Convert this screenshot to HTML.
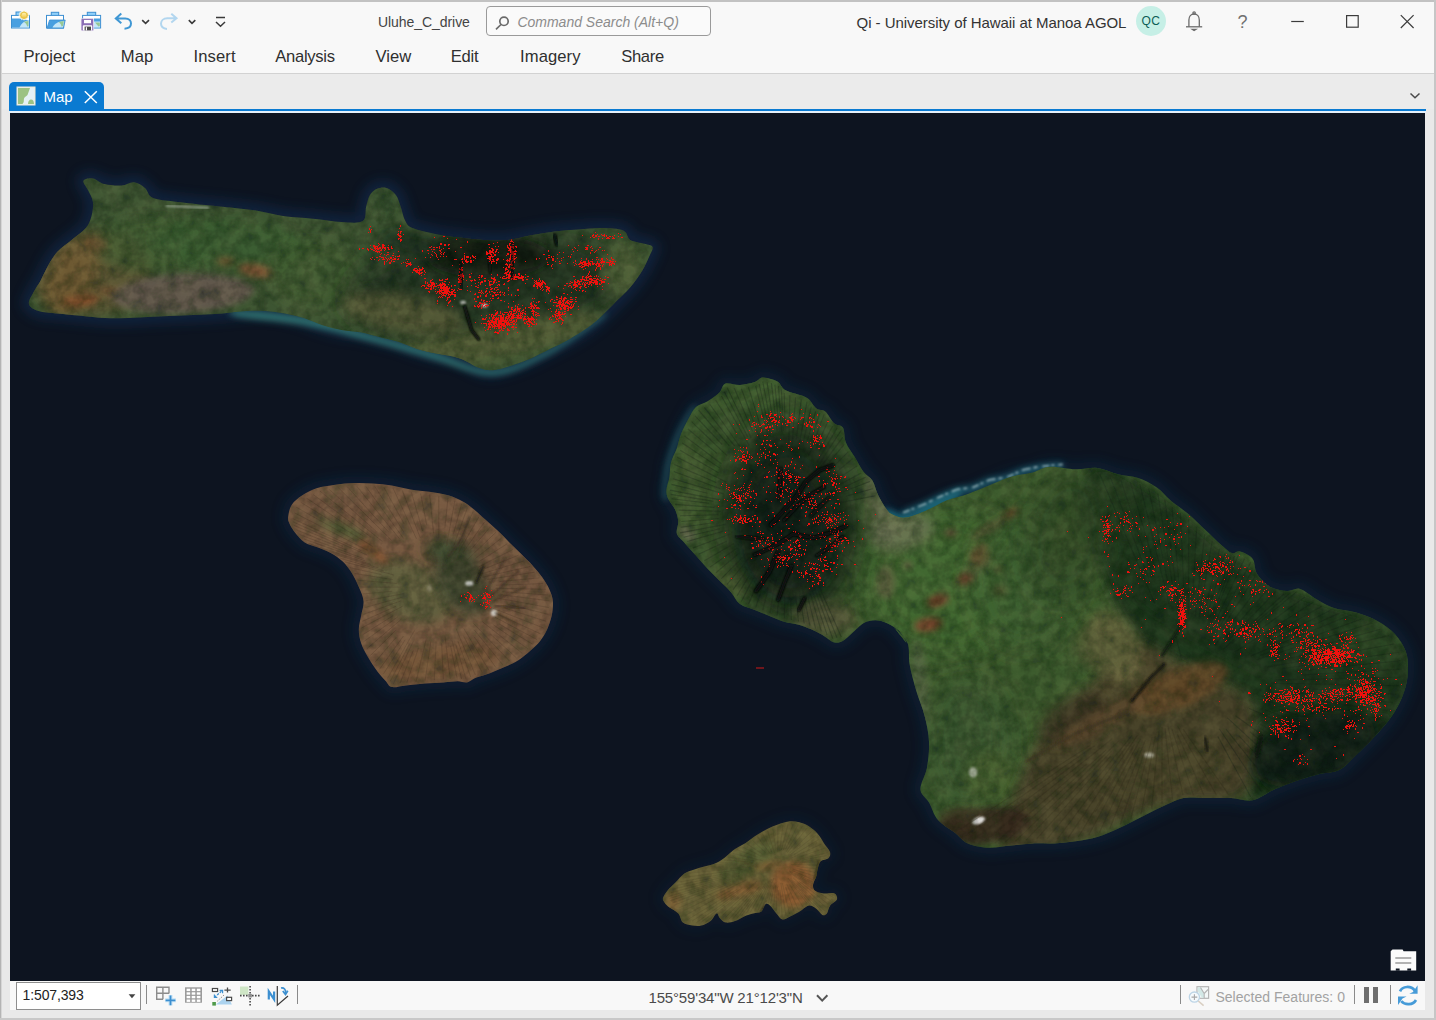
<!DOCTYPE html>
<html lang="en">
<head>
<meta charset="utf-8">
<title>Uluhe_C_drive - Map - ArcGIS Pro</title>
<style>
*{box-sizing:border-box;margin:0;padding:0}
html,body{width:1436px;height:1020px;overflow:hidden}
body{position:relative;background:#e9e9e9;font-family:"Liberation Sans",sans-serif;color:#333}
.abs{position:absolute}
#frame-t{left:0;top:0;width:1436px;height:2px;background:#c2c2c2}
#frame-l{left:0;top:0;width:2px;height:1020px;background:#d6d6d6;border-left:1px solid #b4b4b4}
#frame-r{left:1434px;top:0;width:2px;height:1020px;background:#c6c6c6}
#frame-b{left:0;top:1018px;width:1436px;height:2px;background:#c8c8c8}
#titlebar{left:2px;top:2px;width:1432px;height:71px;background:#f8f8f8}
#menuline{left:2px;top:73px;width:1432px;height:1px;background:#d2d2d2}
#tabstrip{left:2px;top:74px;width:1432px;height:35px;background:#ebebeb}
.t{position:absolute;white-space:nowrap;line-height:1}
.menu{font-size:16.6px;color:#2f2f2f;top:48.7px}
#tab{left:9px;top:82px;width:95px;height:28px;background:#0a7ad1;border-radius:5px 5px 0 0}
#tabline{left:9px;top:109px;width:1417px;height:2px;background:#0a7ad1}
#tabline2{left:9px;top:111px;width:1417px;height:2px;background:#e4f0fa}
#map{left:10px;top:113px;width:1415px;height:868px;background:#0d1420;overflow:hidden}
#status{left:10px;top:981px;width:1415px;height:29px;background:#f8f8f8}
#scalebox{left:16px;top:982px;width:125px;height:28px;background:#fff;border:1px solid #8e8e8e}
.sep{position:absolute;width:1px;background:#8a8a8a;top:985px;height:19px}
svg{position:absolute;overflow:visible}
</style>
</head>
<body>
<div class="abs" id="titlebar"></div>
<div class="abs" id="menuline"></div>
<div class="abs" id="tabstrip"></div>
<div class="abs" id="frame-t"></div><div class="abs" id="frame-l"></div><div class="abs" id="frame-r"></div><div class="abs" id="frame-b"></div>


<div class="t" style="left:378px;top:15.2px;font-size:14px;letter-spacing:-.06px;color:#444">Uluhe_C_drive</div>
<div class="abs" style="left:486px;top:6px;width:225px;height:30px;border:1px solid #9a9a9a;border-radius:4px;background:#fafafa"></div>
<div class="t" style="left:517.4px;top:15.2px;font-size:14px;font-style:italic;color:#8c8c8c">Command Search (Alt+Q)</div>
<div class="t" style="left:856.6px;top:14.8px;font-size:15px;letter-spacing:-.05px;color:#333">Qi - University of Hawaii at Manoa AGOL</div>
<div class="abs" style="left:1136px;top:6px;width:30px;height:30px;border-radius:50%;background:#c6efe6"></div>
<div class="t" style="left:1141.6px;top:15.1px;font-size:12px;letter-spacing:.3px;color:#0b5d55">QC</div>
<div class="t" style="left:1237.6px;top:13.3px;font-size:18px;color:#707070">?</div>

<div class="t menu" style="left:23.5px">Project</div>
<div class="t menu" style="left:120.8px;letter-spacing:.1px">Map</div>
<div class="t menu" style="left:193.5px;letter-spacing:.1px">Insert</div>
<div class="t menu" style="left:275.3px;letter-spacing:-.3px">Analysis</div>
<div class="t menu" style="left:375.5px">View</div>
<div class="t menu" style="left:450.7px;letter-spacing:-.25px">Edit</div>
<div class="t menu" style="left:520px;letter-spacing:.1px">Imagery</div>
<div class="t menu" style="left:621.2px;letter-spacing:-.33px">Share</div>

<div class="abs" id="tab"></div>
<div class="abs" id="tabline"></div>
<div class="abs" id="tabline2"></div>
<div class="t" style="left:43.4px;top:89.2px;font-size:15px;color:#fff">Map</div>

<div class="abs" id="map">
<svg width="1415" height="868" viewBox="10 113 1415 868">
<defs>
<filter id="b1" x="-30%" y="-30%" width="160%" height="160%"><feGaussianBlur stdDeviation="1"/></filter>
<filter id="b3" x="-60%" y="-60%" width="220%" height="220%"><feGaussianBlur stdDeviation="3"/></filter>
<filter id="b6" x="-100%" y="-100%" width="300%" height="300%"><feGaussianBlur stdDeviation="6"/></filter>
<filter id="b12" x="-150%" y="-150%" width="400%" height="400%"><feGaussianBlur stdDeviation="12"/></filter>
<filter id="b07"><feGaussianBlur stdDeviation=".7"/></filter>
<filter id="tex" x="0" y="0" width="100%" height="100%"><feTurbulence type="fractalNoise" baseFrequency=".09" numOctaves="3" seed="4" result="n"/><feColorMatrix in="n" type="matrix" values="0 0 0 0 0  0 0 0 0 0  0 0 0 0 0  1.6 0 0 0 -.55" result="a"/><feComposite in="SourceGraphic" in2="a" operator="in"/></filter>
<filter id="tex2" x="0" y="0" width="100%" height="100%"><feTurbulence type="fractalNoise" baseFrequency=".05" numOctaves="4" seed="11" result="n"/><feColorMatrix in="n" type="matrix" values="0 0 0 0 0  0 0 0 0 0  0 0 0 0 0  0 1.8 0 0 -.6" result="a"/><feComposite in="SourceGraphic" in2="a" operator="in"/></filter>
<clipPath id="c-mol"><path d="M83.4 180.8C84.2 178.8 89.3 177.9 92.9 178.4C96.4 179.0 100.0 182.9 104.7 184.1C109.4 185.3 116.4 185.8 121.3 185.5C126.2 185.2 130.1 181.8 134.1 182.2C138.0 182.6 142.0 185.4 145.0 187.9C148.0 190.4 147.7 195.1 152.1 197.4C156.4 199.6 163.1 200.0 171.0 201.1C178.9 202.3 190.7 203.5 199.4 204.5C208.1 205.4 213.6 205.8 223.1 206.8C232.6 207.9 246.0 209.0 256.2 210.6C266.5 212.2 275.2 215.0 284.7 216.3C294.1 217.6 303.6 217.7 313.1 218.7C322.5 219.6 333.2 221.6 341.5 222.0C349.8 222.4 358.7 223.6 362.8 221.0C366.9 218.5 364.9 211.2 366.1 206.8C367.3 202.5 368.1 198.0 369.9 195.0C371.7 192.0 374.2 190.0 377.0 188.8C379.8 187.6 383.3 186.9 386.5 187.9C389.6 188.9 393.6 191.8 395.9 195.0C398.3 198.1 399.1 202.5 400.7 206.8C402.2 211.2 403.4 217.5 405.4 221.0C407.4 224.6 407.4 225.9 412.5 228.1C417.6 230.3 428.3 232.7 436.2 234.3C444.1 235.9 452.0 236.7 459.9 237.6C467.8 238.6 475.6 239.6 483.5 240.0C491.4 240.4 499.3 240.8 507.2 240.0C515.1 239.2 523.0 236.7 530.9 235.2C538.8 233.8 546.7 232.4 554.6 231.4C562.5 230.5 570.4 230.1 578.2 229.6C586.1 229.0 594.4 228.0 601.9 228.1C609.4 228.3 618.5 228.5 623.2 230.5C628.0 232.5 626.8 237.8 630.3 240.0C633.9 242.2 640.8 242.6 644.5 243.8C648.2 244.9 651.8 244.9 652.6 247.1C653.4 249.2 651.0 252.6 649.3 256.5C647.5 260.5 645.3 265.6 642.2 270.8C639.0 275.9 634.7 282.2 630.3 287.3C626.0 292.5 620.9 296.8 616.1 301.5C611.4 306.3 606.7 311.4 601.9 315.7C597.2 320.1 593.2 323.6 587.7 327.6C582.2 331.5 575.1 335.9 568.8 339.4C562.5 343.0 556.1 345.7 549.8 348.9C543.5 352.0 537.2 355.6 530.9 358.4C524.6 361.1 518.3 363.5 511.9 365.5C505.6 367.4 498.5 369.8 493.0 370.2C487.5 370.6 484.3 369.8 478.8 367.8C473.3 365.9 467.0 360.7 459.9 358.4C452.8 356.0 443.3 355.2 436.2 353.6C429.1 352.0 423.6 350.9 417.2 348.9C410.9 346.9 404.6 343.8 398.3 341.8C392.0 339.8 385.7 338.6 379.4 337.0C373.0 335.5 366.7 333.5 360.4 332.3C354.1 331.1 347.8 331.1 341.5 329.9C335.2 328.8 328.8 327.2 322.5 325.2C316.2 323.2 309.9 320.1 303.6 318.1C297.3 316.1 291.0 314.6 284.7 313.4C278.3 312.2 272.0 311.4 265.7 311.0C259.4 310.6 253.9 310.6 246.8 311.0C239.7 311.4 231.0 312.7 223.1 313.4C215.2 314.0 207.3 314.4 199.4 314.8C191.5 315.2 183.6 315.4 175.7 315.7C167.8 316.1 160.0 316.3 152.1 316.7C144.2 317.1 136.3 317.9 128.4 318.1C120.5 318.3 112.6 318.5 104.7 318.1C96.8 317.7 88.9 316.5 81.0 315.7C73.1 314.9 64.5 314.2 57.4 313.4C50.3 312.6 43.1 312.6 38.4 311.0C33.7 309.4 29.7 307.1 28.9 303.9C28.2 300.7 31.7 296.0 33.7 292.1C35.6 288.1 38.4 284.6 40.8 280.2C43.1 275.9 45.1 270.8 47.9 266.0C50.6 261.3 53.4 256.2 57.4 251.8C61.3 247.5 66.8 243.9 71.6 240.0C76.3 236.0 82.5 232.1 85.8 228.1C89.1 224.2 90.3 220.6 91.4 216.3C92.6 212.0 93.4 206.4 92.9 202.1C92.3 197.7 89.7 193.8 88.1 190.3C86.6 186.7 82.6 182.8 83.4 180.8Z"/></clipPath>
<clipPath id="c-lan"><path d="M288.2 516.5C288.6 513.3 289.4 508.2 291.8 504.7C294.1 501.2 298.2 498.0 302.4 495.3C306.5 492.5 311.0 490.0 316.5 488.2C322.0 486.5 329.0 485.6 335.3 484.7C341.6 483.8 347.8 483.3 354.1 483.1C360.4 482.9 366.7 483.1 372.9 483.5C379.2 483.9 385.5 484.4 391.8 485.4C398.0 486.4 404.3 488.4 410.6 489.4C416.9 490.5 423.1 490.8 429.4 491.8C435.7 492.7 442.7 493.7 448.2 495.3C453.7 496.9 458.0 498.8 462.4 501.2C466.7 503.5 470.2 506.3 474.1 509.4C478.0 512.5 482.0 516.5 485.9 520.0C489.8 523.5 493.7 526.9 497.6 530.6C501.6 534.3 505.5 538.4 509.4 542.4C513.3 546.3 517.3 550.2 521.2 554.1C525.1 558.0 529.4 562.0 532.9 565.9C536.5 569.8 539.6 573.7 542.4 577.6C545.1 581.6 547.6 585.5 549.4 589.4C551.2 593.3 552.5 596.9 552.9 601.2C553.3 605.5 552.7 610.6 551.8 615.3C550.8 620.0 549.0 625.1 547.1 629.4C545.1 633.7 542.7 637.6 540.0 641.2C537.3 644.7 534.1 647.5 530.6 650.6C527.1 653.7 523.1 657.3 518.8 660.0C514.5 662.7 509.4 664.9 504.7 667.1C500.0 669.2 495.3 671.2 490.6 672.9C485.9 674.7 480.4 676.1 476.5 677.6C472.5 679.2 470.2 681.8 467.1 682.4C463.9 682.9 461.6 681.2 457.6 681.2C453.7 681.2 449.0 682.0 443.5 682.4C438.0 682.7 431.0 683.0 424.7 683.5C418.4 684.0 411.4 684.8 405.9 685.4C400.4 686.0 395.1 687.8 391.8 687.1C388.4 686.4 388.2 683.7 385.9 681.2C383.5 678.6 380.6 675.7 377.6 671.8C374.7 667.8 371.0 662.4 368.2 657.6C365.5 652.9 362.7 648.2 361.2 643.5C359.6 638.8 358.8 634.1 358.8 629.4C358.8 624.7 360.4 620.0 361.2 615.3C362.0 610.6 363.9 605.9 363.5 601.2C363.1 596.5 360.8 591.8 358.8 587.1C356.9 582.4 354.5 577.3 351.8 572.9C349.0 568.6 345.9 564.5 342.4 561.2C338.8 557.8 334.9 555.3 330.6 552.9C326.3 550.6 320.8 548.8 316.5 547.1C312.2 545.3 308.2 544.7 304.7 542.4C301.2 540.0 297.8 536.1 295.3 532.9C292.7 529.8 290.6 526.3 289.4 523.5C288.2 520.8 287.8 519.6 288.2 516.5Z"/></clipPath>
<clipPath id="c-kah"><path d="M663.0 898.1C663.5 896.0 665.5 892.9 667.6 890.4C669.6 887.8 672.4 885.5 675.2 882.7C678.0 879.9 681.4 875.7 684.4 873.5C687.5 871.4 690.3 870.9 693.6 869.7C696.9 868.6 700.5 867.8 704.3 866.6C708.2 865.5 713.0 864.5 716.6 862.8C720.2 861.2 722.7 859.0 725.8 856.7C728.9 854.4 731.7 851.3 735.0 849.0C738.3 846.7 742.1 845.2 745.7 842.9C749.3 840.6 752.9 837.5 756.4 835.2C760.0 832.9 763.6 830.9 767.2 829.1C770.7 827.3 774.3 825.8 777.9 824.5C781.5 823.2 785.0 821.8 788.6 821.4C792.2 821.1 796.0 821.4 799.3 822.2C802.7 823.0 805.5 824.1 808.5 826.0C811.6 828.0 815.2 830.9 817.7 833.7C820.3 836.5 821.8 839.8 823.8 842.9C825.9 846.0 829.2 849.5 830.0 852.1C830.7 854.6 830.0 856.7 828.4 858.2C826.9 859.7 822.6 859.5 820.8 861.3C819.0 863.1 818.5 866.4 817.7 868.9C816.9 871.5 816.9 874.0 816.2 876.6C815.4 879.2 813.4 882.0 813.1 884.3C812.9 886.6 812.9 888.9 814.7 890.4C816.4 891.9 820.5 892.9 823.8 893.5C827.2 894.0 832.4 892.4 834.6 893.5C836.7 894.5 837.6 897.5 836.9 899.6C836.1 901.6 831.6 903.4 830.0 905.7C828.3 908.0 828.2 911.8 826.9 913.4C825.6 914.9 824.1 915.7 822.3 914.9C820.5 914.1 818.5 910.3 816.2 908.8C813.9 907.2 811.3 905.2 808.5 905.7C805.7 906.2 802.4 910.1 799.3 911.8C796.3 913.6 792.9 915.2 790.1 916.4C787.3 917.7 784.8 920.0 782.5 919.5C780.2 919.0 778.4 915.7 776.4 913.4C774.3 911.1 772.0 907.2 770.2 905.7C768.4 904.2 767.2 903.2 765.6 904.2C764.1 905.2 763.1 910.3 761.0 911.8C759.0 913.4 756.2 912.6 753.4 913.4C750.6 914.1 747.2 915.2 744.2 916.4C741.1 917.7 738.1 920.0 735.0 921.0C731.9 922.1 728.3 923.1 725.8 922.6C723.2 922.1 721.2 919.5 719.7 918.0C718.1 916.4 718.1 912.9 716.6 913.4C715.1 913.9 713.0 919.0 710.5 921.0C707.9 923.1 704.3 924.9 701.3 925.6C698.2 926.4 695.2 926.1 692.1 925.6C689.0 925.1 685.2 924.6 682.9 922.6C680.6 920.5 680.6 915.9 678.3 913.4C676.0 910.8 671.4 909.0 669.1 907.2C666.8 905.5 665.5 904.2 664.5 902.6C663.5 901.1 662.5 900.1 663.0 898.1Z"/></clipPath>
<clipPath id="c-maui"><path d="M885.9 511.2C887.1 511.0 896.7 517.7 903.1 517.7C909.6 517.7 917.5 514.1 924.7 511.2C931.9 508.3 939.1 503.3 946.3 500.4C953.5 497.5 960.7 496.5 967.9 493.9C975.1 491.4 982.3 488.2 989.4 485.3C996.6 482.4 1003.8 478.8 1011.0 476.7C1018.2 474.5 1026.1 474.0 1032.6 472.4C1039.1 470.7 1042.7 467.3 1049.9 466.8C1057.0 466.2 1067.8 469.1 1075.7 469.3C1083.7 469.6 1090.1 467.2 1097.3 468.0C1104.5 468.9 1112.1 472.9 1118.9 474.5C1125.7 476.2 1132.0 475.8 1138.3 478.0C1144.6 480.1 1151.3 483.6 1156.9 487.5C1162.4 491.3 1166.2 496.8 1171.5 501.3C1176.9 505.7 1183.2 509.5 1188.8 514.2C1194.4 519.0 1199.9 524.7 1205.2 529.8C1210.5 534.8 1216.3 540.5 1220.7 544.4C1225.2 548.3 1228.8 551.9 1231.9 553.1C1235.1 554.2 1236.3 550.4 1239.7 551.3C1243.2 552.3 1249.8 554.9 1252.7 558.7C1255.5 562.4 1254.1 569.1 1257.0 573.8C1259.8 578.4 1264.9 583.8 1269.9 586.7C1275.0 589.6 1282.1 590.7 1287.2 591.0C1292.2 591.4 1295.1 587.4 1300.1 588.9C1305.2 590.3 1311.6 596.4 1317.4 599.7C1323.1 602.9 1328.2 606.1 1334.6 608.3C1341.1 610.4 1349.0 610.4 1356.2 612.6C1363.4 614.8 1371.3 617.6 1377.8 621.2C1384.3 624.8 1390.4 629.1 1395.0 634.2C1399.7 639.2 1403.7 645.7 1405.8 651.4C1408.0 657.2 1408.0 662.9 1408.0 668.7C1408.0 674.4 1407.3 680.2 1405.8 686.0C1404.4 691.7 1402.2 697.5 1399.4 703.2C1396.5 709.0 1392.9 714.7 1388.6 720.5C1384.3 726.2 1378.9 732.0 1373.5 737.7C1368.1 743.5 1362.0 749.6 1356.2 755.0C1350.5 760.4 1345.4 766.9 1339.0 770.1C1332.5 773.3 1324.6 772.6 1317.4 774.4C1310.2 776.2 1303.0 778.4 1295.8 780.9C1288.6 783.4 1281.4 786.3 1274.2 789.5C1267.0 792.7 1259.8 798.9 1252.7 800.3C1245.5 801.7 1239.0 798.5 1231.1 798.1C1223.2 797.8 1213.1 798.1 1205.2 798.1C1197.3 798.1 1190.8 796.7 1183.6 798.1C1176.4 799.6 1169.2 803.5 1162.0 806.8C1154.9 810.0 1147.7 814.0 1140.5 817.6C1133.3 821.2 1126.1 825.1 1118.9 828.3C1111.7 831.6 1104.5 834.8 1097.3 837.0C1090.1 839.1 1082.9 840.2 1075.7 841.3C1068.6 842.4 1061.4 843.1 1054.2 843.4C1047.0 843.8 1039.8 843.1 1032.6 843.4C1025.4 843.8 1018.2 844.9 1011.0 845.6C1003.8 846.3 996.6 848.1 989.4 847.8C982.3 847.4 973.6 846.0 967.9 843.4C962.1 840.9 960.0 836.6 954.9 832.7C949.9 828.7 942.0 824.7 937.7 819.7C933.4 814.7 931.9 807.5 929.0 802.5C926.2 797.4 920.8 795.3 920.4 789.5C920.0 783.8 925.4 775.8 926.9 767.9C928.3 760.0 929.4 750.7 929.0 742.0C928.7 733.4 926.9 724.8 924.7 716.2C922.6 707.5 918.6 698.9 916.1 690.3C913.6 681.6 911.1 672.3 909.6 664.4C908.2 656.5 910.0 648.9 907.5 642.8C904.9 636.7 894.7 627.8 894.5 627.7C894.3 627.6 905.5 641.9 906.2 642.4C906.9 642.8 902.0 633.8 898.8 630.6C895.6 627.4 891.0 625.0 887.1 623.2C883.1 621.5 879.2 620.3 875.3 620.3C871.4 620.3 867.5 621.0 863.5 623.2C859.6 625.4 855.2 630.6 851.8 633.5C848.3 636.5 845.9 639.4 842.9 640.9C840.0 642.4 837.5 643.3 834.1 642.4C830.7 641.4 826.3 637.2 822.4 635.0C818.4 632.8 814.5 630.8 810.6 629.1C806.7 627.4 803.2 625.9 798.8 624.7C794.4 623.5 789.0 623.2 784.1 621.8C779.2 620.3 774.3 617.8 769.4 615.9C764.5 613.9 759.6 612.0 754.7 610.0C749.8 608.0 743.9 607.1 740.0 604.1C736.1 601.2 734.6 596.3 731.2 592.4C727.7 588.4 723.3 584.5 719.4 580.6C715.5 576.7 711.6 573.0 707.6 568.8C703.7 564.7 699.8 560.0 695.9 555.6C692.0 551.2 687.3 546.0 684.1 542.4C680.9 538.7 677.7 537.0 676.8 533.5C675.8 530.1 678.5 525.7 678.2 521.8C678.0 517.8 677.0 513.9 675.3 510.0C673.6 506.1 669.4 501.7 667.9 498.2C666.5 494.8 666.2 492.8 666.5 489.4C666.7 486.0 668.7 482.1 669.4 477.6C670.1 473.2 669.7 467.8 670.9 462.9C672.1 458.0 675.0 453.1 676.8 448.2C678.5 443.3 679.2 438.4 681.2 433.5C683.1 428.6 686.1 423.2 688.5 418.8C691.0 414.4 692.7 410.0 695.9 407.1C699.1 404.1 703.7 403.6 707.6 401.2C711.6 398.7 716.5 395.3 719.4 392.4C722.4 389.4 721.9 384.8 725.3 383.5C728.7 382.3 735.1 385.2 740.0 385.0C744.9 384.8 751.0 383.3 754.7 382.1C758.4 380.8 759.4 378.1 762.1 377.6C764.8 377.2 768.2 378.4 770.9 379.1C773.6 379.9 776.0 380.3 778.2 382.1C780.4 383.8 781.2 387.5 784.1 389.4C787.1 391.4 792.0 392.4 795.9 393.8C799.8 395.3 804.2 395.8 807.6 398.2C811.1 400.7 813.5 406.3 816.5 408.5C819.4 410.7 822.4 409.0 825.3 411.5C828.2 413.9 831.2 420.5 834.1 423.2C837.1 425.9 841.0 424.5 842.9 427.6C844.9 430.8 843.9 437.5 845.9 442.4C847.8 447.3 851.8 452.2 854.7 457.1C857.6 462.0 860.6 467.8 863.5 471.8C866.5 475.7 869.9 476.7 872.4 480.6C874.8 484.5 875.8 490.4 878.2 495.3C880.7 500.2 884.1 506.1 887.1 510.0C890.0 513.9 896.1 518.6 895.9 518.8C895.7 519.0 884.7 511.4 885.9 511.2Z"/></clipPath>
</defs>
<rect x="10" y="113" width="1415" height="868" fill="#0d1420"/>
<path d="M83.4 180.8C84.2 178.8 89.3 177.9 92.9 178.4C96.4 179.0 100.0 182.9 104.7 184.1C109.4 185.3 116.4 185.8 121.3 185.5C126.2 185.2 130.1 181.8 134.1 182.2C138.0 182.6 142.0 185.4 145.0 187.9C148.0 190.4 147.7 195.1 152.1 197.4C156.4 199.6 163.1 200.0 171.0 201.1C178.9 202.3 190.7 203.5 199.4 204.5C208.1 205.4 213.6 205.8 223.1 206.8C232.6 207.9 246.0 209.0 256.2 210.6C266.5 212.2 275.2 215.0 284.7 216.3C294.1 217.6 303.6 217.7 313.1 218.7C322.5 219.6 333.2 221.6 341.5 222.0C349.8 222.4 358.7 223.6 362.8 221.0C366.9 218.5 364.9 211.2 366.1 206.8C367.3 202.5 368.1 198.0 369.9 195.0C371.7 192.0 374.2 190.0 377.0 188.8C379.8 187.6 383.3 186.9 386.5 187.9C389.6 188.9 393.6 191.8 395.9 195.0C398.3 198.1 399.1 202.5 400.7 206.8C402.2 211.2 403.4 217.5 405.4 221.0C407.4 224.6 407.4 225.9 412.5 228.1C417.6 230.3 428.3 232.7 436.2 234.3C444.1 235.9 452.0 236.7 459.9 237.6C467.8 238.6 475.6 239.6 483.5 240.0C491.4 240.4 499.3 240.8 507.2 240.0C515.1 239.2 523.0 236.7 530.9 235.2C538.8 233.8 546.7 232.4 554.6 231.4C562.5 230.5 570.4 230.1 578.2 229.6C586.1 229.0 594.4 228.0 601.9 228.1C609.4 228.3 618.5 228.5 623.2 230.5C628.0 232.5 626.8 237.8 630.3 240.0C633.9 242.2 640.8 242.6 644.5 243.8C648.2 244.9 651.8 244.9 652.6 247.1C653.4 249.2 651.0 252.6 649.3 256.5C647.5 260.5 645.3 265.6 642.2 270.8C639.0 275.9 634.7 282.2 630.3 287.3C626.0 292.5 620.9 296.8 616.1 301.5C611.4 306.3 606.7 311.4 601.9 315.7C597.2 320.1 593.2 323.6 587.7 327.6C582.2 331.5 575.1 335.9 568.8 339.4C562.5 343.0 556.1 345.7 549.8 348.9C543.5 352.0 537.2 355.6 530.9 358.4C524.6 361.1 518.3 363.5 511.9 365.5C505.6 367.4 498.5 369.8 493.0 370.2C487.5 370.6 484.3 369.8 478.8 367.8C473.3 365.9 467.0 360.7 459.9 358.4C452.8 356.0 443.3 355.2 436.2 353.6C429.1 352.0 423.6 350.9 417.2 348.9C410.9 346.9 404.6 343.8 398.3 341.8C392.0 339.8 385.7 338.6 379.4 337.0C373.0 335.5 366.7 333.5 360.4 332.3C354.1 331.1 347.8 331.1 341.5 329.9C335.2 328.8 328.8 327.2 322.5 325.2C316.2 323.2 309.9 320.1 303.6 318.1C297.3 316.1 291.0 314.6 284.7 313.4C278.3 312.2 272.0 311.4 265.7 311.0C259.4 310.6 253.9 310.6 246.8 311.0C239.7 311.4 231.0 312.7 223.1 313.4C215.2 314.0 207.3 314.4 199.4 314.8C191.5 315.2 183.6 315.4 175.7 315.7C167.8 316.1 160.0 316.3 152.1 316.7C144.2 317.1 136.3 317.9 128.4 318.1C120.5 318.3 112.6 318.5 104.7 318.1C96.8 317.7 88.9 316.5 81.0 315.7C73.1 314.9 64.5 314.2 57.4 313.4C50.3 312.6 43.1 312.6 38.4 311.0C33.7 309.4 29.7 307.1 28.9 303.9C28.2 300.7 31.7 296.0 33.7 292.1C35.6 288.1 38.4 284.6 40.8 280.2C43.1 275.9 45.1 270.8 47.9 266.0C50.6 261.3 53.4 256.2 57.4 251.8C61.3 247.5 66.8 243.9 71.6 240.0C76.3 236.0 82.5 232.1 85.8 228.1C89.1 224.2 90.3 220.6 91.4 216.3C92.6 212.0 93.4 206.4 92.9 202.1C92.3 197.7 89.7 193.8 88.1 190.3C86.6 186.7 82.6 182.8 83.4 180.8Z" fill="none" stroke="#123660" stroke-width="14" filter="url(#b6)" opacity="0.45"/>
<path d="M288.2 516.5C288.6 513.3 289.4 508.2 291.8 504.7C294.1 501.2 298.2 498.0 302.4 495.3C306.5 492.5 311.0 490.0 316.5 488.2C322.0 486.5 329.0 485.6 335.3 484.7C341.6 483.8 347.8 483.3 354.1 483.1C360.4 482.9 366.7 483.1 372.9 483.5C379.2 483.9 385.5 484.4 391.8 485.4C398.0 486.4 404.3 488.4 410.6 489.4C416.9 490.5 423.1 490.8 429.4 491.8C435.7 492.7 442.7 493.7 448.2 495.3C453.7 496.9 458.0 498.8 462.4 501.2C466.7 503.5 470.2 506.3 474.1 509.4C478.0 512.5 482.0 516.5 485.9 520.0C489.8 523.5 493.7 526.9 497.6 530.6C501.6 534.3 505.5 538.4 509.4 542.4C513.3 546.3 517.3 550.2 521.2 554.1C525.1 558.0 529.4 562.0 532.9 565.9C536.5 569.8 539.6 573.7 542.4 577.6C545.1 581.6 547.6 585.5 549.4 589.4C551.2 593.3 552.5 596.9 552.9 601.2C553.3 605.5 552.7 610.6 551.8 615.3C550.8 620.0 549.0 625.1 547.1 629.4C545.1 633.7 542.7 637.6 540.0 641.2C537.3 644.7 534.1 647.5 530.6 650.6C527.1 653.7 523.1 657.3 518.8 660.0C514.5 662.7 509.4 664.9 504.7 667.1C500.0 669.2 495.3 671.2 490.6 672.9C485.9 674.7 480.4 676.1 476.5 677.6C472.5 679.2 470.2 681.8 467.1 682.4C463.9 682.9 461.6 681.2 457.6 681.2C453.7 681.2 449.0 682.0 443.5 682.4C438.0 682.7 431.0 683.0 424.7 683.5C418.4 684.0 411.4 684.8 405.9 685.4C400.4 686.0 395.1 687.8 391.8 687.1C388.4 686.4 388.2 683.7 385.9 681.2C383.5 678.6 380.6 675.7 377.6 671.8C374.7 667.8 371.0 662.4 368.2 657.6C365.5 652.9 362.7 648.2 361.2 643.5C359.6 638.8 358.8 634.1 358.8 629.4C358.8 624.7 360.4 620.0 361.2 615.3C362.0 610.6 363.9 605.9 363.5 601.2C363.1 596.5 360.8 591.8 358.8 587.1C356.9 582.4 354.5 577.3 351.8 572.9C349.0 568.6 345.9 564.5 342.4 561.2C338.8 557.8 334.9 555.3 330.6 552.9C326.3 550.6 320.8 548.8 316.5 547.1C312.2 545.3 308.2 544.7 304.7 542.4C301.2 540.0 297.8 536.1 295.3 532.9C292.7 529.8 290.6 526.3 289.4 523.5C288.2 520.8 287.8 519.6 288.2 516.5Z" fill="none" stroke="#112c4a" stroke-width="12" filter="url(#b6)" opacity="0.45"/>
<path d="M663.0 898.1C663.5 896.0 665.5 892.9 667.6 890.4C669.6 887.8 672.4 885.5 675.2 882.7C678.0 879.9 681.4 875.7 684.4 873.5C687.5 871.4 690.3 870.9 693.6 869.7C696.9 868.6 700.5 867.8 704.3 866.6C708.2 865.5 713.0 864.5 716.6 862.8C720.2 861.2 722.7 859.0 725.8 856.7C728.9 854.4 731.7 851.3 735.0 849.0C738.3 846.7 742.1 845.2 745.7 842.9C749.3 840.6 752.9 837.5 756.4 835.2C760.0 832.9 763.6 830.9 767.2 829.1C770.7 827.3 774.3 825.8 777.9 824.5C781.5 823.2 785.0 821.8 788.6 821.4C792.2 821.1 796.0 821.4 799.3 822.2C802.7 823.0 805.5 824.1 808.5 826.0C811.6 828.0 815.2 830.9 817.7 833.7C820.3 836.5 821.8 839.8 823.8 842.9C825.9 846.0 829.2 849.5 830.0 852.1C830.7 854.6 830.0 856.7 828.4 858.2C826.9 859.7 822.6 859.5 820.8 861.3C819.0 863.1 818.5 866.4 817.7 868.9C816.9 871.5 816.9 874.0 816.2 876.6C815.4 879.2 813.4 882.0 813.1 884.3C812.9 886.6 812.9 888.9 814.7 890.4C816.4 891.9 820.5 892.9 823.8 893.5C827.2 894.0 832.4 892.4 834.6 893.5C836.7 894.5 837.6 897.5 836.9 899.6C836.1 901.6 831.6 903.4 830.0 905.7C828.3 908.0 828.2 911.8 826.9 913.4C825.6 914.9 824.1 915.7 822.3 914.9C820.5 914.1 818.5 910.3 816.2 908.8C813.9 907.2 811.3 905.2 808.5 905.7C805.7 906.2 802.4 910.1 799.3 911.8C796.3 913.6 792.9 915.2 790.1 916.4C787.3 917.7 784.8 920.0 782.5 919.5C780.2 919.0 778.4 915.7 776.4 913.4C774.3 911.1 772.0 907.2 770.2 905.7C768.4 904.2 767.2 903.2 765.6 904.2C764.1 905.2 763.1 910.3 761.0 911.8C759.0 913.4 756.2 912.6 753.4 913.4C750.6 914.1 747.2 915.2 744.2 916.4C741.1 917.7 738.1 920.0 735.0 921.0C731.9 922.1 728.3 923.1 725.8 922.6C723.2 922.1 721.2 919.5 719.7 918.0C718.1 916.4 718.1 912.9 716.6 913.4C715.1 913.9 713.0 919.0 710.5 921.0C707.9 923.1 704.3 924.9 701.3 925.6C698.2 926.4 695.2 926.1 692.1 925.6C689.0 925.1 685.2 924.6 682.9 922.6C680.6 920.5 680.6 915.9 678.3 913.4C676.0 910.8 671.4 909.0 669.1 907.2C666.8 905.5 665.5 904.2 664.5 902.6C663.5 901.1 662.5 900.1 663.0 898.1Z" fill="none" stroke="#102643" stroke-width="8" filter="url(#b6)" opacity="0.35"/>
<path d="M885.9 511.2C887.1 511.0 896.7 517.7 903.1 517.7C909.6 517.7 917.5 514.1 924.7 511.2C931.9 508.3 939.1 503.3 946.3 500.4C953.5 497.5 960.7 496.5 967.9 493.9C975.1 491.4 982.3 488.2 989.4 485.3C996.6 482.4 1003.8 478.8 1011.0 476.7C1018.2 474.5 1026.1 474.0 1032.6 472.4C1039.1 470.7 1042.7 467.3 1049.9 466.8C1057.0 466.2 1067.8 469.1 1075.7 469.3C1083.7 469.6 1090.1 467.2 1097.3 468.0C1104.5 468.9 1112.1 472.9 1118.9 474.5C1125.7 476.2 1132.0 475.8 1138.3 478.0C1144.6 480.1 1151.3 483.6 1156.9 487.5C1162.4 491.3 1166.2 496.8 1171.5 501.3C1176.9 505.7 1183.2 509.5 1188.8 514.2C1194.4 519.0 1199.9 524.7 1205.2 529.8C1210.5 534.8 1216.3 540.5 1220.7 544.4C1225.2 548.3 1228.8 551.9 1231.9 553.1C1235.1 554.2 1236.3 550.4 1239.7 551.3C1243.2 552.3 1249.8 554.9 1252.7 558.7C1255.5 562.4 1254.1 569.1 1257.0 573.8C1259.8 578.4 1264.9 583.8 1269.9 586.7C1275.0 589.6 1282.1 590.7 1287.2 591.0C1292.2 591.4 1295.1 587.4 1300.1 588.9C1305.2 590.3 1311.6 596.4 1317.4 599.7C1323.1 602.9 1328.2 606.1 1334.6 608.3C1341.1 610.4 1349.0 610.4 1356.2 612.6C1363.4 614.8 1371.3 617.6 1377.8 621.2C1384.3 624.8 1390.4 629.1 1395.0 634.2C1399.7 639.2 1403.7 645.7 1405.8 651.4C1408.0 657.2 1408.0 662.9 1408.0 668.7C1408.0 674.4 1407.3 680.2 1405.8 686.0C1404.4 691.7 1402.2 697.5 1399.4 703.2C1396.5 709.0 1392.9 714.7 1388.6 720.5C1384.3 726.2 1378.9 732.0 1373.5 737.7C1368.1 743.5 1362.0 749.6 1356.2 755.0C1350.5 760.4 1345.4 766.9 1339.0 770.1C1332.5 773.3 1324.6 772.6 1317.4 774.4C1310.2 776.2 1303.0 778.4 1295.8 780.9C1288.6 783.4 1281.4 786.3 1274.2 789.5C1267.0 792.7 1259.8 798.9 1252.7 800.3C1245.5 801.7 1239.0 798.5 1231.1 798.1C1223.2 797.8 1213.1 798.1 1205.2 798.1C1197.3 798.1 1190.8 796.7 1183.6 798.1C1176.4 799.6 1169.2 803.5 1162.0 806.8C1154.9 810.0 1147.7 814.0 1140.5 817.6C1133.3 821.2 1126.1 825.1 1118.9 828.3C1111.7 831.6 1104.5 834.8 1097.3 837.0C1090.1 839.1 1082.9 840.2 1075.7 841.3C1068.6 842.4 1061.4 843.1 1054.2 843.4C1047.0 843.8 1039.8 843.1 1032.6 843.4C1025.4 843.8 1018.2 844.9 1011.0 845.6C1003.8 846.3 996.6 848.1 989.4 847.8C982.3 847.4 973.6 846.0 967.9 843.4C962.1 840.9 960.0 836.6 954.9 832.7C949.9 828.7 942.0 824.7 937.7 819.7C933.4 814.7 931.9 807.5 929.0 802.5C926.2 797.4 920.8 795.3 920.4 789.5C920.0 783.8 925.4 775.8 926.9 767.9C928.3 760.0 929.4 750.7 929.0 742.0C928.7 733.4 926.9 724.8 924.7 716.2C922.6 707.5 918.6 698.9 916.1 690.3C913.6 681.6 911.1 672.3 909.6 664.4C908.2 656.5 910.0 648.9 907.5 642.8C904.9 636.7 894.7 627.8 894.5 627.7C894.3 627.6 905.5 641.9 906.2 642.4C906.9 642.8 902.0 633.8 898.8 630.6C895.6 627.4 891.0 625.0 887.1 623.2C883.1 621.5 879.2 620.3 875.3 620.3C871.4 620.3 867.5 621.0 863.5 623.2C859.6 625.4 855.2 630.6 851.8 633.5C848.3 636.5 845.9 639.4 842.9 640.9C840.0 642.4 837.5 643.3 834.1 642.4C830.7 641.4 826.3 637.2 822.4 635.0C818.4 632.8 814.5 630.8 810.6 629.1C806.7 627.4 803.2 625.9 798.8 624.7C794.4 623.5 789.0 623.2 784.1 621.8C779.2 620.3 774.3 617.8 769.4 615.9C764.5 613.9 759.6 612.0 754.7 610.0C749.8 608.0 743.9 607.1 740.0 604.1C736.1 601.2 734.6 596.3 731.2 592.4C727.7 588.4 723.3 584.5 719.4 580.6C715.5 576.7 711.6 573.0 707.6 568.8C703.7 564.7 699.8 560.0 695.9 555.6C692.0 551.2 687.3 546.0 684.1 542.4C680.9 538.7 677.7 537.0 676.8 533.5C675.8 530.1 678.5 525.7 678.2 521.8C678.0 517.8 677.0 513.9 675.3 510.0C673.6 506.1 669.4 501.7 667.9 498.2C666.5 494.8 666.2 492.8 666.5 489.4C666.7 486.0 668.7 482.1 669.4 477.6C670.1 473.2 669.7 467.8 670.9 462.9C672.1 458.0 675.0 453.1 676.8 448.2C678.5 443.3 679.2 438.4 681.2 433.5C683.1 428.6 686.1 423.2 688.5 418.8C691.0 414.4 692.7 410.0 695.9 407.1C699.1 404.1 703.7 403.6 707.6 401.2C711.6 398.7 716.5 395.3 719.4 392.4C722.4 389.4 721.9 384.8 725.3 383.5C728.7 382.3 735.1 385.2 740.0 385.0C744.9 384.8 751.0 383.3 754.7 382.1C758.4 380.8 759.4 378.1 762.1 377.6C764.8 377.2 768.2 378.4 770.9 379.1C773.6 379.9 776.0 380.3 778.2 382.1C780.4 383.8 781.2 387.5 784.1 389.4C787.1 391.4 792.0 392.4 795.9 393.8C799.8 395.3 804.2 395.8 807.6 398.2C811.1 400.7 813.5 406.3 816.5 408.5C819.4 410.7 822.4 409.0 825.3 411.5C828.2 413.9 831.2 420.5 834.1 423.2C837.1 425.9 841.0 424.5 842.9 427.6C844.9 430.8 843.9 437.5 845.9 442.4C847.8 447.3 851.8 452.2 854.7 457.1C857.6 462.0 860.6 467.8 863.5 471.8C866.5 475.7 869.9 476.7 872.4 480.6C874.8 484.5 875.8 490.4 878.2 495.3C880.7 500.2 884.1 506.1 887.1 510.0C890.0 513.9 896.1 518.6 895.9 518.8C895.7 519.0 884.7 511.4 885.9 511.2Z" fill="none" stroke="#112e4e" stroke-width="12" filter="url(#b6)" opacity="0.4"/>
<path d="M237.3 310.0C248.3 310.0 281.5 312.7 303.6 316.7C325.7 320.6 347.8 327.7 369.8 333.7C391.9 339.7 415.6 346.7 436.1 352.7C456.7 358.6 474.0 370.3 493.0 369.7C511.9 369.1 531.6 358.0 549.8 348.9C567.9 339.7 593.6 319.5 601.9 314.8C610.1 310.0 608.6 313.7 599.5 320.5C590.4 327.2 565.2 346.3 547.4 355.5C529.6 364.6 511.5 374.6 493.0 375.4C474.4 376.2 456.7 365.9 436.1 360.2C415.6 354.5 391.9 347.1 369.8 341.3C347.8 335.4 325.7 329.3 303.6 325.2C281.5 321.1 248.3 319.2 237.3 316.7C226.2 314.1 226.2 310.0 237.3 310.0Z" fill="#3f9a8e" opacity=".65" filter="url(#b3)"/>
<path d="M885.9 509.0C889.8 508.7 900.3 516.2 907.5 515.5C914.7 514.8 920.4 508.8 929.0 504.7C937.7 500.6 954.6 492.0 959.2 490.9C963.9 489.8 962.1 494.5 957.1 498.3C952.1 502.0 937.3 509.0 929.0 513.4C920.8 517.7 915.0 523.4 907.5 524.1C899.9 524.9 887.3 520.2 883.7 517.7C880.1 515.2 881.9 509.4 885.9 509.0Z" fill="#1f7a8c" opacity=".8" filter="url(#b3)"/>
<path d="M667.9 498.2C668.3 496.5 666.0 495.3 666.5 489.4C667.0 483.5 668.4 472.3 670.9 462.9C673.3 453.6 677.0 442.8 681.2 433.5C685.3 424.2 694.2 411.2 695.9 407.1C697.6 402.9 694.7 404.1 691.5 408.5C688.3 412.9 680.9 424.5 676.8 433.5C672.6 442.6 668.8 453.6 666.5 462.9C664.2 472.3 663.3 483.3 662.9 489.4C662.5 495.5 663.3 498.2 664.1 499.7C665.0 501.2 667.5 500.0 667.9 498.2Z" fill="#2a7a80" opacity=".6" filter="url(#b3)"/>
<path d="M903.1 514.2L924.7 505.6L939.8 498.3L957.1 490.9L973.1 488.8L989.4 481.4L1006.7 478.8L1024.0 471.1L1039.9 468.0L1062.8 465.9" fill="none" stroke="#2a8a9a" stroke-width="7" opacity=".55" filter="url(#b3)"/>
<path d="M903.1 514.2L924.7 505.6L939.8 498.3L957.1 490.9L973.1 488.8L989.4 481.4L1006.7 478.8L1024.0 471.1L1039.9 468.0L1062.8 465.9" fill="none" stroke="#d4e8ea" stroke-width="1.8" stroke-dasharray="7 2 3 4 9 3 4 5" opacity=".6" filter="url(#b1)" transform="translate(0 -1.5)"/>
<g filter="url(#b07)"><path d="M83.4 180.8C84.2 178.8 89.3 177.9 92.9 178.4C96.4 179.0 100.0 182.9 104.7 184.1C109.4 185.3 116.4 185.8 121.3 185.5C126.2 185.2 130.1 181.8 134.1 182.2C138.0 182.6 142.0 185.4 145.0 187.9C148.0 190.4 147.7 195.1 152.1 197.4C156.4 199.6 163.1 200.0 171.0 201.1C178.9 202.3 190.7 203.5 199.4 204.5C208.1 205.4 213.6 205.8 223.1 206.8C232.6 207.9 246.0 209.0 256.2 210.6C266.5 212.2 275.2 215.0 284.7 216.3C294.1 217.6 303.6 217.7 313.1 218.7C322.5 219.6 333.2 221.6 341.5 222.0C349.8 222.4 358.7 223.6 362.8 221.0C366.9 218.5 364.9 211.2 366.1 206.8C367.3 202.5 368.1 198.0 369.9 195.0C371.7 192.0 374.2 190.0 377.0 188.8C379.8 187.6 383.3 186.9 386.5 187.9C389.6 188.9 393.6 191.8 395.9 195.0C398.3 198.1 399.1 202.5 400.7 206.8C402.2 211.2 403.4 217.5 405.4 221.0C407.4 224.6 407.4 225.9 412.5 228.1C417.6 230.3 428.3 232.7 436.2 234.3C444.1 235.9 452.0 236.7 459.9 237.6C467.8 238.6 475.6 239.6 483.5 240.0C491.4 240.4 499.3 240.8 507.2 240.0C515.1 239.2 523.0 236.7 530.9 235.2C538.8 233.8 546.7 232.4 554.6 231.4C562.5 230.5 570.4 230.1 578.2 229.6C586.1 229.0 594.4 228.0 601.9 228.1C609.4 228.3 618.5 228.5 623.2 230.5C628.0 232.5 626.8 237.8 630.3 240.0C633.9 242.2 640.8 242.6 644.5 243.8C648.2 244.9 651.8 244.9 652.6 247.1C653.4 249.2 651.0 252.6 649.3 256.5C647.5 260.5 645.3 265.6 642.2 270.8C639.0 275.9 634.7 282.2 630.3 287.3C626.0 292.5 620.9 296.8 616.1 301.5C611.4 306.3 606.7 311.4 601.9 315.7C597.2 320.1 593.2 323.6 587.7 327.6C582.2 331.5 575.1 335.9 568.8 339.4C562.5 343.0 556.1 345.7 549.8 348.9C543.5 352.0 537.2 355.6 530.9 358.4C524.6 361.1 518.3 363.5 511.9 365.5C505.6 367.4 498.5 369.8 493.0 370.2C487.5 370.6 484.3 369.8 478.8 367.8C473.3 365.9 467.0 360.7 459.9 358.4C452.8 356.0 443.3 355.2 436.2 353.6C429.1 352.0 423.6 350.9 417.2 348.9C410.9 346.9 404.6 343.8 398.3 341.8C392.0 339.8 385.7 338.6 379.4 337.0C373.0 335.5 366.7 333.5 360.4 332.3C354.1 331.1 347.8 331.1 341.5 329.9C335.2 328.8 328.8 327.2 322.5 325.2C316.2 323.2 309.9 320.1 303.6 318.1C297.3 316.1 291.0 314.6 284.7 313.4C278.3 312.2 272.0 311.4 265.7 311.0C259.4 310.6 253.9 310.6 246.8 311.0C239.7 311.4 231.0 312.7 223.1 313.4C215.2 314.0 207.3 314.4 199.4 314.8C191.5 315.2 183.6 315.4 175.7 315.7C167.8 316.1 160.0 316.3 152.1 316.7C144.2 317.1 136.3 317.9 128.4 318.1C120.5 318.3 112.6 318.5 104.7 318.1C96.8 317.7 88.9 316.5 81.0 315.7C73.1 314.9 64.5 314.2 57.4 313.4C50.3 312.6 43.1 312.6 38.4 311.0C33.7 309.4 29.7 307.1 28.9 303.9C28.2 300.7 31.7 296.0 33.7 292.1C35.6 288.1 38.4 284.6 40.8 280.2C43.1 275.9 45.1 270.8 47.9 266.0C50.6 261.3 53.4 256.2 57.4 251.8C61.3 247.5 66.8 243.9 71.6 240.0C76.3 236.0 82.5 232.1 85.8 228.1C89.1 224.2 90.3 220.6 91.4 216.3C92.6 212.0 93.4 206.4 92.9 202.1C92.3 197.7 89.7 193.8 88.1 190.3C86.6 186.7 82.6 182.8 83.4 180.8Z" fill="#3c5531"/></g>
<g clip-path="url(#c-mol)">
<ellipse cx="90.5" cy="273.1" rx="61.6" ry="42.6" fill="#605935" opacity="0.85" filter="url(#b6)"/>
<ellipse cx="71.6" cy="277.8" rx="23.7" ry="42.6" transform="rotate(25 71.6 277.8)" fill="#765b33" opacity="0.7" filter="url(#b6)"/>
<ellipse cx="152.0" cy="244.7" rx="56.8" ry="28.4" fill="#3f5e30" opacity="0.7" filter="url(#b6)"/>
<ellipse cx="81.0" cy="300.6" rx="18.9" ry="5.7" transform="rotate(-5 81.0 300.6)" fill="#894d2b" opacity="0.8" filter="url(#b3)"/>
<ellipse cx="111.8" cy="292.0" rx="14.2" ry="4.7" transform="rotate(10 111.8 292.0)" fill="#835231" opacity="0.6" filter="url(#b3)"/>
<ellipse cx="95.2" cy="244.7" rx="11.8" ry="8.5" fill="#765230" opacity="0.6" filter="url(#b3)"/>
<ellipse cx="182.8" cy="293.5" rx="71.0" ry="19.9" transform="rotate(-3 182.8 293.5)" fill="#62584d" opacity="0.95" filter="url(#b3)"/>
<ellipse cx="232.5" cy="244.7" rx="80.5" ry="26.0" transform="rotate(5 232.5 244.7)" fill="#3a6031" opacity="0.8" filter="url(#b6)"/>
<ellipse cx="256.2" cy="270.7" rx="18.0" ry="6.6" transform="rotate(10 256.2 270.7)" fill="#894f30" opacity="0.8" filter="url(#b3)"/>
<ellipse cx="225.4" cy="261.3" rx="9.5" ry="4.7" fill="#845230" opacity="0.6" filter="url(#b3)"/>
<ellipse cx="313.0" cy="273.1" rx="42.6" ry="33.1" fill="#425e31" opacity="0.7" filter="url(#b6)"/>
<ellipse cx="488.2" cy="287.3" rx="142.0" ry="54.5" transform="rotate(-5 488.2 287.3)" fill="#203623" opacity="0.95" filter="url(#b12)"/>
<ellipse cx="488.2" cy="256.5" rx="61.6" ry="21.3" fill="#0c1411" opacity="0.85" filter="url(#b6)"/>
<ellipse cx="412.5" cy="244.7" rx="33.1" ry="11.8" transform="rotate(10 412.5 244.7)" fill="#18291d" opacity="0.8" filter="url(#b6)"/>
<ellipse cx="483.5" cy="344.1" rx="123.1" ry="18.0" transform="rotate(-12 483.5 344.1)" fill="#576037" opacity="0.85" filter="url(#b6)"/>
<ellipse cx="403.0" cy="313.4" rx="61.6" ry="18.9" transform="rotate(10 403.0 313.4)" fill="#595b37" opacity="0.85" filter="url(#b6)"/>
<ellipse cx="620.8" cy="268.4" rx="21.3" ry="26.0" fill="#4f6237" opacity="0.85" filter="url(#b6)"/>
<ellipse cx="384.1" cy="202.1" rx="10.4" ry="13.3" fill="#34502e" opacity="0.9" filter="url(#b3)"/>
<ellipse cx="463.1" cy="302.5" rx="2.8" ry="1.9" fill="#e8e8e8" opacity="0.9" filter="url(#b1)"/>
<ellipse cx="484.4" cy="305.3" rx="3.3" ry="1.9" fill="#e0e0e0" opacity="0.9" filter="url(#b1)"/>
<path d="M83.4 180.8C84.2 178.8 89.3 177.9 92.9 178.4C96.4 179.0 100.0 182.9 104.7 184.1C109.4 185.3 116.4 185.8 121.3 185.5C126.2 185.2 130.1 181.8 134.1 182.2C138.0 182.6 142.0 185.4 145.0 187.9C148.0 190.4 147.7 195.1 152.1 197.4C156.4 199.6 163.1 200.0 171.0 201.1C178.9 202.3 190.7 203.5 199.4 204.5C208.1 205.4 213.6 205.8 223.1 206.8C232.6 207.9 246.0 209.0 256.2 210.6C266.5 212.2 275.2 215.0 284.7 216.3C294.1 217.6 303.6 217.7 313.1 218.7C322.5 219.6 333.2 221.6 341.5 222.0C349.8 222.4 358.7 223.6 362.8 221.0C366.9 218.5 364.9 211.2 366.1 206.8C367.3 202.5 368.1 198.0 369.9 195.0C371.7 192.0 374.2 190.0 377.0 188.8C379.8 187.6 383.3 186.9 386.5 187.9C389.6 188.9 393.6 191.8 395.9 195.0C398.3 198.1 399.1 202.5 400.7 206.8C402.2 211.2 403.4 217.5 405.4 221.0C407.4 224.6 407.4 225.9 412.5 228.1C417.6 230.3 428.3 232.7 436.2 234.3C444.1 235.9 452.0 236.7 459.9 237.6C467.8 238.6 475.6 239.6 483.5 240.0C491.4 240.4 499.3 240.8 507.2 240.0C515.1 239.2 523.0 236.7 530.9 235.2C538.8 233.8 546.7 232.4 554.6 231.4C562.5 230.5 570.4 230.1 578.2 229.6C586.1 229.0 594.4 228.0 601.9 228.1C609.4 228.3 618.5 228.5 623.2 230.5C628.0 232.5 626.8 237.8 630.3 240.0C633.9 242.2 640.8 242.6 644.5 243.8C648.2 244.9 651.8 244.9 652.6 247.1C653.4 249.2 651.0 252.6 649.3 256.5C647.5 260.5 645.3 265.6 642.2 270.8C639.0 275.9 634.7 282.2 630.3 287.3C626.0 292.5 620.9 296.8 616.1 301.5C611.4 306.3 606.7 311.4 601.9 315.7C597.2 320.1 593.2 323.6 587.7 327.6C582.2 331.5 575.1 335.9 568.8 339.4C562.5 343.0 556.1 345.7 549.8 348.9C543.5 352.0 537.2 355.6 530.9 358.4C524.6 361.1 518.3 363.5 511.9 365.5C505.6 367.4 498.5 369.8 493.0 370.2C487.5 370.6 484.3 369.8 478.8 367.8C473.3 365.9 467.0 360.7 459.9 358.4C452.8 356.0 443.3 355.2 436.2 353.6C429.1 352.0 423.6 350.9 417.2 348.9C410.9 346.9 404.6 343.8 398.3 341.8C392.0 339.8 385.7 338.6 379.4 337.0C373.0 335.5 366.7 333.5 360.4 332.3C354.1 331.1 347.8 331.1 341.5 329.9C335.2 328.8 328.8 327.2 322.5 325.2C316.2 323.2 309.9 320.1 303.6 318.1C297.3 316.1 291.0 314.6 284.7 313.4C278.3 312.2 272.0 311.4 265.7 311.0C259.4 310.6 253.9 310.6 246.8 311.0C239.7 311.4 231.0 312.7 223.1 313.4C215.2 314.0 207.3 314.4 199.4 314.8C191.5 315.2 183.6 315.4 175.7 315.7C167.8 316.1 160.0 316.3 152.1 316.7C144.2 317.1 136.3 317.9 128.4 318.1C120.5 318.3 112.6 318.5 104.7 318.1C96.8 317.7 88.9 316.5 81.0 315.7C73.1 314.9 64.5 314.2 57.4 313.4C50.3 312.6 43.1 312.6 38.4 311.0C33.7 309.4 29.7 307.1 28.9 303.9C28.2 300.7 31.7 296.0 33.7 292.1C35.6 288.1 38.4 284.6 40.8 280.2C43.1 275.9 45.1 270.8 47.9 266.0C50.6 261.3 53.4 256.2 57.4 251.8C61.3 247.5 66.8 243.9 71.6 240.0C76.3 236.0 82.5 232.1 85.8 228.1C89.1 224.2 90.3 220.6 91.4 216.3C92.6 212.0 93.4 206.4 92.9 202.1C92.3 197.7 89.7 193.8 88.1 190.3C86.6 186.7 82.6 182.8 83.4 180.8Z" fill="#05100a" filter="url(#tex)" opacity=".45"/>
<path d="M83.4 180.8C84.2 178.8 89.3 177.9 92.9 178.4C96.4 179.0 100.0 182.9 104.7 184.1C109.4 185.3 116.4 185.8 121.3 185.5C126.2 185.2 130.1 181.8 134.1 182.2C138.0 182.6 142.0 185.4 145.0 187.9C148.0 190.4 147.7 195.1 152.1 197.4C156.4 199.6 163.1 200.0 171.0 201.1C178.9 202.3 190.7 203.5 199.4 204.5C208.1 205.4 213.6 205.8 223.1 206.8C232.6 207.9 246.0 209.0 256.2 210.6C266.5 212.2 275.2 215.0 284.7 216.3C294.1 217.6 303.6 217.7 313.1 218.7C322.5 219.6 333.2 221.6 341.5 222.0C349.8 222.4 358.7 223.6 362.8 221.0C366.9 218.5 364.9 211.2 366.1 206.8C367.3 202.5 368.1 198.0 369.9 195.0C371.7 192.0 374.2 190.0 377.0 188.8C379.8 187.6 383.3 186.9 386.5 187.9C389.6 188.9 393.6 191.8 395.9 195.0C398.3 198.1 399.1 202.5 400.7 206.8C402.2 211.2 403.4 217.5 405.4 221.0C407.4 224.6 407.4 225.9 412.5 228.1C417.6 230.3 428.3 232.7 436.2 234.3C444.1 235.9 452.0 236.7 459.9 237.6C467.8 238.6 475.6 239.6 483.5 240.0C491.4 240.4 499.3 240.8 507.2 240.0C515.1 239.2 523.0 236.7 530.9 235.2C538.8 233.8 546.7 232.4 554.6 231.4C562.5 230.5 570.4 230.1 578.2 229.6C586.1 229.0 594.4 228.0 601.9 228.1C609.4 228.3 618.5 228.5 623.2 230.5C628.0 232.5 626.8 237.8 630.3 240.0C633.9 242.2 640.8 242.6 644.5 243.8C648.2 244.9 651.8 244.9 652.6 247.1C653.4 249.2 651.0 252.6 649.3 256.5C647.5 260.5 645.3 265.6 642.2 270.8C639.0 275.9 634.7 282.2 630.3 287.3C626.0 292.5 620.9 296.8 616.1 301.5C611.4 306.3 606.7 311.4 601.9 315.7C597.2 320.1 593.2 323.6 587.7 327.6C582.2 331.5 575.1 335.9 568.8 339.4C562.5 343.0 556.1 345.7 549.8 348.9C543.5 352.0 537.2 355.6 530.9 358.4C524.6 361.1 518.3 363.5 511.9 365.5C505.6 367.4 498.5 369.8 493.0 370.2C487.5 370.6 484.3 369.8 478.8 367.8C473.3 365.9 467.0 360.7 459.9 358.4C452.8 356.0 443.3 355.2 436.2 353.6C429.1 352.0 423.6 350.9 417.2 348.9C410.9 346.9 404.6 343.8 398.3 341.8C392.0 339.8 385.7 338.6 379.4 337.0C373.0 335.5 366.7 333.5 360.4 332.3C354.1 331.1 347.8 331.1 341.5 329.9C335.2 328.8 328.8 327.2 322.5 325.2C316.2 323.2 309.9 320.1 303.6 318.1C297.3 316.1 291.0 314.6 284.7 313.4C278.3 312.2 272.0 311.4 265.7 311.0C259.4 310.6 253.9 310.6 246.8 311.0C239.7 311.4 231.0 312.7 223.1 313.4C215.2 314.0 207.3 314.4 199.4 314.8C191.5 315.2 183.6 315.4 175.7 315.7C167.8 316.1 160.0 316.3 152.1 316.7C144.2 317.1 136.3 317.9 128.4 318.1C120.5 318.3 112.6 318.5 104.7 318.1C96.8 317.7 88.9 316.5 81.0 315.7C73.1 314.9 64.5 314.2 57.4 313.4C50.3 312.6 43.1 312.6 38.4 311.0C33.7 309.4 29.7 307.1 28.9 303.9C28.2 300.7 31.7 296.0 33.7 292.1C35.6 288.1 38.4 284.6 40.8 280.2C43.1 275.9 45.1 270.8 47.9 266.0C50.6 261.3 53.4 256.2 57.4 251.8C61.3 247.5 66.8 243.9 71.6 240.0C76.3 236.0 82.5 232.1 85.8 228.1C89.1 224.2 90.3 220.6 91.4 216.3C92.6 212.0 93.4 206.4 92.9 202.1C92.3 197.7 89.7 193.8 88.1 190.3C86.6 186.7 82.6 182.8 83.4 180.8Z" fill="#b9b27a" filter="url(#tex2)" opacity=".11"/>
<path d="M464.5 306.2L471.6 329.9L478.8 339.4" fill="none" stroke="#0a100c" stroke-width="2.5" stroke-linecap="round" stroke-linejoin="round" filter="url(#b1)"/>
<path d="M511.9 244.7L512.8 277.8" fill="none" stroke="#070b09" stroke-width="3" stroke-linecap="round" stroke-linejoin="round" filter="url(#b1)"/>
<path d="M459.8 263.6L462.2 287.3" fill="none" stroke="#070b09" stroke-width="2.5" stroke-linecap="round" stroke-linejoin="round" filter="url(#b1)"/>
<path d="M488.2 251.8L490.6 273.1" fill="none" stroke="#0a100c" stroke-width="2" stroke-linecap="round" stroke-linejoin="round" filter="url(#b1)"/>
<path d="M554.5 235.2L556.9 244.7" fill="none" stroke="#070b09" stroke-width="3" stroke-linecap="round" stroke-linejoin="round" filter="url(#b1)"/>
<path d="M166.2 205.9L208.9 207.8" fill="none" stroke="#d0d8d0" stroke-width="1" stroke-linecap="round" stroke-linejoin="round" filter="url(#b1)"/>
</g>
<g filter="url(#b07)"><path d="M288.2 516.5C288.6 513.3 289.4 508.2 291.8 504.7C294.1 501.2 298.2 498.0 302.4 495.3C306.5 492.5 311.0 490.0 316.5 488.2C322.0 486.5 329.0 485.6 335.3 484.7C341.6 483.8 347.8 483.3 354.1 483.1C360.4 482.9 366.7 483.1 372.9 483.5C379.2 483.9 385.5 484.4 391.8 485.4C398.0 486.4 404.3 488.4 410.6 489.4C416.9 490.5 423.1 490.8 429.4 491.8C435.7 492.7 442.7 493.7 448.2 495.3C453.7 496.9 458.0 498.8 462.4 501.2C466.7 503.5 470.2 506.3 474.1 509.4C478.0 512.5 482.0 516.5 485.9 520.0C489.8 523.5 493.7 526.9 497.6 530.6C501.6 534.3 505.5 538.4 509.4 542.4C513.3 546.3 517.3 550.2 521.2 554.1C525.1 558.0 529.4 562.0 532.9 565.9C536.5 569.8 539.6 573.7 542.4 577.6C545.1 581.6 547.6 585.5 549.4 589.4C551.2 593.3 552.5 596.9 552.9 601.2C553.3 605.5 552.7 610.6 551.8 615.3C550.8 620.0 549.0 625.1 547.1 629.4C545.1 633.7 542.7 637.6 540.0 641.2C537.3 644.7 534.1 647.5 530.6 650.6C527.1 653.7 523.1 657.3 518.8 660.0C514.5 662.7 509.4 664.9 504.7 667.1C500.0 669.2 495.3 671.2 490.6 672.9C485.9 674.7 480.4 676.1 476.5 677.6C472.5 679.2 470.2 681.8 467.1 682.4C463.9 682.9 461.6 681.2 457.6 681.2C453.7 681.2 449.0 682.0 443.5 682.4C438.0 682.7 431.0 683.0 424.7 683.5C418.4 684.0 411.4 684.8 405.9 685.4C400.4 686.0 395.1 687.8 391.8 687.1C388.4 686.4 388.2 683.7 385.9 681.2C383.5 678.6 380.6 675.7 377.6 671.8C374.7 667.8 371.0 662.4 368.2 657.6C365.5 652.9 362.7 648.2 361.2 643.5C359.6 638.8 358.8 634.1 358.8 629.4C358.8 624.7 360.4 620.0 361.2 615.3C362.0 610.6 363.9 605.9 363.5 601.2C363.1 596.5 360.8 591.8 358.8 587.1C356.9 582.4 354.5 577.3 351.8 572.9C349.0 568.6 345.9 564.5 342.4 561.2C338.8 557.8 334.9 555.3 330.6 552.9C326.3 550.6 320.8 548.8 316.5 547.1C312.2 545.3 308.2 544.7 304.7 542.4C301.2 540.0 297.8 536.1 295.3 532.9C292.7 529.8 290.6 526.3 289.4 523.5C288.2 520.8 287.8 519.6 288.2 516.5Z" fill="#785a43"/></g>
<g clip-path="url(#c-lan)">
<ellipse cx="410.6" cy="591.8" rx="44.7" ry="28.2" transform="rotate(25 410.6 591.8)" fill="#5b603c" opacity="0.8" filter="url(#b6)"/>
<ellipse cx="340.0" cy="528.2" rx="28.2" ry="6.6" transform="rotate(22 340.0 528.2)" fill="#4f5c34" opacity="0.85" filter="url(#b3)"/>
<ellipse cx="372.9" cy="551.8" rx="18.8" ry="3.8" transform="rotate(38 372.9 551.8)" fill="#894f2c" opacity="0.8" filter="url(#b3)"/>
<ellipse cx="462.4" cy="577.6" rx="25.9" ry="40.0" transform="rotate(-25 462.4 577.6)" fill="#313f2b" opacity="0.8" filter="url(#b6)"/>
<ellipse cx="438.8" cy="549.4" rx="14.1" ry="9.4" fill="#33462c" opacity="0.8" filter="url(#b6)"/>
<ellipse cx="514.1" cy="582.4" rx="25.9" ry="51.8" transform="rotate(-38 514.1 582.4)" fill="#73563f" opacity="0.7" filter="url(#b6)"/>
<ellipse cx="438.8" cy="662.4" rx="61.2" ry="16.5" transform="rotate(-8 438.8 662.4)" fill="#735236" opacity="0.7" filter="url(#b6)"/>
<ellipse cx="330.6" cy="507.1" rx="35.3" ry="14.1" transform="rotate(-15 330.6 507.1)" fill="#71553f" opacity="0.6" filter="url(#b6)"/>
<ellipse cx="469.4" cy="583.5" rx="4.2" ry="2.4" fill="#e0e0e0" opacity="0.8" filter="url(#b1)"/>
<ellipse cx="494.1" cy="612.9" rx="3.3" ry="3.3" fill="#e0e0e0" opacity="0.8" filter="url(#b1)"/>
<ellipse cx="429.4" cy="588.2" rx="2.4" ry="3.3" fill="#97907b" opacity="0.6" filter="url(#b1)"/>
<path d="M361.3 550.7L292.8 518.6M367.4 550.3L294.5 512.9M353.5 539.3L296.2 507.2M373.0 546.6L301.3 502.6M362.8 535.9L306.4 498.0M371.1 537.2L313.3 494.6M382.3 541.4L320.1 491.2M376.5 531.6L329.3 489.5M391.5 540.2L338.4 487.8M388.3 531.7L347.5 487.0M399.5 538.8L356.7 486.2M403.6 538.5L365.8 486.4M403.6 531.7L374.9 486.6M404.1 523.9L384.0 487.5M416.5 538.8L393.2 488.5M420.2 537.8L402.3 490.4M422.6 530.9L411.4 492.3M426.8 525.4L420.6 493.5M433.5 533.2L429.7 494.6M438.8 537.6L438.8 496.3M444.9 527.8L448.0 498.0M446.4 546.3L454.8 500.9M453.5 533.7L461.6 503.8M453.8 545.5L467.4 507.7M455.7 549.9L473.1 511.7M458.3 552.8L478.8 516.9M462.9 552.7L484.5 522.0M471.3 549.2L490.2 527.1M467.4 559.6L495.9 532.3M475.5 558.4L501.6 538.0M479.6 561.2L507.3 543.7M478.9 566.7L513.0 549.4M484.9 568.6L518.7 555.1M479.6 574.5L524.4 560.8M482.3 577.3L530.1 566.5M487.4 579.5L534.7 572.2M499.5 581.5L539.2 577.9M496.2 585.2L542.7 583.6M495.5 588.3L546.1 589.3M502.5 591.7L547.8 595.0M500.5 594.7L549.5 600.8M496.7 597.9L548.9 607.6M507.6 604.3L548.4 614.4M504.0 607.9L546.1 621.3M492.8 608.2L543.8 628.1M498.0 614.3L540.4 633.8M495.0 617.1L537.0 639.6M499.1 623.8L532.4 644.1M493.5 624.9L527.8 648.7M482.4 621.7L522.1 653.2M490.5 634.2L516.4 657.8M473.4 623.3L509.6 661.2M474.0 629.7L502.7 664.7M474.2 636.9L495.9 667.5M463.7 628.3L489.0 670.4M463.3 635.4L482.2 672.6M456.1 628.5L475.3 674.9M458.0 641.3L470.8 677.2M455.8 644.5L466.2 679.5M452.1 640.5L461.6 678.9M450.6 645.9L457.1 678.4M444.9 635.6L450.2 678.9M441.6 643.2L443.4 679.5M436.1 641.6L434.3 680.1M430.8 641.7L425.1 680.6M426.1 639.8L416.0 681.5M418.5 647.8L406.9 682.5M413.3 650.4L400.0 683.3M413.2 641.5L393.2 684.1M409.7 643.6L390.3 681.2M414.4 630.6L387.5 678.4M405.1 639.8L383.5 673.8M403.4 636.1L379.5 669.2M396.1 637.4L374.9 662.4M395.5 630.4L370.4 655.5M401.3 619.3L366.9 648.7M397.9 616.8L363.5 641.8M392.8 615.9L362.4 635.0M402.5 606.3L361.2 628.1M396.1 606.2L362.4 621.3M401.3 600.7L363.5 614.4M402.6 597.1L364.6 607.6M404.1 593.6L365.8 600.8M392.0 591.3L363.5 593.9M400.8 587.1L361.2 587.1M397.1 583.5L357.8 580.2M392.8 579.6L354.4 573.4M381.5 574.6L349.8 567.7M393.9 575.0L345.2 562.0M383.6 570.9L339.5 558.0M378.2 568.0L333.8 554.0M366.6 563.8L327.0 551.1M363.7 562.5L320.1 548.3M359.0 560.7L314.4 546.0M371.0 564.5L308.7 543.7M364.8 560.7L304.2 539.1M363.9 558.8L299.6 534.6M347.0 550.2L296.7 530.0M343.0 546.3L293.9 525.4M366.8 554.9L293.3 522.0" fill="none" stroke="#3e2c20" stroke-width="1" opacity=".24" filter="url(#b07)"/>
<path d="M288.2 516.5C288.6 513.3 289.4 508.2 291.8 504.7C294.1 501.2 298.2 498.0 302.4 495.3C306.5 492.5 311.0 490.0 316.5 488.2C322.0 486.5 329.0 485.6 335.3 484.7C341.6 483.8 347.8 483.3 354.1 483.1C360.4 482.9 366.7 483.1 372.9 483.5C379.2 483.9 385.5 484.4 391.8 485.4C398.0 486.4 404.3 488.4 410.6 489.4C416.9 490.5 423.1 490.8 429.4 491.8C435.7 492.7 442.7 493.7 448.2 495.3C453.7 496.9 458.0 498.8 462.4 501.2C466.7 503.5 470.2 506.3 474.1 509.4C478.0 512.5 482.0 516.5 485.9 520.0C489.8 523.5 493.7 526.9 497.6 530.6C501.6 534.3 505.5 538.4 509.4 542.4C513.3 546.3 517.3 550.2 521.2 554.1C525.1 558.0 529.4 562.0 532.9 565.9C536.5 569.8 539.6 573.7 542.4 577.6C545.1 581.6 547.6 585.5 549.4 589.4C551.2 593.3 552.5 596.9 552.9 601.2C553.3 605.5 552.7 610.6 551.8 615.3C550.8 620.0 549.0 625.1 547.1 629.4C545.1 633.7 542.7 637.6 540.0 641.2C537.3 644.7 534.1 647.5 530.6 650.6C527.1 653.7 523.1 657.3 518.8 660.0C514.5 662.7 509.4 664.9 504.7 667.1C500.0 669.2 495.3 671.2 490.6 672.9C485.9 674.7 480.4 676.1 476.5 677.6C472.5 679.2 470.2 681.8 467.1 682.4C463.9 682.9 461.6 681.2 457.6 681.2C453.7 681.2 449.0 682.0 443.5 682.4C438.0 682.7 431.0 683.0 424.7 683.5C418.4 684.0 411.4 684.8 405.9 685.4C400.4 686.0 395.1 687.8 391.8 687.1C388.4 686.4 388.2 683.7 385.9 681.2C383.5 678.6 380.6 675.7 377.6 671.8C374.7 667.8 371.0 662.4 368.2 657.6C365.5 652.9 362.7 648.2 361.2 643.5C359.6 638.8 358.8 634.1 358.8 629.4C358.8 624.7 360.4 620.0 361.2 615.3C362.0 610.6 363.9 605.9 363.5 601.2C363.1 596.5 360.8 591.8 358.8 587.1C356.9 582.4 354.5 577.3 351.8 572.9C349.0 568.6 345.9 564.5 342.4 561.2C338.8 557.8 334.9 555.3 330.6 552.9C326.3 550.6 320.8 548.8 316.5 547.1C312.2 545.3 308.2 544.7 304.7 542.4C301.2 540.0 297.8 536.1 295.3 532.9C292.7 529.8 290.6 526.3 289.4 523.5C288.2 520.8 287.8 519.6 288.2 516.5Z" fill="#05100a" filter="url(#tex)" opacity=".45"/>
<path d="M288.2 516.5C288.6 513.3 289.4 508.2 291.8 504.7C294.1 501.2 298.2 498.0 302.4 495.3C306.5 492.5 311.0 490.0 316.5 488.2C322.0 486.5 329.0 485.6 335.3 484.7C341.6 483.8 347.8 483.3 354.1 483.1C360.4 482.9 366.7 483.1 372.9 483.5C379.2 483.9 385.5 484.4 391.8 485.4C398.0 486.4 404.3 488.4 410.6 489.4C416.9 490.5 423.1 490.8 429.4 491.8C435.7 492.7 442.7 493.7 448.2 495.3C453.7 496.9 458.0 498.8 462.4 501.2C466.7 503.5 470.2 506.3 474.1 509.4C478.0 512.5 482.0 516.5 485.9 520.0C489.8 523.5 493.7 526.9 497.6 530.6C501.6 534.3 505.5 538.4 509.4 542.4C513.3 546.3 517.3 550.2 521.2 554.1C525.1 558.0 529.4 562.0 532.9 565.9C536.5 569.8 539.6 573.7 542.4 577.6C545.1 581.6 547.6 585.5 549.4 589.4C551.2 593.3 552.5 596.9 552.9 601.2C553.3 605.5 552.7 610.6 551.8 615.3C550.8 620.0 549.0 625.1 547.1 629.4C545.1 633.7 542.7 637.6 540.0 641.2C537.3 644.7 534.1 647.5 530.6 650.6C527.1 653.7 523.1 657.3 518.8 660.0C514.5 662.7 509.4 664.9 504.7 667.1C500.0 669.2 495.3 671.2 490.6 672.9C485.9 674.7 480.4 676.1 476.5 677.6C472.5 679.2 470.2 681.8 467.1 682.4C463.9 682.9 461.6 681.2 457.6 681.2C453.7 681.2 449.0 682.0 443.5 682.4C438.0 682.7 431.0 683.0 424.7 683.5C418.4 684.0 411.4 684.8 405.9 685.4C400.4 686.0 395.1 687.8 391.8 687.1C388.4 686.4 388.2 683.7 385.9 681.2C383.5 678.6 380.6 675.7 377.6 671.8C374.7 667.8 371.0 662.4 368.2 657.6C365.5 652.9 362.7 648.2 361.2 643.5C359.6 638.8 358.8 634.1 358.8 629.4C358.8 624.7 360.4 620.0 361.2 615.3C362.0 610.6 363.9 605.9 363.5 601.2C363.1 596.5 360.8 591.8 358.8 587.1C356.9 582.4 354.5 577.3 351.8 572.9C349.0 568.6 345.9 564.5 342.4 561.2C338.8 557.8 334.9 555.3 330.6 552.9C326.3 550.6 320.8 548.8 316.5 547.1C312.2 545.3 308.2 544.7 304.7 542.4C301.2 540.0 297.8 536.1 295.3 532.9C292.7 529.8 290.6 526.3 289.4 523.5C288.2 520.8 287.8 519.6 288.2 516.5Z" fill="#b9b27a" filter="url(#tex2)" opacity=".11"/>
<path d="M469.4 516.5L462.4 537.6L448.2 556.5" fill="none" stroke="#3a3024" stroke-width="1.5" stroke-linecap="round" stroke-linejoin="round" filter="url(#b1)"/>
<path d="M483.5 565.9L476.5 582.4" fill="none" stroke="#14140e" stroke-width="2" stroke-linecap="round" stroke-linejoin="round" filter="url(#b1)"/>
<path d="M495.3 605.9L525.9 608.2" fill="none" stroke="#2a2218" stroke-width="1.2" stroke-linecap="round" stroke-linejoin="round" filter="url(#b1)"/>
<path d="M492.9 601.2L525.9 587.1" fill="none" stroke="#3a2e22" stroke-width="1.2" stroke-linecap="round" stroke-linejoin="round" filter="url(#b1)"/>
<path d="M490.6 596.5L518.8 570.6" fill="none" stroke="#3a2e22" stroke-width="1.2" stroke-linecap="round" stroke-linejoin="round" filter="url(#b1)"/>
<path d="M485.9 591.8L504.7 558.8" fill="none" stroke="#3a2e22" stroke-width="1.2" stroke-linecap="round" stroke-linejoin="round" filter="url(#b1)"/>
<path d="M495.3 612.9L518.8 624.7" fill="none" stroke="#3a2e22" stroke-width="1.2" stroke-linecap="round" stroke-linejoin="round" filter="url(#b1)"/>
</g>
<g filter="url(#b07)"><path d="M663.0 898.1C663.5 896.0 665.5 892.9 667.6 890.4C669.6 887.8 672.4 885.5 675.2 882.7C678.0 879.9 681.4 875.7 684.4 873.5C687.5 871.4 690.3 870.9 693.6 869.7C696.9 868.6 700.5 867.8 704.3 866.6C708.2 865.5 713.0 864.5 716.6 862.8C720.2 861.2 722.7 859.0 725.8 856.7C728.9 854.4 731.7 851.3 735.0 849.0C738.3 846.7 742.1 845.2 745.7 842.9C749.3 840.6 752.9 837.5 756.4 835.2C760.0 832.9 763.6 830.9 767.2 829.1C770.7 827.3 774.3 825.8 777.9 824.5C781.5 823.2 785.0 821.8 788.6 821.4C792.2 821.1 796.0 821.4 799.3 822.2C802.7 823.0 805.5 824.1 808.5 826.0C811.6 828.0 815.2 830.9 817.7 833.7C820.3 836.5 821.8 839.8 823.8 842.9C825.9 846.0 829.2 849.5 830.0 852.1C830.7 854.6 830.0 856.7 828.4 858.2C826.9 859.7 822.6 859.5 820.8 861.3C819.0 863.1 818.5 866.4 817.7 868.9C816.9 871.5 816.9 874.0 816.2 876.6C815.4 879.2 813.4 882.0 813.1 884.3C812.9 886.6 812.9 888.9 814.7 890.4C816.4 891.9 820.5 892.9 823.8 893.5C827.2 894.0 832.4 892.4 834.6 893.5C836.7 894.5 837.6 897.5 836.9 899.6C836.1 901.6 831.6 903.4 830.0 905.7C828.3 908.0 828.2 911.8 826.9 913.4C825.6 914.9 824.1 915.7 822.3 914.9C820.5 914.1 818.5 910.3 816.2 908.8C813.9 907.2 811.3 905.2 808.5 905.7C805.7 906.2 802.4 910.1 799.3 911.8C796.3 913.6 792.9 915.2 790.1 916.4C787.3 917.7 784.8 920.0 782.5 919.5C780.2 919.0 778.4 915.7 776.4 913.4C774.3 911.1 772.0 907.2 770.2 905.7C768.4 904.2 767.2 903.2 765.6 904.2C764.1 905.2 763.1 910.3 761.0 911.8C759.0 913.4 756.2 912.6 753.4 913.4C750.6 914.1 747.2 915.2 744.2 916.4C741.1 917.7 738.1 920.0 735.0 921.0C731.9 922.1 728.3 923.1 725.8 922.6C723.2 922.1 721.2 919.5 719.7 918.0C718.1 916.4 718.1 912.9 716.6 913.4C715.1 913.9 713.0 919.0 710.5 921.0C707.9 923.1 704.3 924.9 701.3 925.6C698.2 926.4 695.2 926.1 692.1 925.6C689.0 925.1 685.2 924.6 682.9 922.6C680.6 920.5 680.6 915.9 678.3 913.4C676.0 910.8 671.4 909.0 669.1 907.2C666.8 905.5 665.5 904.2 664.5 902.6C663.5 901.1 662.5 900.1 663.0 898.1Z" fill="#6a6339"/></g>
<g clip-path="url(#c-kah)">
<ellipse cx="747.2" cy="861.3" rx="33.7" ry="12.3" transform="rotate(-32 747.2 861.3)" fill="#576035" opacity="0.8" filter="url(#b3)"/>
<ellipse cx="793.2" cy="884.3" rx="23.0" ry="23.0" transform="rotate(10 793.2 884.3)" fill="#935b31" opacity="0.85" filter="url(#b3)"/>
<ellipse cx="739.6" cy="890.4" rx="24.5" ry="6.1" transform="rotate(-15 739.6 890.4)" fill="#8b5b33" opacity="0.75" filter="url(#b3)"/>
<ellipse cx="767.2" cy="865.9" rx="13.8" ry="2.8" transform="rotate(-5 767.2 865.9)" fill="#8b5b33" opacity="0.7" filter="url(#b3)"/>
<ellipse cx="673.7" cy="901.1" rx="7.7" ry="10.7" fill="#846238" opacity="0.7" filter="url(#b3)"/>
<ellipse cx="793.2" cy="846.0" rx="18.4" ry="13.8" fill="#68633a" opacity="0.6" filter="url(#b3)"/>
<ellipse cx="825.4" cy="902.6" rx="7.7" ry="7.7" fill="#76673d" opacity="0.7" filter="url(#b3)"/>
<path d="M739.4 875.6L668.7 896.4M738.9 874.7L670.9 892.7M739.6 873.4L673.1 889.1M735.6 873.2L676.7 885.4M735.0 872.0L680.4 881.8M743.3 869.2L684.7 877.4M749.8 867.1L689.1 873.1M743.8 867.1L693.5 871.3M746.4 866.4L697.8 869.4M745.3 865.9L702.9 868.0M741.8 865.5L708.0 866.5M748.4 864.5L713.8 864.7M753.2 863.7L719.7 862.9M753.9 862.4L724.0 860.0M755.2 861.0L728.4 857.1M763.1 860.8L732.8 853.4M757.3 857.0L737.1 849.8M760.8 856.0L742.2 846.9M762.6 854.2L747.3 844.0M765.6 852.7L752.4 840.3M769.8 853.3L757.5 836.7M771.8 852.1L762.6 833.8M774.4 853.0L767.7 830.9M775.6 848.3L772.8 828.7M777.9 851.9L777.9 826.5M779.6 851.4L783.0 825.0M781.5 849.7L788.1 823.6M783.2 850.2L793.2 824.0M785.8 848.8L798.3 824.3M786.0 851.9L802.6 826.1M787.1 852.9L807.0 828.0M789.5 853.0L811.4 831.6M790.6 854.5L815.7 835.2M793.9 854.6L818.6 839.6M791.9 857.8L821.5 844.0M801.2 856.3L824.5 848.3M799.9 859.2L827.4 852.7M794.8 861.3L826.6 855.6M795.6 862.2L825.9 858.5M795.1 862.6L822.3 860.0M793.9 863.2L818.6 861.4M791.3 864.6L817.2 865.1M796.6 866.5L815.7 868.7M797.4 868.5L815.0 872.4M792.9 869.2L814.3 876.0M792.5 870.7L812.8 879.6M789.1 870.7L811.4 883.3M789.4 871.7L812.1 886.2M791.4 873.9L812.8 889.1M792.5 874.1L817.2 890.5M799.3 877.9L821.5 892.0M794.9 874.0L826.6 892.0M795.2 873.2L831.7 892.0M806.2 880.1L832.8 894.9M801.8 878.6L833.9 897.8M796.2 877.0L830.6 900.7M799.2 881.2L827.4 903.6M793.3 878.1L825.9 907.3M797.8 884.2L824.5 910.9M801.0 889.0L822.3 911.6M798.9 888.2L820.1 912.4M796.1 885.2L817.2 909.5M791.4 880.0L814.3 906.6M790.8 880.4L810.6 905.1M788.1 878.1L807.0 903.6M789.7 884.5L802.6 906.6M786.6 883.7L798.3 909.5M785.6 887.0L793.9 911.6M782.4 883.4L789.5 913.8M780.8 882.8L785.9 915.3M780.0 889.8L782.2 916.7M778.6 890.2L779.3 913.8M777.2 887.4L776.4 910.9M775.8 885.2L773.5 907.3M774.3 883.5L770.6 903.6M773.4 882.5L768.4 902.9M773.7 878.1L766.2 902.2M772.0 882.0L764.1 905.8M771.6 882.0L761.9 909.5M771.6 879.1L758.2 910.2M770.4 879.3L754.6 910.9M767.5 882.3L750.2 912.4M766.0 882.7L745.9 913.8M761.1 888.2L741.5 916.0M756.8 892.2L737.1 918.2M759.4 886.7L732.8 918.9M752.5 892.7L728.4 919.7M750.4 892.2L725.5 917.5M749.3 890.7L722.6 915.3M755.6 883.5L721.1 913.1M756.8 881.2L719.7 910.9M755.7 882.6L716.8 914.6M755.0 883.6L713.8 918.2M753.3 884.5L709.5 920.4M745.3 890.4L705.1 922.6M738.9 893.8L700.7 922.6M737.7 893.0L696.4 922.6M742.1 888.0L692.0 921.1M737.0 889.4L687.6 919.7M733.1 889.0L685.5 915.3M746.3 879.9L683.3 910.9M732.9 884.2L678.9 908.0M725.5 885.0L674.5 905.1M727.2 882.9L672.4 902.9M726.9 881.6L670.2 900.7M732.7 878.6L669.5 898.5" fill="none" stroke="#4a4226" stroke-width=".9" opacity=".25" filter="url(#b07)"/>
<path d="M663.0 898.1C663.5 896.0 665.5 892.9 667.6 890.4C669.6 887.8 672.4 885.5 675.2 882.7C678.0 879.9 681.4 875.7 684.4 873.5C687.5 871.4 690.3 870.9 693.6 869.7C696.9 868.6 700.5 867.8 704.3 866.6C708.2 865.5 713.0 864.5 716.6 862.8C720.2 861.2 722.7 859.0 725.8 856.7C728.9 854.4 731.7 851.3 735.0 849.0C738.3 846.7 742.1 845.2 745.7 842.9C749.3 840.6 752.9 837.5 756.4 835.2C760.0 832.9 763.6 830.9 767.2 829.1C770.7 827.3 774.3 825.8 777.9 824.5C781.5 823.2 785.0 821.8 788.6 821.4C792.2 821.1 796.0 821.4 799.3 822.2C802.7 823.0 805.5 824.1 808.5 826.0C811.6 828.0 815.2 830.9 817.7 833.7C820.3 836.5 821.8 839.8 823.8 842.9C825.9 846.0 829.2 849.5 830.0 852.1C830.7 854.6 830.0 856.7 828.4 858.2C826.9 859.7 822.6 859.5 820.8 861.3C819.0 863.1 818.5 866.4 817.7 868.9C816.9 871.5 816.9 874.0 816.2 876.6C815.4 879.2 813.4 882.0 813.1 884.3C812.9 886.6 812.9 888.9 814.7 890.4C816.4 891.9 820.5 892.9 823.8 893.5C827.2 894.0 832.4 892.4 834.6 893.5C836.7 894.5 837.6 897.5 836.9 899.6C836.1 901.6 831.6 903.4 830.0 905.7C828.3 908.0 828.2 911.8 826.9 913.4C825.6 914.9 824.1 915.7 822.3 914.9C820.5 914.1 818.5 910.3 816.2 908.8C813.9 907.2 811.3 905.2 808.5 905.7C805.7 906.2 802.4 910.1 799.3 911.8C796.3 913.6 792.9 915.2 790.1 916.4C787.3 917.7 784.8 920.0 782.5 919.5C780.2 919.0 778.4 915.7 776.4 913.4C774.3 911.1 772.0 907.2 770.2 905.7C768.4 904.2 767.2 903.2 765.6 904.2C764.1 905.2 763.1 910.3 761.0 911.8C759.0 913.4 756.2 912.6 753.4 913.4C750.6 914.1 747.2 915.2 744.2 916.4C741.1 917.7 738.1 920.0 735.0 921.0C731.9 922.1 728.3 923.1 725.8 922.6C723.2 922.1 721.2 919.5 719.7 918.0C718.1 916.4 718.1 912.9 716.6 913.4C715.1 913.9 713.0 919.0 710.5 921.0C707.9 923.1 704.3 924.9 701.3 925.6C698.2 926.4 695.2 926.1 692.1 925.6C689.0 925.1 685.2 924.6 682.9 922.6C680.6 920.5 680.6 915.9 678.3 913.4C676.0 910.8 671.4 909.0 669.1 907.2C666.8 905.5 665.5 904.2 664.5 902.6C663.5 901.1 662.5 900.1 663.0 898.1Z" fill="#05100a" filter="url(#tex)" opacity=".45"/>
<path d="M663.0 898.1C663.5 896.0 665.5 892.9 667.6 890.4C669.6 887.8 672.4 885.5 675.2 882.7C678.0 879.9 681.4 875.7 684.4 873.5C687.5 871.4 690.3 870.9 693.6 869.7C696.9 868.6 700.5 867.8 704.3 866.6C708.2 865.5 713.0 864.5 716.6 862.8C720.2 861.2 722.7 859.0 725.8 856.7C728.9 854.4 731.7 851.3 735.0 849.0C738.3 846.7 742.1 845.2 745.7 842.9C749.3 840.6 752.9 837.5 756.4 835.2C760.0 832.9 763.6 830.9 767.2 829.1C770.7 827.3 774.3 825.8 777.9 824.5C781.5 823.2 785.0 821.8 788.6 821.4C792.2 821.1 796.0 821.4 799.3 822.2C802.7 823.0 805.5 824.1 808.5 826.0C811.6 828.0 815.2 830.9 817.7 833.7C820.3 836.5 821.8 839.8 823.8 842.9C825.9 846.0 829.2 849.5 830.0 852.1C830.7 854.6 830.0 856.7 828.4 858.2C826.9 859.7 822.6 859.5 820.8 861.3C819.0 863.1 818.5 866.4 817.7 868.9C816.9 871.5 816.9 874.0 816.2 876.6C815.4 879.2 813.4 882.0 813.1 884.3C812.9 886.6 812.9 888.9 814.7 890.4C816.4 891.9 820.5 892.9 823.8 893.5C827.2 894.0 832.4 892.4 834.6 893.5C836.7 894.5 837.6 897.5 836.9 899.6C836.1 901.6 831.6 903.4 830.0 905.7C828.3 908.0 828.2 911.8 826.9 913.4C825.6 914.9 824.1 915.7 822.3 914.9C820.5 914.1 818.5 910.3 816.2 908.8C813.9 907.2 811.3 905.2 808.5 905.7C805.7 906.2 802.4 910.1 799.3 911.8C796.3 913.6 792.9 915.2 790.1 916.4C787.3 917.7 784.8 920.0 782.5 919.5C780.2 919.0 778.4 915.7 776.4 913.4C774.3 911.1 772.0 907.2 770.2 905.7C768.4 904.2 767.2 903.2 765.6 904.2C764.1 905.2 763.1 910.3 761.0 911.8C759.0 913.4 756.2 912.6 753.4 913.4C750.6 914.1 747.2 915.2 744.2 916.4C741.1 917.7 738.1 920.0 735.0 921.0C731.9 922.1 728.3 923.1 725.8 922.6C723.2 922.1 721.2 919.5 719.7 918.0C718.1 916.4 718.1 912.9 716.6 913.4C715.1 913.9 713.0 919.0 710.5 921.0C707.9 923.1 704.3 924.9 701.3 925.6C698.2 926.4 695.2 926.1 692.1 925.6C689.0 925.1 685.2 924.6 682.9 922.6C680.6 920.5 680.6 915.9 678.3 913.4C676.0 910.8 671.4 909.0 669.1 907.2C666.8 905.5 665.5 904.2 664.5 902.6C663.5 901.1 662.5 900.1 663.0 898.1Z" fill="#b9b27a" filter="url(#tex2)" opacity=".11"/>
<path d="M735.0 858.2L756.4 867.4" fill="none" stroke="#4a4428" stroke-width="1" stroke-linecap="round" stroke-linejoin="round" filter="url(#b1)"/>
<path d="M819.2 861.3L814.7 879.7" fill="none" stroke="#14140e" stroke-width="1.2" stroke-linecap="round" stroke-linejoin="round" filter="url(#b1)"/>
<path d="M765.6 905.7L761.0 911.8" fill="none" stroke="#14140e" stroke-width="1.2" stroke-linecap="round" stroke-linejoin="round" filter="url(#b1)"/>
</g>
<g filter="url(#b07)"><path d="M885.9 511.2C887.1 511.0 896.7 517.7 903.1 517.7C909.6 517.7 917.5 514.1 924.7 511.2C931.9 508.3 939.1 503.3 946.3 500.4C953.5 497.5 960.7 496.5 967.9 493.9C975.1 491.4 982.3 488.2 989.4 485.3C996.6 482.4 1003.8 478.8 1011.0 476.7C1018.2 474.5 1026.1 474.0 1032.6 472.4C1039.1 470.7 1042.7 467.3 1049.9 466.8C1057.0 466.2 1067.8 469.1 1075.7 469.3C1083.7 469.6 1090.1 467.2 1097.3 468.0C1104.5 468.9 1112.1 472.9 1118.9 474.5C1125.7 476.2 1132.0 475.8 1138.3 478.0C1144.6 480.1 1151.3 483.6 1156.9 487.5C1162.4 491.3 1166.2 496.8 1171.5 501.3C1176.9 505.7 1183.2 509.5 1188.8 514.2C1194.4 519.0 1199.9 524.7 1205.2 529.8C1210.5 534.8 1216.3 540.5 1220.7 544.4C1225.2 548.3 1228.8 551.9 1231.9 553.1C1235.1 554.2 1236.3 550.4 1239.7 551.3C1243.2 552.3 1249.8 554.9 1252.7 558.7C1255.5 562.4 1254.1 569.1 1257.0 573.8C1259.8 578.4 1264.9 583.8 1269.9 586.7C1275.0 589.6 1282.1 590.7 1287.2 591.0C1292.2 591.4 1295.1 587.4 1300.1 588.9C1305.2 590.3 1311.6 596.4 1317.4 599.7C1323.1 602.9 1328.2 606.1 1334.6 608.3C1341.1 610.4 1349.0 610.4 1356.2 612.6C1363.4 614.8 1371.3 617.6 1377.8 621.2C1384.3 624.8 1390.4 629.1 1395.0 634.2C1399.7 639.2 1403.7 645.7 1405.8 651.4C1408.0 657.2 1408.0 662.9 1408.0 668.7C1408.0 674.4 1407.3 680.2 1405.8 686.0C1404.4 691.7 1402.2 697.5 1399.4 703.2C1396.5 709.0 1392.9 714.7 1388.6 720.5C1384.3 726.2 1378.9 732.0 1373.5 737.7C1368.1 743.5 1362.0 749.6 1356.2 755.0C1350.5 760.4 1345.4 766.9 1339.0 770.1C1332.5 773.3 1324.6 772.6 1317.4 774.4C1310.2 776.2 1303.0 778.4 1295.8 780.9C1288.6 783.4 1281.4 786.3 1274.2 789.5C1267.0 792.7 1259.8 798.9 1252.7 800.3C1245.5 801.7 1239.0 798.5 1231.1 798.1C1223.2 797.8 1213.1 798.1 1205.2 798.1C1197.3 798.1 1190.8 796.7 1183.6 798.1C1176.4 799.6 1169.2 803.5 1162.0 806.8C1154.9 810.0 1147.7 814.0 1140.5 817.6C1133.3 821.2 1126.1 825.1 1118.9 828.3C1111.7 831.6 1104.5 834.8 1097.3 837.0C1090.1 839.1 1082.9 840.2 1075.7 841.3C1068.6 842.4 1061.4 843.1 1054.2 843.4C1047.0 843.8 1039.8 843.1 1032.6 843.4C1025.4 843.8 1018.2 844.9 1011.0 845.6C1003.8 846.3 996.6 848.1 989.4 847.8C982.3 847.4 973.6 846.0 967.9 843.4C962.1 840.9 960.0 836.6 954.9 832.7C949.9 828.7 942.0 824.7 937.7 819.7C933.4 814.7 931.9 807.5 929.0 802.5C926.2 797.4 920.8 795.3 920.4 789.5C920.0 783.8 925.4 775.8 926.9 767.9C928.3 760.0 929.4 750.7 929.0 742.0C928.7 733.4 926.9 724.8 924.7 716.2C922.6 707.5 918.6 698.9 916.1 690.3C913.6 681.6 911.1 672.3 909.6 664.4C908.2 656.5 910.0 648.9 907.5 642.8C904.9 636.7 894.7 627.8 894.5 627.7C894.3 627.6 905.5 641.9 906.2 642.4C906.9 642.8 902.0 633.8 898.8 630.6C895.6 627.4 891.0 625.0 887.1 623.2C883.1 621.5 879.2 620.3 875.3 620.3C871.4 620.3 867.5 621.0 863.5 623.2C859.6 625.4 855.2 630.6 851.8 633.5C848.3 636.5 845.9 639.4 842.9 640.9C840.0 642.4 837.5 643.3 834.1 642.4C830.7 641.4 826.3 637.2 822.4 635.0C818.4 632.8 814.5 630.8 810.6 629.1C806.7 627.4 803.2 625.9 798.8 624.7C794.4 623.5 789.0 623.2 784.1 621.8C779.2 620.3 774.3 617.8 769.4 615.9C764.5 613.9 759.6 612.0 754.7 610.0C749.8 608.0 743.9 607.1 740.0 604.1C736.1 601.2 734.6 596.3 731.2 592.4C727.7 588.4 723.3 584.5 719.4 580.6C715.5 576.7 711.6 573.0 707.6 568.8C703.7 564.7 699.8 560.0 695.9 555.6C692.0 551.2 687.3 546.0 684.1 542.4C680.9 538.7 677.7 537.0 676.8 533.5C675.8 530.1 678.5 525.7 678.2 521.8C678.0 517.8 677.0 513.9 675.3 510.0C673.6 506.1 669.4 501.7 667.9 498.2C666.5 494.8 666.2 492.8 666.5 489.4C666.7 486.0 668.7 482.1 669.4 477.6C670.1 473.2 669.7 467.8 670.9 462.9C672.1 458.0 675.0 453.1 676.8 448.2C678.5 443.3 679.2 438.4 681.2 433.5C683.1 428.6 686.1 423.2 688.5 418.8C691.0 414.4 692.7 410.0 695.9 407.1C699.1 404.1 703.7 403.6 707.6 401.2C711.6 398.7 716.5 395.3 719.4 392.4C722.4 389.4 721.9 384.8 725.3 383.5C728.7 382.3 735.1 385.2 740.0 385.0C744.9 384.8 751.0 383.3 754.7 382.1C758.4 380.8 759.4 378.1 762.1 377.6C764.8 377.2 768.2 378.4 770.9 379.1C773.6 379.9 776.0 380.3 778.2 382.1C780.4 383.8 781.2 387.5 784.1 389.4C787.1 391.4 792.0 392.4 795.9 393.8C799.8 395.3 804.2 395.8 807.6 398.2C811.1 400.7 813.5 406.3 816.5 408.5C819.4 410.7 822.4 409.0 825.3 411.5C828.2 413.9 831.2 420.5 834.1 423.2C837.1 425.9 841.0 424.5 842.9 427.6C844.9 430.8 843.9 437.5 845.9 442.4C847.8 447.3 851.8 452.2 854.7 457.1C857.6 462.0 860.6 467.8 863.5 471.8C866.5 475.7 869.9 476.7 872.4 480.6C874.8 484.5 875.8 490.4 878.2 495.3C880.7 500.2 884.1 506.1 887.1 510.0C890.0 513.9 896.1 518.6 895.9 518.8C895.7 519.0 884.7 511.4 885.9 511.2Z" fill="#3c5b2f"/></g>
<g clip-path="url(#c-maui)">
<ellipse cx="772.4" cy="507.1" rx="105.9" ry="126.5" fill="#344d2b" opacity="0.55" filter="url(#b12)"/>
<ellipse cx="692.9" cy="486.5" rx="22.1" ry="44.1" transform="rotate(5 692.9 486.5)" fill="#466031" opacity="0.6" filter="url(#b6)"/>
<ellipse cx="790.0" cy="518.8" rx="66.2" ry="97.1" transform="rotate(-5 790.0 518.8)" fill="#1d2d1e" opacity="0.95" filter="url(#b12)"/>
<ellipse cx="787.1" cy="527.6" rx="47.1" ry="70.6" transform="rotate(-5 787.1 527.6)" fill="#111a13" opacity="0.85" filter="url(#b12)"/>
<ellipse cx="825.3" cy="618.8" rx="32.4" ry="17.6" fill="#57573b" opacity="0.85" filter="url(#b6)"/>
<ellipse cx="884.1" cy="524.7" rx="17.6" ry="20.6" fill="#76765c" opacity="0.55" filter="url(#b6)"/>
<ellipse cx="728.2" cy="583.5" rx="20.6" ry="11.8" transform="rotate(40 728.2 583.5)" fill="#4b5b33" opacity="0.7" filter="url(#b6)"/>
<ellipse cx="687.1" cy="533.5" rx="10.3" ry="5.9" transform="rotate(40 687.1 533.5)" fill="#7a765e" opacity="0.7" filter="url(#b3)"/>
<ellipse cx="763.5" cy="392.4" rx="38.2" ry="13.2" transform="rotate(-5 763.5 392.4)" fill="#426030" opacity="0.8" filter="url(#b6)"/>
<ellipse cx="946.3" cy="582.4" rx="82.0" ry="73.4" fill="#436a33" opacity="0.85" filter="url(#b12)"/>
<ellipse cx="903.1" cy="532.8" rx="32.4" ry="17.3" transform="rotate(-15 903.1 532.8)" fill="#7c7962" opacity="0.6" filter="url(#b6)"/>
<ellipse cx="877.3" cy="496.1" rx="12.9" ry="23.7" transform="rotate(-20 877.3 496.1)" fill="#6b6e52" opacity="0.6" filter="url(#b3)"/>
<ellipse cx="937.7" cy="600.5" rx="11.2" ry="6.0" transform="rotate(-20 937.7 600.5)" fill="#783c29" opacity="0.9" filter="url(#b3)"/>
<ellipse cx="885.9" cy="582.4" rx="9.5" ry="17.3" fill="#685b44" opacity="0.6" filter="url(#b3)"/>
<ellipse cx="976.5" cy="569.4" rx="19.4" ry="7.8" transform="rotate(-35 976.5 569.4)" fill="#76684b" opacity="0.5" filter="url(#b3)"/>
<ellipse cx="989.4" cy="528.5" rx="21.6" ry="6.0" transform="rotate(-30 989.4 528.5)" fill="#684d37" opacity="0.55" filter="url(#b3)"/>
<ellipse cx="965.7" cy="578.9" rx="8.6" ry="5.6" transform="rotate(-20 965.7 578.9)" fill="#783c29" opacity="0.9" filter="url(#b3)"/>
<ellipse cx="980.0" cy="557.4" rx="10.4" ry="9.5" fill="#783c29" opacity="0.75" filter="url(#b3)"/>
<ellipse cx="1000.2" cy="590.2" rx="7.8" ry="5.2" fill="#783c29" opacity="0.85" filter="url(#b3)"/>
<ellipse cx="998.9" cy="569.4" rx="5.2" ry="4.3" fill="#783c29" opacity="0.8" filter="url(#b3)"/>
<ellipse cx="983.0" cy="547.9" rx="6.0" ry="3.9" fill="#783c29" opacity="0.7" filter="url(#b3)"/>
<ellipse cx="928.2" cy="624.7" rx="13.8" ry="6.9" transform="rotate(-10 928.2 624.7)" fill="#7b3f2b" opacity="0.9" filter="url(#b3)"/>
<ellipse cx="907.5" cy="565.1" rx="5.2" ry="3.5" fill="#765b4b" opacity="0.7" filter="url(#b3)"/>
<ellipse cx="1011.0" cy="513.4" rx="8.6" ry="4.3" transform="rotate(-30 1011.0 513.4)" fill="#783c29" opacity="0.7" filter="url(#b3)"/>
<ellipse cx="950.6" cy="532.8" rx="6.0" ry="4.3" fill="#6a4437" opacity="0.7" filter="url(#b3)"/>
<ellipse cx="1024.0" cy="582.4" rx="51.8" ry="64.7" fill="#3d6031" opacity="0.7" filter="url(#b12)"/>
<ellipse cx="920.4" cy="686.0" rx="7.8" ry="47.5" transform="rotate(-5 920.4 686.0)" fill="#5f6a4d" opacity="0.6" filter="url(#b3)"/>
<ellipse cx="967.9" cy="742.0" rx="43.1" ry="64.7" fill="#3a5931" opacity="0.7" filter="url(#b12)"/>
<ellipse cx="989.4" cy="776.6" rx="25.9" ry="25.9" fill="#4f6833" opacity="0.6" filter="url(#b6)"/>
<path d="M1095.2 465.9C1108.1 462.3 1130.8 477.0 1153.4 491.8C1176.1 506.5 1208.1 537.8 1231.1 554.3C1254.1 570.9 1267.0 579.9 1291.5 591.0C1315.9 602.2 1357.7 608.3 1377.8 621.2C1397.9 634.2 1410.2 651.4 1412.3 668.7C1414.5 686.0 1403.7 706.8 1390.7 724.8C1377.8 742.8 1358.4 763.6 1334.6 776.6C1310.9 789.5 1262.7 814.0 1248.3 802.5C1234.0 790.9 1257.0 729.1 1248.3 707.5C1239.7 686.0 1214.5 683.8 1196.6 673.0C1178.6 662.2 1154.1 654.3 1140.5 642.8C1126.8 631.3 1121.8 617.6 1114.6 604.0C1107.4 590.3 1103.8 575.9 1097.3 560.8C1090.8 545.7 1076.1 529.2 1075.7 513.4C1075.4 497.5 1082.2 469.5 1095.2 465.9Z" fill="#1f361f" opacity="0.95" filter="url(#b6)"/>
<path d="M1136.2 642.8C1153.4 641.4 1177.9 663.7 1196.6 673.0C1215.3 682.4 1238.3 686.0 1248.3 698.9C1258.4 711.8 1258.4 734.1 1257.0 750.7C1255.5 767.2 1255.5 788.8 1239.7 798.1C1223.9 807.5 1189.4 799.2 1162.0 806.8C1134.7 814.3 1102.4 836.6 1075.7 843.4C1049.1 850.3 1011.0 860.3 1002.4 847.8C993.8 835.2 1016.1 788.4 1024.0 767.9C1031.9 747.4 1038.3 739.2 1049.9 724.8C1061.4 710.4 1078.6 695.3 1093.0 681.6C1107.4 668.0 1118.9 644.2 1136.2 642.8Z" fill="#49422b" opacity="0.95" filter="url(#b6)"/>
<path d="M1274.2 716.2C1292.9 710.4 1349.7 714.7 1369.2 716.2C1388.6 717.6 1396.5 714.7 1390.7 724.8C1385.0 734.9 1354.1 765.8 1334.6 776.6C1315.2 787.4 1287.2 793.8 1274.2 789.5C1261.3 785.2 1257.0 762.9 1257.0 750.7C1257.0 738.4 1255.5 721.9 1274.2 716.2Z" fill="#192b18" opacity="0.9" filter="url(#b6)"/>
<ellipse cx="1179.3" cy="688.1" rx="51.8" ry="19.4" transform="rotate(-22 1179.3 688.1)" fill="#634628" opacity="0.85" filter="url(#b3)"/>
<ellipse cx="1114.6" cy="647.1" rx="23.7" ry="38.8" transform="rotate(-25 1114.6 647.1)" fill="#767246" opacity="0.8" filter="url(#b6)"/>
<ellipse cx="1067.1" cy="534.9" rx="43.1" ry="64.7" transform="rotate(10 1067.1 534.9)" fill="#304c28" opacity="0.7" filter="url(#b12)"/>
<ellipse cx="983.0" cy="826.2" rx="47.5" ry="18.1" transform="rotate(-8 983.0 826.2)" fill="#34271e" opacity="0.85" filter="url(#b3)"/>
<ellipse cx="1073.6" cy="719.6" rx="36.7" ry="23.7" transform="rotate(-25 1073.6 719.6)" fill="#3b3220" opacity="0.6" filter="url(#b6)"/>
<ellipse cx="1313.1" cy="748.5" rx="64.7" ry="32.4" transform="rotate(-20 1313.1 748.5)" fill="#111e16" opacity="0.85" filter="url(#b6)"/>
<ellipse cx="1101.6" cy="720.5" rx="51.8" ry="10.8" transform="rotate(-28 1101.6 720.5)" fill="#5e492d" opacity="0.7" filter="url(#b3)"/>
<ellipse cx="1106.0" cy="647.1" rx="30.2" ry="25.9" fill="#575a36" opacity="0.7" filter="url(#b6)"/>
<ellipse cx="1162.0" cy="772.2" rx="64.7" ry="21.6" transform="rotate(-15 1162.0 772.2)" fill="#4b462b" opacity="0.6" filter="url(#b6)"/>
<ellipse cx="1239.7" cy="642.8" rx="129.4" ry="17.3" transform="rotate(28 1239.7 642.8)" fill="#1a301b" opacity="0.6" filter="url(#b6)"/>
<ellipse cx="1153.4" cy="560.8" rx="25.9" ry="51.8" transform="rotate(-20 1153.4 560.8)" fill="#1e371a" opacity="0.5" filter="url(#b6)"/>
<ellipse cx="1369.2" cy="642.8" rx="34.5" ry="21.6" transform="rotate(20 1369.2 642.8)" fill="#2d4b25" opacity="0.6" filter="url(#b6)"/>
<ellipse cx="959.2" cy="819.7" rx="21.6" ry="12.9" fill="#3f3124" opacity="0.6" filter="url(#b3)"/>
<ellipse cx="978.7" cy="820.6" rx="6.9" ry="3.5" transform="rotate(-20 978.7 820.6)" fill="#f0f0f0" opacity="0.9" filter="url(#b1)"/>
<ellipse cx="973.1" cy="772.2" rx="4.3" ry="5.2" fill="#d8d8d0" opacity="0.6" filter="url(#b1)"/>
<ellipse cx="1149.1" cy="755.0" rx="5.2" ry="2.6" fill="#d8d8d0" opacity="0.6" filter="url(#b1)"/>
<path d="M838.9 502.9L875.5 495.8M845.8 496.3L872.6 488.7M837.7 493.7L869.8 481.6M841.1 488.4L865.5 477.3M840.2 484.3L861.2 473.0M830.5 483.7L857.0 465.9M827.9 479.2L852.7 458.7M830.8 469.2L848.4 451.6M825.6 466.6L844.1 444.5M819.6 468.7L842.7 437.3M818.4 465.1L841.3 430.2M816.1 463.6L837.0 428.1M819.3 451.5L832.7 425.9M815.6 449.0L828.4 420.2M808.6 455.8L824.1 414.5M809.8 443.7L819.9 413.1M807.6 440.2L815.6 411.7M803.2 442.3L811.3 406.7M799.3 444.6L807.0 401.7M796.3 439.5L801.3 399.5M792.0 446.1L795.6 397.4M788.7 447.1L789.9 395.3M785.0 427.0L784.2 393.1M783.3 431.0L781.4 389.6M781.6 431.2L778.5 386.0M778.4 421.7L774.9 384.6M777.2 431.4L771.4 383.1M773.1 421.5L767.1 382.4M770.3 422.0L762.8 381.7M770.6 436.6L759.2 383.8M768.3 437.0L755.7 386.0M763.8 437.0L748.5 387.4M759.8 438.9L741.4 388.8M752.6 431.4L734.3 388.1M751.1 437.7L727.1 387.4M747.8 437.1L724.3 391.7M749.1 445.3L721.4 396.0M736.6 433.3L715.7 400.2M739.7 446.3L710.0 404.5M734.7 446.2L704.3 407.4M729.3 445.9L698.6 410.2M722.1 444.5L695.1 415.9M727.2 455.8L691.5 421.6M716.9 453.3L687.9 428.8M721.4 463.7L684.4 435.9M719.5 467.9L682.2 443.0M718.3 472.6L680.1 450.2M725.6 481.8L677.2 457.3M716.1 482.4L674.4 464.4M720.5 488.7L673.7 471.6M723.5 493.9L672.9 478.7M707.5 493.3L671.5 484.4M718.6 499.6L670.1 490.1M713.3 501.2L670.8 494.4M708.9 503.3L671.5 498.7M714.4 507.4L675.1 504.4M720.9 511.2L678.6 510.1M718.4 514.8L680.1 515.8M718.6 518.5L681.5 521.5M714.1 522.7L680.8 527.2M725.6 524.4L680.1 532.9M719.9 528.7L683.6 537.2M727.4 530.0L687.2 541.5M730.3 534.0L692.9 547.9M726.6 541.2L698.6 554.3M734.1 543.5L704.3 560.7M737.0 548.1L710.0 567.1M738.4 553.8L715.7 572.9M740.7 559.3L721.4 578.6M749.3 557.9L727.1 584.3M751.4 563.6L732.9 590.0M755.1 565.9L737.1 595.7M757.8 569.6L741.4 601.4M761.2 574.2L748.5 604.2M767.2 572.4L755.7 607.1M771.4 575.5L762.8 609.9M776.2 576.4L769.9 612.8M779.9 586.1L777.1 615.6M785.1 583.9L784.2 618.5M790.1 588.0L791.3 619.9M795.2 590.1L798.5 621.4M797.3 579.2L804.2 623.5M801.9 586.1L809.9 625.6M807.4 595.2L815.6 628.5M810.9 595.3L821.3 631.3M810.2 583.6L827.0 634.9M813.4 585.3L832.7 638.5M818.5 591.5L837.0 637.8M817.9 583.5L841.3 637.0M829.6 544.8L858.4 566.4" fill="none" stroke="#15221a" stroke-width="1.1" opacity=".34" filter="url(#b07)"/>
<path d="M1154.9 603.8L1100.0 474.5M1149.3 579.8L1110.5 477.6M1152.9 576.7L1121.0 480.7M1156.5 572.9L1130.4 482.4M1169.0 604.1L1139.8 484.1M1168.0 583.5L1148.8 488.7M1173.0 588.0L1157.8 493.3M1178.9 610.7L1164.9 500.0M1179.3 586.7L1172.0 506.7M1183.7 587.1L1180.4 513.0M1188.3 615.7L1188.8 519.2M1192.8 595.3L1196.7 526.8M1195.3 616.4L1204.7 534.3M1199.1 617.0L1212.2 541.4M1205.9 606.4L1219.7 548.5M1207.8 613.0L1225.2 552.7M1204.8 632.5L1230.6 556.9M1208.8 625.2L1234.4 556.1M1211.4 622.6L1238.2 555.2M1212.3 628.7L1244.4 558.8M1213.1 633.8L1250.7 562.3M1215.6 633.9L1252.8 569.7M1222.1 628.3L1254.9 577.0M1214.7 645.7L1261.2 583.3M1225.7 637.9L1267.5 589.6M1227.6 641.0L1275.8 591.6M1223.0 649.6L1284.2 593.7M1231.9 643.5L1290.5 592.7M1241.2 637.6L1296.8 591.6M1242.6 642.1L1305.1 596.9M1234.9 651.9L1313.5 602.1M1263.5 639.1L1321.9 606.3M1262.4 644.4L1330.2 610.5M1273.7 642.9L1340.7 612.6M1250.4 656.0L1351.2 614.7M1260.1 655.5L1361.6 618.9M1255.9 660.0L1372.1 623.0M1288.3 654.4L1380.5 629.3M1271.6 662.5L1388.8 635.6M1267.8 667.0L1394.1 644.0M1282.6 668.5L1399.3 652.3M1304.5 670.2L1400.3 660.7M1301.0 675.0L1401.4 669.1M1275.9 679.9L1400.3 677.4M1270.7 683.3L1399.3 685.8M1302.5 688.5L1396.2 694.2M1286.1 691.6L1393.0 702.6M1288.9 696.4L1387.8 710.9M1261.7 695.9L1382.6 719.3M1257.7 698.8L1375.2 727.7M1278.4 709.0L1367.9 736.0M1264.9 709.8L1359.5 744.4M1249.3 708.4L1351.2 752.8M1273.8 725.1L1342.8 760.1M1260.0 723.8L1334.4 767.4M1259.5 727.9L1324.0 769.5M1235.4 715.7L1313.5 771.6M1249.8 731.7L1303.0 774.8M1227.1 717.7L1292.6 777.9M1238.7 735.7L1282.1 782.1M1226.0 729.2L1271.6 786.3M1219.5 729.0L1261.2 791.5M1217.7 736.3L1250.7 796.7M1181.0 656.2L1175.4 635.6" fill="none" stroke="#132016" stroke-width="1.1" opacity=".3" filter="url(#b07)"/>
<path d="M1183.0 729.0L1229.0 795.2M1177.5 726.3L1216.5 795.2M1177.4 734.2L1203.9 795.2M1171.7 728.4L1193.4 795.2M1167.9 725.9L1183.0 795.2M1165.1 728.1L1172.5 799.3M1162.0 726.9L1162.0 803.5M1158.9 731.8L1151.6 808.8M1155.3 736.0L1141.1 814.0M1152.0 737.5L1130.7 819.2M1144.7 750.9L1120.2 824.5M1145.4 740.1L1109.7 828.6M1139.4 747.2L1099.3 832.8M1140.5 738.9L1088.8 834.9M1134.5 744.4L1078.3 837.0M1137.4 735.3L1067.9 838.1M1129.7 742.3L1057.4 839.1M1132.0 735.5L1046.9 839.1M1110.7 756.2L1036.5 839.1M1111.5 751.4L1026.0 840.2M1118.6 741.1L1015.6 841.2M1106.2 749.9L1005.1 842.2M1086.6 763.9L994.6 843.3M1112.3 738.7L984.2 841.2M1081.7 758.7L973.7 839.1M1094.5 745.7L967.4 833.9M1089.8 745.6L961.1 828.6M1133.3 747.5L1095.1 811.9" fill="none" stroke="#2e2a1a" stroke-width="1.1" opacity=".26" filter="url(#b07)"/>
<path d="M885.9 511.2C887.1 511.0 896.7 517.7 903.1 517.7C909.6 517.7 917.5 514.1 924.7 511.2C931.9 508.3 939.1 503.3 946.3 500.4C953.5 497.5 960.7 496.5 967.9 493.9C975.1 491.4 982.3 488.2 989.4 485.3C996.6 482.4 1003.8 478.8 1011.0 476.7C1018.2 474.5 1026.1 474.0 1032.6 472.4C1039.1 470.7 1042.7 467.3 1049.9 466.8C1057.0 466.2 1067.8 469.1 1075.7 469.3C1083.7 469.6 1090.1 467.2 1097.3 468.0C1104.5 468.9 1112.1 472.9 1118.9 474.5C1125.7 476.2 1132.0 475.8 1138.3 478.0C1144.6 480.1 1151.3 483.6 1156.9 487.5C1162.4 491.3 1166.2 496.8 1171.5 501.3C1176.9 505.7 1183.2 509.5 1188.8 514.2C1194.4 519.0 1199.9 524.7 1205.2 529.8C1210.5 534.8 1216.3 540.5 1220.7 544.4C1225.2 548.3 1228.8 551.9 1231.9 553.1C1235.1 554.2 1236.3 550.4 1239.7 551.3C1243.2 552.3 1249.8 554.9 1252.7 558.7C1255.5 562.4 1254.1 569.1 1257.0 573.8C1259.8 578.4 1264.9 583.8 1269.9 586.7C1275.0 589.6 1282.1 590.7 1287.2 591.0C1292.2 591.4 1295.1 587.4 1300.1 588.9C1305.2 590.3 1311.6 596.4 1317.4 599.7C1323.1 602.9 1328.2 606.1 1334.6 608.3C1341.1 610.4 1349.0 610.4 1356.2 612.6C1363.4 614.8 1371.3 617.6 1377.8 621.2C1384.3 624.8 1390.4 629.1 1395.0 634.2C1399.7 639.2 1403.7 645.7 1405.8 651.4C1408.0 657.2 1408.0 662.9 1408.0 668.7C1408.0 674.4 1407.3 680.2 1405.8 686.0C1404.4 691.7 1402.2 697.5 1399.4 703.2C1396.5 709.0 1392.9 714.7 1388.6 720.5C1384.3 726.2 1378.9 732.0 1373.5 737.7C1368.1 743.5 1362.0 749.6 1356.2 755.0C1350.5 760.4 1345.4 766.9 1339.0 770.1C1332.5 773.3 1324.6 772.6 1317.4 774.4C1310.2 776.2 1303.0 778.4 1295.8 780.9C1288.6 783.4 1281.4 786.3 1274.2 789.5C1267.0 792.7 1259.8 798.9 1252.7 800.3C1245.5 801.7 1239.0 798.5 1231.1 798.1C1223.2 797.8 1213.1 798.1 1205.2 798.1C1197.3 798.1 1190.8 796.7 1183.6 798.1C1176.4 799.6 1169.2 803.5 1162.0 806.8C1154.9 810.0 1147.7 814.0 1140.5 817.6C1133.3 821.2 1126.1 825.1 1118.9 828.3C1111.7 831.6 1104.5 834.8 1097.3 837.0C1090.1 839.1 1082.9 840.2 1075.7 841.3C1068.6 842.4 1061.4 843.1 1054.2 843.4C1047.0 843.8 1039.8 843.1 1032.6 843.4C1025.4 843.8 1018.2 844.9 1011.0 845.6C1003.8 846.3 996.6 848.1 989.4 847.8C982.3 847.4 973.6 846.0 967.9 843.4C962.1 840.9 960.0 836.6 954.9 832.7C949.9 828.7 942.0 824.7 937.7 819.7C933.4 814.7 931.9 807.5 929.0 802.5C926.2 797.4 920.8 795.3 920.4 789.5C920.0 783.8 925.4 775.8 926.9 767.9C928.3 760.0 929.4 750.7 929.0 742.0C928.7 733.4 926.9 724.8 924.7 716.2C922.6 707.5 918.6 698.9 916.1 690.3C913.6 681.6 911.1 672.3 909.6 664.4C908.2 656.5 910.0 648.9 907.5 642.8C904.9 636.7 894.7 627.8 894.5 627.7C894.3 627.6 905.5 641.9 906.2 642.4C906.9 642.8 902.0 633.8 898.8 630.6C895.6 627.4 891.0 625.0 887.1 623.2C883.1 621.5 879.2 620.3 875.3 620.3C871.4 620.3 867.5 621.0 863.5 623.2C859.6 625.4 855.2 630.6 851.8 633.5C848.3 636.5 845.9 639.4 842.9 640.9C840.0 642.4 837.5 643.3 834.1 642.4C830.7 641.4 826.3 637.2 822.4 635.0C818.4 632.8 814.5 630.8 810.6 629.1C806.7 627.4 803.2 625.9 798.8 624.7C794.4 623.5 789.0 623.2 784.1 621.8C779.2 620.3 774.3 617.8 769.4 615.9C764.5 613.9 759.6 612.0 754.7 610.0C749.8 608.0 743.9 607.1 740.0 604.1C736.1 601.2 734.6 596.3 731.2 592.4C727.7 588.4 723.3 584.5 719.4 580.6C715.5 576.7 711.6 573.0 707.6 568.8C703.7 564.7 699.8 560.0 695.9 555.6C692.0 551.2 687.3 546.0 684.1 542.4C680.9 538.7 677.7 537.0 676.8 533.5C675.8 530.1 678.5 525.7 678.2 521.8C678.0 517.8 677.0 513.9 675.3 510.0C673.6 506.1 669.4 501.7 667.9 498.2C666.5 494.8 666.2 492.8 666.5 489.4C666.7 486.0 668.7 482.1 669.4 477.6C670.1 473.2 669.7 467.8 670.9 462.9C672.1 458.0 675.0 453.1 676.8 448.2C678.5 443.3 679.2 438.4 681.2 433.5C683.1 428.6 686.1 423.2 688.5 418.8C691.0 414.4 692.7 410.0 695.9 407.1C699.1 404.1 703.7 403.6 707.6 401.2C711.6 398.7 716.5 395.3 719.4 392.4C722.4 389.4 721.9 384.8 725.3 383.5C728.7 382.3 735.1 385.2 740.0 385.0C744.9 384.8 751.0 383.3 754.7 382.1C758.4 380.8 759.4 378.1 762.1 377.6C764.8 377.2 768.2 378.4 770.9 379.1C773.6 379.9 776.0 380.3 778.2 382.1C780.4 383.8 781.2 387.5 784.1 389.4C787.1 391.4 792.0 392.4 795.9 393.8C799.8 395.3 804.2 395.8 807.6 398.2C811.1 400.7 813.5 406.3 816.5 408.5C819.4 410.7 822.4 409.0 825.3 411.5C828.2 413.9 831.2 420.5 834.1 423.2C837.1 425.9 841.0 424.5 842.9 427.6C844.9 430.8 843.9 437.5 845.9 442.4C847.8 447.3 851.8 452.2 854.7 457.1C857.6 462.0 860.6 467.8 863.5 471.8C866.5 475.7 869.9 476.7 872.4 480.6C874.8 484.5 875.8 490.4 878.2 495.3C880.7 500.2 884.1 506.1 887.1 510.0C890.0 513.9 896.1 518.6 895.9 518.8C895.7 519.0 884.7 511.4 885.9 511.2Z" fill="#05100a" filter="url(#tex)" opacity=".45"/>
<path d="M885.9 511.2C887.1 511.0 896.7 517.7 903.1 517.7C909.6 517.7 917.5 514.1 924.7 511.2C931.9 508.3 939.1 503.3 946.3 500.4C953.5 497.5 960.7 496.5 967.9 493.9C975.1 491.4 982.3 488.2 989.4 485.3C996.6 482.4 1003.8 478.8 1011.0 476.7C1018.2 474.5 1026.1 474.0 1032.6 472.4C1039.1 470.7 1042.7 467.3 1049.9 466.8C1057.0 466.2 1067.8 469.1 1075.7 469.3C1083.7 469.6 1090.1 467.2 1097.3 468.0C1104.5 468.9 1112.1 472.9 1118.9 474.5C1125.7 476.2 1132.0 475.8 1138.3 478.0C1144.6 480.1 1151.3 483.6 1156.9 487.5C1162.4 491.3 1166.2 496.8 1171.5 501.3C1176.9 505.7 1183.2 509.5 1188.8 514.2C1194.4 519.0 1199.9 524.7 1205.2 529.8C1210.5 534.8 1216.3 540.5 1220.7 544.4C1225.2 548.3 1228.8 551.9 1231.9 553.1C1235.1 554.2 1236.3 550.4 1239.7 551.3C1243.2 552.3 1249.8 554.9 1252.7 558.7C1255.5 562.4 1254.1 569.1 1257.0 573.8C1259.8 578.4 1264.9 583.8 1269.9 586.7C1275.0 589.6 1282.1 590.7 1287.2 591.0C1292.2 591.4 1295.1 587.4 1300.1 588.9C1305.2 590.3 1311.6 596.4 1317.4 599.7C1323.1 602.9 1328.2 606.1 1334.6 608.3C1341.1 610.4 1349.0 610.4 1356.2 612.6C1363.4 614.8 1371.3 617.6 1377.8 621.2C1384.3 624.8 1390.4 629.1 1395.0 634.2C1399.7 639.2 1403.7 645.7 1405.8 651.4C1408.0 657.2 1408.0 662.9 1408.0 668.7C1408.0 674.4 1407.3 680.2 1405.8 686.0C1404.4 691.7 1402.2 697.5 1399.4 703.2C1396.5 709.0 1392.9 714.7 1388.6 720.5C1384.3 726.2 1378.9 732.0 1373.5 737.7C1368.1 743.5 1362.0 749.6 1356.2 755.0C1350.5 760.4 1345.4 766.9 1339.0 770.1C1332.5 773.3 1324.6 772.6 1317.4 774.4C1310.2 776.2 1303.0 778.4 1295.8 780.9C1288.6 783.4 1281.4 786.3 1274.2 789.5C1267.0 792.7 1259.8 798.9 1252.7 800.3C1245.5 801.7 1239.0 798.5 1231.1 798.1C1223.2 797.8 1213.1 798.1 1205.2 798.1C1197.3 798.1 1190.8 796.7 1183.6 798.1C1176.4 799.6 1169.2 803.5 1162.0 806.8C1154.9 810.0 1147.7 814.0 1140.5 817.6C1133.3 821.2 1126.1 825.1 1118.9 828.3C1111.7 831.6 1104.5 834.8 1097.3 837.0C1090.1 839.1 1082.9 840.2 1075.7 841.3C1068.6 842.4 1061.4 843.1 1054.2 843.4C1047.0 843.8 1039.8 843.1 1032.6 843.4C1025.4 843.8 1018.2 844.9 1011.0 845.6C1003.8 846.3 996.6 848.1 989.4 847.8C982.3 847.4 973.6 846.0 967.9 843.4C962.1 840.9 960.0 836.6 954.9 832.7C949.9 828.7 942.0 824.7 937.7 819.7C933.4 814.7 931.9 807.5 929.0 802.5C926.2 797.4 920.8 795.3 920.4 789.5C920.0 783.8 925.4 775.8 926.9 767.9C928.3 760.0 929.4 750.7 929.0 742.0C928.7 733.4 926.9 724.8 924.7 716.2C922.6 707.5 918.6 698.9 916.1 690.3C913.6 681.6 911.1 672.3 909.6 664.4C908.2 656.5 910.0 648.9 907.5 642.8C904.9 636.7 894.7 627.8 894.5 627.7C894.3 627.6 905.5 641.9 906.2 642.4C906.9 642.8 902.0 633.8 898.8 630.6C895.6 627.4 891.0 625.0 887.1 623.2C883.1 621.5 879.2 620.3 875.3 620.3C871.4 620.3 867.5 621.0 863.5 623.2C859.6 625.4 855.2 630.6 851.8 633.5C848.3 636.5 845.9 639.4 842.9 640.9C840.0 642.4 837.5 643.3 834.1 642.4C830.7 641.4 826.3 637.2 822.4 635.0C818.4 632.8 814.5 630.8 810.6 629.1C806.7 627.4 803.2 625.9 798.8 624.7C794.4 623.5 789.0 623.2 784.1 621.8C779.2 620.3 774.3 617.8 769.4 615.9C764.5 613.9 759.6 612.0 754.7 610.0C749.8 608.0 743.9 607.1 740.0 604.1C736.1 601.2 734.6 596.3 731.2 592.4C727.7 588.4 723.3 584.5 719.4 580.6C715.5 576.7 711.6 573.0 707.6 568.8C703.7 564.7 699.8 560.0 695.9 555.6C692.0 551.2 687.3 546.0 684.1 542.4C680.9 538.7 677.7 537.0 676.8 533.5C675.8 530.1 678.5 525.7 678.2 521.8C678.0 517.8 677.0 513.9 675.3 510.0C673.6 506.1 669.4 501.7 667.9 498.2C666.5 494.8 666.2 492.8 666.5 489.4C666.7 486.0 668.7 482.1 669.4 477.6C670.1 473.2 669.7 467.8 670.9 462.9C672.1 458.0 675.0 453.1 676.8 448.2C678.5 443.3 679.2 438.4 681.2 433.5C683.1 428.6 686.1 423.2 688.5 418.8C691.0 414.4 692.7 410.0 695.9 407.1C699.1 404.1 703.7 403.6 707.6 401.2C711.6 398.7 716.5 395.3 719.4 392.4C722.4 389.4 721.9 384.8 725.3 383.5C728.7 382.3 735.1 385.2 740.0 385.0C744.9 384.8 751.0 383.3 754.7 382.1C758.4 380.8 759.4 378.1 762.1 377.6C764.8 377.2 768.2 378.4 770.9 379.1C773.6 379.9 776.0 380.3 778.2 382.1C780.4 383.8 781.2 387.5 784.1 389.4C787.1 391.4 792.0 392.4 795.9 393.8C799.8 395.3 804.2 395.8 807.6 398.2C811.1 400.7 813.5 406.3 816.5 408.5C819.4 410.7 822.4 409.0 825.3 411.5C828.2 413.9 831.2 420.5 834.1 423.2C837.1 425.9 841.0 424.5 842.9 427.6C844.9 430.8 843.9 437.5 845.9 442.4C847.8 447.3 851.8 452.2 854.7 457.1C857.6 462.0 860.6 467.8 863.5 471.8C866.5 475.7 869.9 476.7 872.4 480.6C874.8 484.5 875.8 490.4 878.2 495.3C880.7 500.2 884.1 506.1 887.1 510.0C890.0 513.9 896.1 518.6 895.9 518.8C895.7 519.0 884.7 511.4 885.9 511.2Z" fill="#b9b27a" filter="url(#tex2)" opacity=".11"/>
<path d="M832.6 465.3L819.4 470.3L806.2 481.2L795.9 496.8L784.1 510.0L770.9 524.7" fill="none" stroke="#080d0a" stroke-width="3.8" stroke-linecap="round" stroke-linejoin="round" filter="url(#b1)"/>
<path d="M823.8 487.1L809.1 495.3L797.4 505.6L784.1 520.3" fill="none" stroke="#080d0a" stroke-width="3" stroke-linecap="round" stroke-linejoin="round" filter="url(#b1)"/>
<path d="M845.9 526.2L828.2 533.5L813.5 537.9L792.9 534.1L778.2 543.8L766.5 549.7L754.7 554.7" fill="none" stroke="#080d0a" stroke-width="3.5" stroke-linecap="round" stroke-linejoin="round" filter="url(#b1)"/>
<path d="M781.2 468.8L778.2 498.2" fill="none" stroke="#0a100c" stroke-width="3" stroke-linecap="round" stroke-linejoin="round" filter="url(#b1)"/>
<path d="M778.2 551.2L769.4 571.8L756.2 590.9" fill="none" stroke="#080d0a" stroke-width="4" stroke-linecap="round" stroke-linejoin="round" filter="url(#b1)"/>
<path d="M791.5 565.9L784.1 583.5L778.2 599.7" fill="none" stroke="#080d0a" stroke-width="3.5" stroke-linecap="round" stroke-linejoin="round" filter="url(#b1)"/>
<path d="M842.9 536.5L828.2 548.2L816.5 555.6" fill="none" stroke="#0a100c" stroke-width="2.5" stroke-linecap="round" stroke-linejoin="round" filter="url(#b1)"/>
<path d="M804.7 598.2L798.8 610.0" fill="none" stroke="#0a100c" stroke-width="3" stroke-linecap="round" stroke-linejoin="round" filter="url(#b1)"/>
<path d="M737.1 536.5L763.5 539.4" fill="none" stroke="#0d140f" stroke-width="3" stroke-linecap="round" stroke-linejoin="round" filter="url(#b1)"/>
<path d="M828.2 498.2L810.6 515.9" fill="none" stroke="#0d140f" stroke-width="2.5" stroke-linecap="round" stroke-linejoin="round" filter="url(#b1)"/>
<path d="M1131.8 701.1L1149.1 679.5L1164.2 664.4" fill="none" stroke="#14140e" stroke-width="3" stroke-linecap="round" stroke-linejoin="round" filter="url(#b1)"/>
<path d="M1162.0 655.7L1181.5 625.5" fill="none" stroke="#101a10" stroke-width="2.5" stroke-linecap="round" stroke-linejoin="round" filter="url(#b1)"/>
<path d="M1026.1 761.5L1075.7 733.4L1127.5 711.8" fill="none" stroke="#3c3422" stroke-width="2" stroke-linecap="round" stroke-linejoin="round" filter="url(#b1)"/>
<path d="M1261.3 737.7L1257.0 755.0" fill="none" stroke="#101810" stroke-width="4" stroke-linecap="round" stroke-linejoin="round" filter="url(#b1)"/>
<path d="M1205.2 737.7L1207.4 750.7" fill="none" stroke="#1c1c12" stroke-width="3" stroke-linecap="round" stroke-linejoin="round" filter="url(#b1)"/>
</g>
<defs><clipPath id="c-all"><path d="M83.4 180.8C84.2 178.8 89.3 177.9 92.9 178.4C96.4 179.0 100.0 182.9 104.7 184.1C109.4 185.3 116.4 185.8 121.3 185.5C126.2 185.2 130.1 181.8 134.1 182.2C138.0 182.6 142.0 185.4 145.0 187.9C148.0 190.4 147.7 195.1 152.1 197.4C156.4 199.6 163.1 200.0 171.0 201.1C178.9 202.3 190.7 203.5 199.4 204.5C208.1 205.4 213.6 205.8 223.1 206.8C232.6 207.9 246.0 209.0 256.2 210.6C266.5 212.2 275.2 215.0 284.7 216.3C294.1 217.6 303.6 217.7 313.1 218.7C322.5 219.6 333.2 221.6 341.5 222.0C349.8 222.4 358.7 223.6 362.8 221.0C366.9 218.5 364.9 211.2 366.1 206.8C367.3 202.5 368.1 198.0 369.9 195.0C371.7 192.0 374.2 190.0 377.0 188.8C379.8 187.6 383.3 186.9 386.5 187.9C389.6 188.9 393.6 191.8 395.9 195.0C398.3 198.1 399.1 202.5 400.7 206.8C402.2 211.2 403.4 217.5 405.4 221.0C407.4 224.6 407.4 225.9 412.5 228.1C417.6 230.3 428.3 232.7 436.2 234.3C444.1 235.9 452.0 236.7 459.9 237.6C467.8 238.6 475.6 239.6 483.5 240.0C491.4 240.4 499.3 240.8 507.2 240.0C515.1 239.2 523.0 236.7 530.9 235.2C538.8 233.8 546.7 232.4 554.6 231.4C562.5 230.5 570.4 230.1 578.2 229.6C586.1 229.0 594.4 228.0 601.9 228.1C609.4 228.3 618.5 228.5 623.2 230.5C628.0 232.5 626.8 237.8 630.3 240.0C633.9 242.2 640.8 242.6 644.5 243.8C648.2 244.9 651.8 244.9 652.6 247.1C653.4 249.2 651.0 252.6 649.3 256.5C647.5 260.5 645.3 265.6 642.2 270.8C639.0 275.9 634.7 282.2 630.3 287.3C626.0 292.5 620.9 296.8 616.1 301.5C611.4 306.3 606.7 311.4 601.9 315.7C597.2 320.1 593.2 323.6 587.7 327.6C582.2 331.5 575.1 335.9 568.8 339.4C562.5 343.0 556.1 345.7 549.8 348.9C543.5 352.0 537.2 355.6 530.9 358.4C524.6 361.1 518.3 363.5 511.9 365.5C505.6 367.4 498.5 369.8 493.0 370.2C487.5 370.6 484.3 369.8 478.8 367.8C473.3 365.9 467.0 360.7 459.9 358.4C452.8 356.0 443.3 355.2 436.2 353.6C429.1 352.0 423.6 350.9 417.2 348.9C410.9 346.9 404.6 343.8 398.3 341.8C392.0 339.8 385.7 338.6 379.4 337.0C373.0 335.5 366.7 333.5 360.4 332.3C354.1 331.1 347.8 331.1 341.5 329.9C335.2 328.8 328.8 327.2 322.5 325.2C316.2 323.2 309.9 320.1 303.6 318.1C297.3 316.1 291.0 314.6 284.7 313.4C278.3 312.2 272.0 311.4 265.7 311.0C259.4 310.6 253.9 310.6 246.8 311.0C239.7 311.4 231.0 312.7 223.1 313.4C215.2 314.0 207.3 314.4 199.4 314.8C191.5 315.2 183.6 315.4 175.7 315.7C167.8 316.1 160.0 316.3 152.1 316.7C144.2 317.1 136.3 317.9 128.4 318.1C120.5 318.3 112.6 318.5 104.7 318.1C96.8 317.7 88.9 316.5 81.0 315.7C73.1 314.9 64.5 314.2 57.4 313.4C50.3 312.6 43.1 312.6 38.4 311.0C33.7 309.4 29.7 307.1 28.9 303.9C28.2 300.7 31.7 296.0 33.7 292.1C35.6 288.1 38.4 284.6 40.8 280.2C43.1 275.9 45.1 270.8 47.9 266.0C50.6 261.3 53.4 256.2 57.4 251.8C61.3 247.5 66.8 243.9 71.6 240.0C76.3 236.0 82.5 232.1 85.8 228.1C89.1 224.2 90.3 220.6 91.4 216.3C92.6 212.0 93.4 206.4 92.9 202.1C92.3 197.7 89.7 193.8 88.1 190.3C86.6 186.7 82.6 182.8 83.4 180.8Z"/><path d="M288.2 516.5C288.6 513.3 289.4 508.2 291.8 504.7C294.1 501.2 298.2 498.0 302.4 495.3C306.5 492.5 311.0 490.0 316.5 488.2C322.0 486.5 329.0 485.6 335.3 484.7C341.6 483.8 347.8 483.3 354.1 483.1C360.4 482.9 366.7 483.1 372.9 483.5C379.2 483.9 385.5 484.4 391.8 485.4C398.0 486.4 404.3 488.4 410.6 489.4C416.9 490.5 423.1 490.8 429.4 491.8C435.7 492.7 442.7 493.7 448.2 495.3C453.7 496.9 458.0 498.8 462.4 501.2C466.7 503.5 470.2 506.3 474.1 509.4C478.0 512.5 482.0 516.5 485.9 520.0C489.8 523.5 493.7 526.9 497.6 530.6C501.6 534.3 505.5 538.4 509.4 542.4C513.3 546.3 517.3 550.2 521.2 554.1C525.1 558.0 529.4 562.0 532.9 565.9C536.5 569.8 539.6 573.7 542.4 577.6C545.1 581.6 547.6 585.5 549.4 589.4C551.2 593.3 552.5 596.9 552.9 601.2C553.3 605.5 552.7 610.6 551.8 615.3C550.8 620.0 549.0 625.1 547.1 629.4C545.1 633.7 542.7 637.6 540.0 641.2C537.3 644.7 534.1 647.5 530.6 650.6C527.1 653.7 523.1 657.3 518.8 660.0C514.5 662.7 509.4 664.9 504.7 667.1C500.0 669.2 495.3 671.2 490.6 672.9C485.9 674.7 480.4 676.1 476.5 677.6C472.5 679.2 470.2 681.8 467.1 682.4C463.9 682.9 461.6 681.2 457.6 681.2C453.7 681.2 449.0 682.0 443.5 682.4C438.0 682.7 431.0 683.0 424.7 683.5C418.4 684.0 411.4 684.8 405.9 685.4C400.4 686.0 395.1 687.8 391.8 687.1C388.4 686.4 388.2 683.7 385.9 681.2C383.5 678.6 380.6 675.7 377.6 671.8C374.7 667.8 371.0 662.4 368.2 657.6C365.5 652.9 362.7 648.2 361.2 643.5C359.6 638.8 358.8 634.1 358.8 629.4C358.8 624.7 360.4 620.0 361.2 615.3C362.0 610.6 363.9 605.9 363.5 601.2C363.1 596.5 360.8 591.8 358.8 587.1C356.9 582.4 354.5 577.3 351.8 572.9C349.0 568.6 345.9 564.5 342.4 561.2C338.8 557.8 334.9 555.3 330.6 552.9C326.3 550.6 320.8 548.8 316.5 547.1C312.2 545.3 308.2 544.7 304.7 542.4C301.2 540.0 297.8 536.1 295.3 532.9C292.7 529.8 290.6 526.3 289.4 523.5C288.2 520.8 287.8 519.6 288.2 516.5Z"/><path d="M663.0 898.1C663.5 896.0 665.5 892.9 667.6 890.4C669.6 887.8 672.4 885.5 675.2 882.7C678.0 879.9 681.4 875.7 684.4 873.5C687.5 871.4 690.3 870.9 693.6 869.7C696.9 868.6 700.5 867.8 704.3 866.6C708.2 865.5 713.0 864.5 716.6 862.8C720.2 861.2 722.7 859.0 725.8 856.7C728.9 854.4 731.7 851.3 735.0 849.0C738.3 846.7 742.1 845.2 745.7 842.9C749.3 840.6 752.9 837.5 756.4 835.2C760.0 832.9 763.6 830.9 767.2 829.1C770.7 827.3 774.3 825.8 777.9 824.5C781.5 823.2 785.0 821.8 788.6 821.4C792.2 821.1 796.0 821.4 799.3 822.2C802.7 823.0 805.5 824.1 808.5 826.0C811.6 828.0 815.2 830.9 817.7 833.7C820.3 836.5 821.8 839.8 823.8 842.9C825.9 846.0 829.2 849.5 830.0 852.1C830.7 854.6 830.0 856.7 828.4 858.2C826.9 859.7 822.6 859.5 820.8 861.3C819.0 863.1 818.5 866.4 817.7 868.9C816.9 871.5 816.9 874.0 816.2 876.6C815.4 879.2 813.4 882.0 813.1 884.3C812.9 886.6 812.9 888.9 814.7 890.4C816.4 891.9 820.5 892.9 823.8 893.5C827.2 894.0 832.4 892.4 834.6 893.5C836.7 894.5 837.6 897.5 836.9 899.6C836.1 901.6 831.6 903.4 830.0 905.7C828.3 908.0 828.2 911.8 826.9 913.4C825.6 914.9 824.1 915.7 822.3 914.9C820.5 914.1 818.5 910.3 816.2 908.8C813.9 907.2 811.3 905.2 808.5 905.7C805.7 906.2 802.4 910.1 799.3 911.8C796.3 913.6 792.9 915.2 790.1 916.4C787.3 917.7 784.8 920.0 782.5 919.5C780.2 919.0 778.4 915.7 776.4 913.4C774.3 911.1 772.0 907.2 770.2 905.7C768.4 904.2 767.2 903.2 765.6 904.2C764.1 905.2 763.1 910.3 761.0 911.8C759.0 913.4 756.2 912.6 753.4 913.4C750.6 914.1 747.2 915.2 744.2 916.4C741.1 917.7 738.1 920.0 735.0 921.0C731.9 922.1 728.3 923.1 725.8 922.6C723.2 922.1 721.2 919.5 719.7 918.0C718.1 916.4 718.1 912.9 716.6 913.4C715.1 913.9 713.0 919.0 710.5 921.0C707.9 923.1 704.3 924.9 701.3 925.6C698.2 926.4 695.2 926.1 692.1 925.6C689.0 925.1 685.2 924.6 682.9 922.6C680.6 920.5 680.6 915.9 678.3 913.4C676.0 910.8 671.4 909.0 669.1 907.2C666.8 905.5 665.5 904.2 664.5 902.6C663.5 901.1 662.5 900.1 663.0 898.1Z"/><path d="M885.9 511.2C887.1 511.0 896.7 517.7 903.1 517.7C909.6 517.7 917.5 514.1 924.7 511.2C931.9 508.3 939.1 503.3 946.3 500.4C953.5 497.5 960.7 496.5 967.9 493.9C975.1 491.4 982.3 488.2 989.4 485.3C996.6 482.4 1003.8 478.8 1011.0 476.7C1018.2 474.5 1026.1 474.0 1032.6 472.4C1039.1 470.7 1042.7 467.3 1049.9 466.8C1057.0 466.2 1067.8 469.1 1075.7 469.3C1083.7 469.6 1090.1 467.2 1097.3 468.0C1104.5 468.9 1112.1 472.9 1118.9 474.5C1125.7 476.2 1132.0 475.8 1138.3 478.0C1144.6 480.1 1151.3 483.6 1156.9 487.5C1162.4 491.3 1166.2 496.8 1171.5 501.3C1176.9 505.7 1183.2 509.5 1188.8 514.2C1194.4 519.0 1199.9 524.7 1205.2 529.8C1210.5 534.8 1216.3 540.5 1220.7 544.4C1225.2 548.3 1228.8 551.9 1231.9 553.1C1235.1 554.2 1236.3 550.4 1239.7 551.3C1243.2 552.3 1249.8 554.9 1252.7 558.7C1255.5 562.4 1254.1 569.1 1257.0 573.8C1259.8 578.4 1264.9 583.8 1269.9 586.7C1275.0 589.6 1282.1 590.7 1287.2 591.0C1292.2 591.4 1295.1 587.4 1300.1 588.9C1305.2 590.3 1311.6 596.4 1317.4 599.7C1323.1 602.9 1328.2 606.1 1334.6 608.3C1341.1 610.4 1349.0 610.4 1356.2 612.6C1363.4 614.8 1371.3 617.6 1377.8 621.2C1384.3 624.8 1390.4 629.1 1395.0 634.2C1399.7 639.2 1403.7 645.7 1405.8 651.4C1408.0 657.2 1408.0 662.9 1408.0 668.7C1408.0 674.4 1407.3 680.2 1405.8 686.0C1404.4 691.7 1402.2 697.5 1399.4 703.2C1396.5 709.0 1392.9 714.7 1388.6 720.5C1384.3 726.2 1378.9 732.0 1373.5 737.7C1368.1 743.5 1362.0 749.6 1356.2 755.0C1350.5 760.4 1345.4 766.9 1339.0 770.1C1332.5 773.3 1324.6 772.6 1317.4 774.4C1310.2 776.2 1303.0 778.4 1295.8 780.9C1288.6 783.4 1281.4 786.3 1274.2 789.5C1267.0 792.7 1259.8 798.9 1252.7 800.3C1245.5 801.7 1239.0 798.5 1231.1 798.1C1223.2 797.8 1213.1 798.1 1205.2 798.1C1197.3 798.1 1190.8 796.7 1183.6 798.1C1176.4 799.6 1169.2 803.5 1162.0 806.8C1154.9 810.0 1147.7 814.0 1140.5 817.6C1133.3 821.2 1126.1 825.1 1118.9 828.3C1111.7 831.6 1104.5 834.8 1097.3 837.0C1090.1 839.1 1082.9 840.2 1075.7 841.3C1068.6 842.4 1061.4 843.1 1054.2 843.4C1047.0 843.8 1039.8 843.1 1032.6 843.4C1025.4 843.8 1018.2 844.9 1011.0 845.6C1003.8 846.3 996.6 848.1 989.4 847.8C982.3 847.4 973.6 846.0 967.9 843.4C962.1 840.9 960.0 836.6 954.9 832.7C949.9 828.7 942.0 824.7 937.7 819.7C933.4 814.7 931.9 807.5 929.0 802.5C926.2 797.4 920.8 795.3 920.4 789.5C920.0 783.8 925.4 775.8 926.9 767.9C928.3 760.0 929.4 750.7 929.0 742.0C928.7 733.4 926.9 724.8 924.7 716.2C922.6 707.5 918.6 698.9 916.1 690.3C913.6 681.6 911.1 672.3 909.6 664.4C908.2 656.5 910.0 648.9 907.5 642.8C904.9 636.7 894.7 627.8 894.5 627.7C894.3 627.6 905.5 641.9 906.2 642.4C906.9 642.8 902.0 633.8 898.8 630.6C895.6 627.4 891.0 625.0 887.1 623.2C883.1 621.5 879.2 620.3 875.3 620.3C871.4 620.3 867.5 621.0 863.5 623.2C859.6 625.4 855.2 630.6 851.8 633.5C848.3 636.5 845.9 639.4 842.9 640.9C840.0 642.4 837.5 643.3 834.1 642.4C830.7 641.4 826.3 637.2 822.4 635.0C818.4 632.8 814.5 630.8 810.6 629.1C806.7 627.4 803.2 625.9 798.8 624.7C794.4 623.5 789.0 623.2 784.1 621.8C779.2 620.3 774.3 617.8 769.4 615.9C764.5 613.9 759.6 612.0 754.7 610.0C749.8 608.0 743.9 607.1 740.0 604.1C736.1 601.2 734.6 596.3 731.2 592.4C727.7 588.4 723.3 584.5 719.4 580.6C715.5 576.7 711.6 573.0 707.6 568.8C703.7 564.7 699.8 560.0 695.9 555.6C692.0 551.2 687.3 546.0 684.1 542.4C680.9 538.7 677.7 537.0 676.8 533.5C675.8 530.1 678.5 525.7 678.2 521.8C678.0 517.8 677.0 513.9 675.3 510.0C673.6 506.1 669.4 501.7 667.9 498.2C666.5 494.8 666.2 492.8 666.5 489.4C666.7 486.0 668.7 482.1 669.4 477.6C670.1 473.2 669.7 467.8 670.9 462.9C672.1 458.0 675.0 453.1 676.8 448.2C678.5 443.3 679.2 438.4 681.2 433.5C683.1 428.6 686.1 423.2 688.5 418.8C691.0 414.4 692.7 410.0 695.9 407.1C699.1 404.1 703.7 403.6 707.6 401.2C711.6 398.7 716.5 395.3 719.4 392.4C722.4 389.4 721.9 384.8 725.3 383.5C728.7 382.3 735.1 385.2 740.0 385.0C744.9 384.8 751.0 383.3 754.7 382.1C758.4 380.8 759.4 378.1 762.1 377.6C764.8 377.2 768.2 378.4 770.9 379.1C773.6 379.9 776.0 380.3 778.2 382.1C780.4 383.8 781.2 387.5 784.1 389.4C787.1 391.4 792.0 392.4 795.9 393.8C799.8 395.3 804.2 395.8 807.6 398.2C811.1 400.7 813.5 406.3 816.5 408.5C819.4 410.7 822.4 409.0 825.3 411.5C828.2 413.9 831.2 420.5 834.1 423.2C837.1 425.9 841.0 424.5 842.9 427.6C844.9 430.8 843.9 437.5 845.9 442.4C847.8 447.3 851.8 452.2 854.7 457.1C857.6 462.0 860.6 467.8 863.5 471.8C866.5 475.7 869.9 476.7 872.4 480.6C874.8 484.5 875.8 490.4 878.2 495.3C880.7 500.2 884.1 506.1 887.1 510.0C890.0 513.9 896.1 518.6 895.9 518.8C895.7 519.0 884.7 511.4 885.9 511.2Z"/></clipPath></defs>
<g clip-path="url(#c-all)"><path d="M371 249h2v1h-2zM384 247h2v2h-2zM373 246h1v1h-1zM379 247h2v2h-2zM383 246h1v1h-1zM374 245h1v2h-1zM387 247h2v1h-2zM382 248h1v1h-1zM385 248h1v1h-1zM377 248h1v1h-1zM378 248h1v1h-1zM370 248h1v1h-1zM377 247h1v1h-1zM384 250h1v1h-1zM375 251h1v1h-1zM391 246h1v2h-1zM388 245h1v1h-1zM379 244h1v1h-1zM376 251h1v1h-1zM383 244h1v2h-1zM368 249h1v1h-1zM382 245h2v2h-2zM388 247h1v1h-1zM388 248h1v1h-1zM383 245h2v1h-2zM370 245h1v1h-1zM391 248h2v1h-2zM380 247h1v1h-1zM378 245h1v1h-1zM379 251h1v2h-1zM373 245h1v1h-1zM367 248h1v1h-1zM375 246h1v1h-1zM373 250h2v1h-2zM375 247h1v1h-1zM359 248h1v2h-1zM380 250h2v1h-2zM376 250h1v1h-1zM384 254h1v1h-1zM385 247h1v1h-1zM374 247h1v1h-1zM382 247h2v1h-2zM377 249h1v1h-1zM363 248h1v1h-1zM387 252h2v1h-2zM368 250h1v1h-1zM375 248h1v1h-1zM375 249h1v1h-1zM382 247h1v2h-1zM387 247h1v1h-1zM378 243h1v1h-1zM388 249h2v1h-2zM378 249h1v1h-1zM380 250h1v1h-1zM382 244h1v1h-1zM379 248h2v1h-2zM367 249h2v1h-2zM362 248h1v1h-1zM381 250h1v1h-1zM377 251h2v1h-2zM374 248h1v1h-1zM376 246h2v1h-2zM385 249h1v1h-1zM381 253h1v1h-1zM381 249h1v1h-1zM376 248h1v1h-1zM377 251h1v2h-1zM392 255h2v1h-2zM389 259h1v1h-1zM384 263h1v2h-1zM377 257h1v1h-1zM387 259h1v2h-1zM371 259h1v1h-1zM398 258h1v1h-1zM385 257h1v1h-1zM393 257h1v1h-1zM392 259h2v1h-2zM398 256h2v1h-2zM398 259h1v1h-1zM389 262h2v2h-2zM386 258h1v1h-1zM380 254h1v1h-1zM395 258h1v1h-1zM383 258h1v1h-1zM397 256h1v1h-1zM379 256h1v1h-1zM386 255h1v1h-1zM387 260h1v1h-1zM376 257h2v1h-2zM383 259h1v1h-1zM387 254h1v1h-1zM382 257h1v1h-1zM395 256h1v1h-1zM372 257h1v1h-1zM392 259h1v1h-1zM391 257h1v2h-1zM394 258h2v1h-2zM391 260h1v2h-1zM381 257h2v1h-2zM398 251h1v1h-1zM390 258h1v1h-1zM374 259h1v1h-1zM378 260h1v1h-1zM397 259h1v1h-1zM380 256h1v1h-1zM387 254h2v1h-2zM382 259h1v1h-1zM388 258h1v1h-1zM386 261h1v1h-1zM384 261h1v2h-1zM390 257h1v1h-1zM370 258h1v1h-1zM399 255h1v1h-1zM393 261h2v1h-2zM393 253h1v1h-1zM384 259h1v1h-1zM391 258h1v1h-1zM379 259h1v1h-1zM383 257h1v1h-1zM394 259h2v1h-2zM419 271h1v1h-1zM420 269h1v2h-1zM418 266h1v1h-1zM418 272h1v2h-1zM418 272h1v1h-1zM417 272h1v1h-1zM413 269h1v2h-1zM417 270h1v1h-1zM420 269h1v1h-1zM421 270h1v1h-1zM421 275h1v1h-1zM421 269h1v1h-1zM414 268h2v1h-2zM422 272h1v1h-1zM419 272h1v1h-1zM419 272h1v2h-1zM417 269h1v1h-1zM415 271h1v1h-1zM419 270h1v1h-1zM415 270h1v2h-1zM414 269h1v2h-1zM421 273h1v1h-1zM416 268h1v1h-1zM424 270h1v2h-1zM420 273h1v1h-1zM416 270h1v1h-1zM412 272h1v1h-1zM419 270h1v2h-1zM419 268h1v1h-1zM423 268h1v1h-1zM417 271h1v1h-1zM421 272h1v1h-1zM424 274h1v1h-1zM425 272h1v1h-1zM422 268h1v2h-1zM419 269h1v1h-1zM422 267h1v1h-1zM417 271h1v2h-1zM419 269h1v2h-1zM424 271h1v1h-1zM415 268h2v1h-2zM416 271h1v1h-1zM418 270h1v1h-1zM419 274h1v1h-1zM416 272h1v1h-1zM406 263h2v1h-2zM410 264h2v1h-2zM410 264h1v2h-1zM408 263h1v1h-1zM406 259h1v1h-1zM409 263h1v2h-1zM408 259h1v1h-1zM405 262h1v1h-1zM406 266h1v1h-1zM401 263h1v1h-1zM406 265h1v1h-1zM408 263h1v2h-1zM410 262h1v1h-1zM407 261h1v1h-1zM403 262h1v1h-1zM410 263h1v2h-1zM408 264h1v1h-1zM407 265h1v1h-1zM446 286h2v1h-2zM454 285h2v1h-2zM444 286h1v1h-1zM440 286h1v1h-1zM447 293h2v1h-2zM445 290h1v1h-1zM448 293h1v1h-1zM438 287h1v1h-1zM448 289h1v1h-1zM450 294h2v1h-2zM441 292h1v1h-1zM440 285h1v1h-1zM441 286h1v2h-1zM441 290h1v1h-1zM445 291h1v1h-1zM450 300h1v1h-1zM438 285h1v1h-1zM439 293h2v1h-2zM441 286h1v1h-1zM442 290h2v1h-2zM453 290h1v2h-1zM439 289h1v2h-1zM446 289h2v1h-2zM452 306h1v1h-1zM443 288h2v2h-2zM439 284h2v1h-2zM445 289h1v1h-1zM446 287h1v2h-1zM447 288h1v1h-1zM440 287h2v2h-2zM454 289h1v1h-1zM438 291h1v1h-1zM436 293h1v1h-1zM445 285h1v1h-1zM441 289h1v1h-1zM450 295h1v1h-1zM452 289h1v1h-1zM449 296h1v2h-1zM446 291h1v1h-1zM448 302h1v2h-1zM454 294h2v1h-2zM447 292h1v1h-1zM454 292h2v1h-2zM448 284h1v1h-1zM446 291h2v1h-2zM443 295h1v1h-1zM437 300h1v2h-1zM445 279h1v1h-1zM440 291h2v1h-2zM444 289h1v1h-1zM440 297h1v1h-1zM446 300h1v1h-1zM446 287h1v1h-1zM447 299h1v1h-1zM443 292h2v1h-2zM451 289h1v1h-1zM441 289h1v2h-1zM445 293h2v1h-2zM428 291h1v1h-1zM441 287h1v1h-1zM451 285h1v2h-1zM448 291h1v1h-1zM449 287h1v2h-1zM445 296h1v1h-1zM444 281h2v1h-2zM441 294h1v1h-1zM440 283h1v1h-1zM448 294h2v1h-2zM440 290h2v1h-2zM446 293h1v2h-1zM441 296h1v1h-1zM443 293h2v1h-2zM448 297h1v1h-1zM446 292h1v2h-1zM443 294h1v2h-1zM448 288h1v1h-1zM449 291h1v2h-1zM447 305h1v1h-1zM448 291h2v1h-2zM448 290h1v2h-1zM436 286h1v1h-1zM440 284h2v2h-2zM441 288h1v2h-1zM448 294h1v2h-1zM441 280h1v1h-1zM442 283h1v1h-1zM443 290h1v1h-1zM439 279h1v2h-1zM444 291h1v1h-1zM451 292h1v2h-1zM447 278h1v1h-1zM450 294h1v1h-1zM443 284h2v1h-2zM439 289h1v1h-1zM447 290h1v1h-1zM443 283h2v1h-2zM444 295h1v1h-1zM454 295h2v2h-2zM441 284h1v1h-1zM442 295h1v1h-1zM457 290h1v1h-1zM450 300h1v2h-1zM447 297h2v1h-2zM445 287h2v2h-2zM449 282h1v1h-1zM453 290h2v1h-2zM445 284h1v1h-1zM442 282h1v2h-1zM444 290h2v1h-2zM439 296h1v1h-1zM437 291h1v2h-1zM453 294h1v1h-1zM442 287h1v2h-1zM442 297h1v1h-1zM445 287h1v1h-1zM439 280h2v1h-2zM447 298h1v1h-1zM444 285h1v1h-1zM448 294h1v1h-1zM442 290h1v1h-1zM443 286h1v1h-1zM437 285h1v1h-1zM438 291h2v1h-2zM447 286h1v2h-1zM451 293h2v2h-2zM451 291h2v2h-2zM435 291h1v1h-1zM445 295h1v1h-1zM451 294h1v1h-1zM439 292h1v1h-1zM446 286h1v1h-1zM437 303h1v1h-1zM446 290h1v1h-1zM442 279h1v1h-1zM449 301h1v2h-1zM450 292h1v1h-1zM442 292h2v2h-2zM440 280h1v1h-1zM451 292h2v1h-2zM446 279h2v1h-2zM438 297h1v1h-1zM442 280h1v1h-1zM445 290h1v2h-1zM434 285h1v1h-1zM435 289h1v1h-1zM442 285h1v1h-1zM441 284h2v1h-2zM439 291h1v1h-1zM445 290h2v2h-2zM454 299h1v1h-1zM446 288h1v1h-1zM443 286h2v2h-2zM445 292h2v2h-2zM443 287h1v1h-1zM439 284h1v2h-1zM433 283h1v2h-1zM431 284h2v2h-2zM431 283h1v1h-1zM430 282h1v1h-1zM434 285h1v2h-1zM424 286h1v1h-1zM426 288h2v1h-2zM423 285h1v1h-1zM431 280h1v1h-1zM441 288h2v1h-2zM427 288h1v1h-1zM427 282h1v1h-1zM425 288h1v1h-1zM431 282h1v1h-1zM430 288h1v1h-1zM429 286h1v1h-1zM429 291h1v2h-1zM425 283h1v1h-1zM432 279h1v1h-1zM425 281h1v2h-1zM431 287h1v1h-1zM428 285h1v1h-1zM431 289h1v1h-1zM428 288h1v1h-1zM430 286h2v1h-2zM426 287h1v1h-1zM432 282h1v1h-1zM433 282h1v1h-1zM433 288h1v1h-1zM429 284h1v1h-1zM439 284h1v1h-1zM427 283h1v1h-1zM434 286h1v1h-1zM433 284h1v1h-1zM431 286h1v1h-1zM435 286h2v1h-2zM422 285h1v1h-1zM424 278h2v1h-2zM430 288h2v1h-2zM436 283h1v1h-1zM428 285h1v2h-1zM430 285h1v1h-1zM435 286h1v1h-1zM430 288h2v2h-2zM430 280h1v1h-1zM430 285h1v2h-1zM430 280h1v2h-1zM433 286h1v1h-1zM433 287h1v1h-1zM421 286h1v1h-1zM433 283h1v1h-1zM432 283h1v1h-1zM434 283h1v2h-1zM440 288h1v1h-1zM424 285h1v1h-1zM430 285h2v1h-2zM428 284h1v1h-1zM427 285h1v1h-1zM398 233h1v1h-1zM398 235h1v1h-1zM400 239h2v2h-2zM400 232h1v1h-1zM399 238h1v1h-1zM403 234h1v1h-1zM398 238h1v1h-1zM400 225h1v2h-1zM401 236h1v1h-1zM399 235h1v1h-1zM400 239h1v1h-1zM399 228h1v1h-1zM400 236h1v2h-1zM398 231h1v1h-1zM399 235h2v2h-2zM397 234h1v1h-1zM400 231h2v1h-2zM400 237h1v1h-1zM400 233h1v1h-1zM400 231h1v2h-1zM398 239h1v1h-1zM398 234h1v1h-1zM400 240h1v2h-1zM448 245h1v1h-1zM456 239h1v1h-1zM428 250h1v1h-1zM464 253h1v1h-1zM441 254h1v1h-1zM440 250h1v2h-1zM439 246h1v2h-1zM429 247h2v1h-2zM455 259h2v1h-2zM444 252h1v1h-1zM432 251h1v1h-1zM435 253h1v1h-1zM443 248h1v1h-1zM439 247h1v2h-1zM432 255h1v1h-1zM464 255h1v1h-1zM436 255h1v2h-1zM415 258h1v1h-1zM441 249h1v1h-1zM461 247h1v1h-1zM439 250h1v1h-1zM443 256h1v1h-1zM436 247h1v1h-1zM443 236h2v1h-2zM447 238h1v1h-1zM448 244h2v1h-2zM438 259h1v1h-1zM443 253h1v1h-1zM440 253h1v1h-1zM436 254h1v1h-1zM460 247h1v1h-1zM428 253h1v1h-1zM443 254h1v1h-1zM433 249h2v1h-2zM439 246h1v1h-1zM437 247h1v1h-1zM431 249h1v1h-1zM431 246h1v1h-1zM440 256h1v1h-1zM430 257h1v1h-1zM452 265h1v1h-1zM436 256h1v1h-1zM441 252h1v1h-1zM433 247h2v1h-2zM422 250h1v2h-1zM440 243h2v2h-2zM448 248h2v1h-2zM444 244h2v2h-2zM467 241h1v2h-1zM434 237h1v1h-1zM440 251h1v1h-1zM446 256h1v1h-1zM425 257h1v1h-1zM454 259h2v1h-2zM437 257h1v1h-1zM427 250h2v1h-2zM455 251h1v1h-1zM434 252h1v1h-1zM431 254h1v1h-1zM461 269h1v1h-1zM461 274h1v1h-1zM461 276h1v1h-1zM462 269h1v1h-1zM462 275h1v2h-1zM460 269h1v1h-1zM459 271h1v2h-1zM461 277h1v1h-1zM458 275h1v1h-1zM463 263h1v1h-1zM458 278h1v1h-1zM459 264h1v1h-1zM459 280h1v1h-1zM460 274h1v2h-1zM458 288h1v1h-1zM459 269h1v1h-1zM459 275h1v1h-1zM459 268h1v1h-1zM462 274h1v2h-1zM458 281h1v2h-1zM460 274h1v1h-1zM461 267h2v1h-2zM461 282h1v1h-1zM460 284h1v1h-1zM462 275h1v1h-1zM461 275h1v1h-1zM461 267h1v2h-1zM463 276h1v1h-1zM460 278h1v1h-1zM459 281h1v1h-1zM463 279h1v1h-1zM463 275h1v1h-1zM459 277h1v1h-1zM460 281h2v1h-2zM460 280h2v1h-2zM463 277h1v1h-1zM461 280h1v1h-1zM459 279h1v1h-1zM461 270h2v1h-2zM462 273h1v1h-1zM460 279h1v1h-1zM460 276h2v1h-2zM460 278h2v1h-2zM461 278h1v1h-1zM458 279h1v1h-1zM464 256h1v1h-1zM464 258h1v2h-1zM473 260h1v1h-1zM473 257h1v1h-1zM468 261h1v1h-1zM470 257h1v1h-1zM464 258h1v1h-1zM466 259h1v1h-1zM465 261h1v1h-1zM464 257h1v1h-1zM471 261h1v1h-1zM466 262h1v1h-1zM462 261h1v2h-1zM475 256h1v1h-1zM470 260h2v2h-2zM465 260h2v2h-2zM467 257h1v1h-1zM470 258h1v1h-1zM467 261h1v2h-1zM466 256h1v1h-1zM461 259h1v1h-1zM467 256h2v2h-2zM474 257h1v1h-1zM462 258h1v2h-1zM466 257h1v1h-1zM472 255h1v1h-1zM472 256h2v1h-2zM475 258h1v1h-1zM470 262h2v1h-2zM487 258h2v1h-2zM493 249h1v1h-1zM495 251h1v2h-1zM486 253h2v2h-2zM490 254h2v1h-2zM488 256h1v1h-1zM492 252h2v1h-2zM491 261h2v1h-2zM489 252h1v1h-1zM489 258h1v2h-1zM491 256h2v1h-2zM490 250h1v1h-1zM488 253h2v1h-2zM491 251h2v1h-2zM489 251h2v1h-2zM486 251h1v2h-1zM489 247h1v1h-1zM492 251h1v1h-1zM490 256h1v1h-1zM491 256h1v1h-1zM493 253h1v1h-1zM489 251h1v1h-1zM495 255h1v1h-1zM491 248h2v1h-2zM491 262h1v1h-1zM493 260h1v1h-1zM496 249h2v1h-2zM496 250h1v2h-1zM492 257h1v1h-1zM493 243h1v1h-1zM493 261h2v1h-2zM496 259h1v2h-1zM489 250h2v1h-2zM490 258h1v1h-1zM493 250h1v1h-1zM496 260h2v1h-2zM498 246h1v1h-1zM490 253h1v1h-1zM490 252h2v1h-2zM493 259h1v1h-1zM498 252h1v1h-1zM492 259h1v1h-1zM495 246h1v1h-1zM491 262h1v2h-1zM489 256h1v1h-1zM488 244h2v1h-2zM491 254h1v2h-1zM490 259h1v2h-1zM497 242h1v1h-1zM497 258h2v2h-2zM489 261h1v1h-1zM489 256h2v2h-2zM496 262h1v2h-1zM494 254h2v2h-2zM489 259h1v1h-1zM487 252h1v1h-1zM493 256h1v1h-1zM492 249h1v2h-1zM513 259h1v2h-1zM508 254h1v1h-1zM510 252h1v1h-1zM507 247h2v1h-2zM511 249h1v1h-1zM507 253h1v2h-1zM514 253h1v1h-1zM512 246h1v1h-1zM508 248h1v1h-1zM511 251h1v1h-1zM511 254h1v1h-1zM510 254h1v1h-1zM512 251h1v1h-1zM514 262h1v1h-1zM508 266h2v2h-2zM513 254h1v1h-1zM508 253h1v2h-1zM507 254h1v1h-1zM510 259h1v1h-1zM516 257h1v1h-1zM509 264h1v1h-1zM507 259h1v1h-1zM512 256h1v1h-1zM515 246h2v1h-2zM512 244h1v1h-1zM515 253h1v1h-1zM507 253h1v1h-1zM513 268h2v1h-2zM509 259h1v2h-1zM513 257h1v1h-1zM513 246h1v1h-1zM512 260h1v1h-1zM509 249h1v1h-1zM514 254h1v1h-1zM513 255h1v1h-1zM509 243h1v1h-1zM510 255h1v1h-1zM509 249h1v2h-1zM514 256h1v1h-1zM511 241h2v1h-2zM510 247h1v2h-1zM508 266h1v1h-1zM513 244h1v1h-1zM510 241h1v1h-1zM510 258h1v1h-1zM512 258h2v1h-2zM509 258h1v1h-1zM510 251h2v1h-2zM511 265h2v1h-2zM512 264h1v1h-1zM514 251h2v1h-2zM512 247h1v1h-1zM513 247h1v2h-1zM511 267h1v1h-1zM510 257h1v1h-1zM510 232h1v1h-1zM514 261h1v1h-1zM511 253h1v1h-1zM511 252h1v1h-1zM511 261h2v1h-2zM510 246h2v1h-2zM513 269h1v1h-1zM510 248h1v1h-1zM507 265h1v1h-1zM513 248h1v1h-1zM508 260h1v1h-1zM511 250h1v1h-1zM509 244h1v1h-1zM511 247h2v1h-2zM511 239h1v2h-1zM512 230h1v1h-1zM510 264h1v1h-1zM511 264h1v2h-1zM513 232h1v2h-1zM511 268h1v1h-1zM510 250h1v1h-1zM512 268h1v1h-1zM510 257h1v2h-1zM513 242h1v1h-1zM512 272h1v1h-1zM511 252h2v1h-2zM510 246h1v1h-1zM508 266h1v2h-1zM510 249h1v1h-1zM511 262h1v1h-1zM512 267h2v1h-2zM509 280h1v1h-1zM506 255h1v1h-1zM510 243h1v1h-1zM507 245h1v2h-1zM509 265h1v1h-1zM510 255h1v2h-1zM512 254h1v1h-1zM512 251h2v1h-2zM512 256h2v1h-2zM513 258h2v2h-2zM511 268h2v1h-2zM513 256h1v1h-1zM513 253h1v1h-1zM516 247h1v1h-1zM512 253h1v1h-1zM509 245h1v1h-1zM509 261h1v1h-1zM515 250h1v2h-1zM514 259h1v1h-1zM510 275h1v1h-1zM515 258h1v1h-1zM514 254h2v1h-2zM508 250h2v1h-2zM515 251h2v1h-2zM513 252h1v1h-1zM512 236h2v1h-2zM511 263h1v2h-1zM509 248h1v1h-1zM512 252h2v1h-2zM511 278h1v2h-1zM508 280h1v1h-1zM515 274h1v1h-1zM497 274h1v2h-1zM519 274h1v2h-1zM532 278h1v1h-1zM509 274h1v2h-1zM518 274h1v1h-1zM514 279h2v1h-2zM508 276h1v1h-1zM525 277h1v1h-1zM516 277h1v1h-1zM513 276h2v1h-2zM522 279h2v1h-2zM512 278h1v1h-1zM506 278h1v1h-1zM509 278h1v1h-1zM513 278h1v1h-1zM508 275h1v1h-1zM521 278h1v1h-1zM510 276h1v1h-1zM518 278h1v1h-1zM520 278h1v1h-1zM515 277h1v1h-1zM527 279h1v1h-1zM518 273h2v1h-2zM514 277h1v1h-1zM507 277h1v1h-1zM516 279h1v1h-1zM522 280h2v1h-2zM508 278h1v1h-1zM522 277h1v1h-1zM502 278h2v1h-2zM522 278h1v2h-1zM519 275h1v1h-1zM521 275h1v1h-1zM503 276h2v1h-2zM515 275h1v2h-1zM514 278h1v1h-1zM519 277h1v1h-1zM516 276h1v1h-1zM513 275h1v1h-1zM527 276h2v1h-2zM513 277h1v1h-1zM521 276h1v1h-1zM504 278h2v1h-2zM518 276h1v1h-1zM523 277h1v1h-1zM509 275h1v1h-1zM521 276h1v2h-1zM513 276h1v1h-1zM509 276h1v1h-1zM520 277h1v1h-1zM517 277h1v1h-1zM500 277h1v1h-1zM517 276h1v2h-1zM518 277h1v1h-1zM514 276h2v1h-2zM515 276h1v2h-1zM513 274h1v1h-1zM517 276h2v1h-2zM522 276h2v1h-2zM525 274h1v1h-1zM519 278h1v1h-1zM518 274h2v1h-2zM522 278h1v1h-1zM513 278h2v1h-2zM526 279h2v1h-2zM515 275h1v1h-1zM502 277h1v1h-1zM512 276h1v1h-1zM513 279h1v1h-1zM517 276h1v1h-1zM509 277h1v1h-1zM508 276h1v2h-1zM505 269h1v1h-1zM506 263h1v1h-1zM508 271h1v1h-1zM505 268h1v1h-1zM508 274h2v1h-2zM504 276h1v1h-1zM508 270h1v1h-1zM506 272h1v1h-1zM506 273h1v1h-1zM505 273h1v1h-1zM507 271h1v1h-1zM505 272h1v1h-1zM505 264h1v1h-1zM510 271h1v2h-1zM503 267h1v1h-1zM506 267h1v1h-1zM504 273h1v1h-1zM505 269h2v1h-2zM506 274h1v2h-1zM507 261h1v1h-1zM508 274h1v1h-1zM510 271h1v1h-1zM509 272h1v2h-1zM505 270h1v1h-1zM507 281h2v1h-2zM506 268h1v1h-1zM506 263h1v2h-1zM507 272h1v1h-1zM503 259h1v1h-1zM506 264h2v1h-2zM508 277h1v1h-1zM506 260h2v1h-2zM507 274h2v1h-2zM504 283h1v2h-1zM507 269h1v1h-1zM506 277h1v1h-1zM493 278h2v2h-2zM499 284h1v2h-1zM471 273h1v1h-1zM490 281h2v1h-2zM469 274h1v1h-1zM496 282h1v1h-1zM492 278h1v1h-1zM480 284h1v1h-1zM492 284h1v1h-1zM493 283h1v1h-1zM478 277h2v1h-2zM484 280h2v2h-2zM503 284h1v1h-1zM478 292h1v1h-1zM486 291h1v1h-1zM478 285h1v1h-1zM490 289h1v1h-1zM482 282h1v1h-1zM494 280h2v1h-2zM481 275h1v2h-1zM491 278h1v1h-1zM505 278h2v1h-2zM497 285h1v1h-1zM493 281h2v2h-2zM474 279h1v2h-1zM498 284h1v1h-1zM481 281h2v1h-2zM470 280h1v1h-1zM479 275h1v1h-1zM481 282h1v1h-1zM492 291h1v1h-1zM489 282h1v2h-1zM499 281h1v1h-1zM482 281h1v1h-1zM469 276h2v2h-2zM460 289h2v1h-2zM479 279h1v1h-1zM478 282h1v1h-1zM488 280h1v1h-1zM477 287h2v1h-2zM495 279h1v1h-1zM489 281h1v1h-1zM485 285h1v1h-1zM489 284h1v1h-1zM459 289h1v1h-1zM489 291h1v1h-1zM491 277h1v1h-1zM494 288h1v2h-1zM466 280h1v1h-1zM467 286h1v1h-1zM491 274h1v1h-1zM480 282h1v2h-1zM472 280h1v1h-1zM507 281h1v1h-1zM482 275h1v2h-1zM490 284h2v1h-2zM498 281h2v1h-2zM484 278h2v1h-2zM471 285h1v1h-1zM494 277h1v1h-1zM481 277h1v1h-1zM486 288h1v1h-1zM459 282h2v1h-2zM471 280h1v2h-1zM479 290h1v1h-1zM486 290h1v1h-1zM489 284h1v2h-1zM495 287h2v1h-2zM475 280h1v1h-1zM481 291h1v1h-1zM504 292h1v2h-1zM467 290h1v1h-1zM511 294h1v1h-1zM497 298h1v1h-1zM493 295h1v1h-1zM470 291h1v1h-1zM497 292h1v1h-1zM485 291h1v1h-1zM485 292h1v1h-1zM508 287h1v2h-1zM518 295h1v1h-1zM492 298h2v1h-2zM491 288h1v1h-1zM475 293h1v2h-1zM525 283h1v1h-1zM474 305h1v2h-1zM486 294h1v2h-1zM508 290h1v1h-1zM489 292h1v1h-1zM494 292h1v1h-1zM485 295h2v2h-2zM498 297h1v2h-1zM500 291h1v2h-1zM490 287h1v1h-1zM495 294h2v2h-2zM494 288h1v1h-1zM481 290h1v1h-1zM492 295h1v2h-1zM475 301h2v1h-2zM496 290h1v1h-1zM497 289h1v1h-1zM498 289h1v1h-1zM483 293h1v1h-1zM481 299h1v2h-1zM489 301h1v1h-1zM497 287h1v1h-1zM495 294h1v2h-1zM482 292h1v1h-1zM490 294h1v1h-1zM518 289h1v1h-1zM479 292h2v1h-2zM503 294h1v1h-1zM499 292h1v1h-1zM477 296h2v2h-2zM493 292h1v1h-1zM477 297h2v1h-2zM491 289h1v1h-1zM513 301h1v1h-1zM504 295h1v1h-1zM474 298h1v2h-1zM492 288h1v1h-1zM502 292h1v1h-1zM480 295h1v2h-1zM511 295h1v1h-1zM493 296h1v1h-1zM494 292h2v1h-2zM504 301h1v1h-1zM487 293h1v1h-1zM497 294h2v1h-2zM474 294h1v1h-1zM498 294h1v1h-1zM490 298h1v1h-1zM494 293h1v1h-1zM500 300h2v1h-2zM475 283h1v1h-1zM481 293h1v1h-1zM490 285h1v1h-1zM486 296h1v1h-1zM475 294h1v1h-1zM500 294h1v2h-1zM487 288h1v1h-1zM480 295h1v1h-1zM475 286h2v1h-2zM517 289h2v2h-2zM515 295h1v1h-1zM508 303h1v1h-1zM491 291h1v1h-1zM508 294h1v1h-1zM508 330h2v1h-2zM500 313h1v1h-1zM499 320h1v1h-1zM494 325h1v1h-1zM512 321h1v1h-1zM501 316h1v1h-1zM502 318h2v1h-2zM492 325h1v1h-1zM499 322h2v1h-2zM499 330h1v2h-1zM500 315h2v1h-2zM501 328h1v2h-1zM498 328h1v1h-1zM488 323h2v2h-2zM497 325h1v1h-1zM502 320h1v2h-1zM497 332h2v2h-2zM489 318h1v1h-1zM496 317h1v2h-1zM500 321h1v1h-1zM501 323h1v2h-1zM510 320h1v1h-1zM500 323h1v1h-1zM489 324h1v2h-1zM509 315h1v1h-1zM496 323h1v1h-1zM503 323h1v2h-1zM493 326h1v1h-1zM502 319h2v2h-2zM501 322h1v1h-1zM499 323h1v1h-1zM505 322h1v1h-1zM505 319h1v2h-1zM502 325h2v1h-2zM495 323h2v1h-2zM510 314h1v1h-1zM500 311h1v1h-1zM489 314h1v1h-1zM500 330h1v1h-1zM509 323h1v1h-1zM497 326h1v1h-1zM506 324h1v1h-1zM491 324h1v1h-1zM496 322h1v1h-1zM498 325h1v1h-1zM496 320h1v1h-1zM498 315h1v1h-1zM506 323h1v1h-1zM490 320h1v1h-1zM500 319h1v2h-1zM497 324h2v1h-2zM509 324h1v1h-1zM498 326h2v2h-2zM505 312h2v1h-2zM498 320h2v1h-2zM500 315h1v2h-1zM494 324h1v2h-1zM513 323h2v2h-2zM501 324h1v1h-1zM501 320h1v1h-1zM494 332h1v1h-1zM499 315h1v1h-1zM503 321h1v1h-1zM500 326h1v2h-1zM475 322h1v1h-1zM502 325h1v1h-1zM496 332h1v1h-1zM493 323h2v2h-2zM506 321h1v1h-1zM499 321h1v1h-1zM492 318h1v2h-1zM494 323h1v1h-1zM503 324h1v1h-1zM500 318h1v2h-1zM499 323h2v1h-2zM486 324h1v1h-1zM510 324h1v1h-1zM490 323h1v2h-1zM493 317h1v1h-1zM499 327h1v2h-1zM504 312h1v1h-1zM489 323h1v1h-1zM488 327h1v2h-1zM499 325h1v1h-1zM497 319h2v1h-2zM493 317h2v1h-2zM493 315h2v1h-2zM492 322h1v1h-1zM516 327h1v1h-1zM495 322h2v1h-2zM490 326h1v2h-1zM491 321h1v2h-1zM500 324h1v1h-1zM504 324h1v2h-1zM507 324h1v1h-1zM492 320h1v1h-1zM503 325h1v2h-1zM497 319h1v1h-1zM511 319h1v2h-1zM489 327h2v1h-2zM500 322h1v2h-1zM506 317h1v1h-1zM492 318h1v1h-1zM512 322h1v1h-1zM498 321h1v1h-1zM502 321h1v1h-1zM495 325h1v1h-1zM490 329h1v1h-1zM498 322h1v2h-1zM503 321h2v1h-2zM507 319h1v1h-1zM503 317h1v2h-1zM505 321h1v1h-1zM507 324h1v2h-1zM491 322h1v1h-1zM508 324h1v1h-1zM502 323h1v1h-1zM507 325h1v1h-1zM489 321h1v2h-1zM504 322h1v1h-1zM493 321h2v2h-2zM494 322h1v1h-1zM523 320h1v1h-1zM502 323h1v2h-1zM495 310h1v1h-1zM494 327h1v1h-1zM496 324h1v1h-1zM499 324h2v1h-2zM496 312h2v2h-2zM492 321h1v1h-1zM493 316h1v1h-1zM511 324h1v1h-1zM485 323h2v1h-2zM500 317h1v2h-1zM508 318h1v1h-1zM513 326h1v1h-1zM510 313h1v1h-1zM491 314h2v1h-2zM496 322h1v2h-1zM515 327h1v1h-1zM496 328h1v1h-1zM488 326h2v1h-2zM488 328h1v1h-1zM503 323h2v2h-2zM506 318h1v1h-1zM503 314h1v2h-1zM503 328h2v1h-2zM503 315h1v1h-1zM494 327h1v2h-1zM501 321h1v1h-1zM507 314h1v1h-1zM495 326h1v1h-1zM495 331h1v2h-1zM490 324h1v1h-1zM503 315h1v2h-1zM501 323h1v1h-1zM505 325h1v2h-1zM502 317h1v1h-1zM483 318h1v1h-1zM507 319h1v2h-1zM502 319h1v1h-1zM500 320h1v1h-1zM506 316h1v1h-1zM505 320h2v1h-2zM483 323h2v1h-2zM498 317h1v1h-1zM486 317h1v1h-1zM491 321h2v1h-2zM501 325h1v2h-1zM489 322h1v2h-1zM517 332h1v1h-1zM496 326h2v1h-2zM509 325h1v1h-1zM502 330h2v1h-2zM505 326h1v1h-1zM498 318h1v1h-1zM514 321h1v1h-1zM508 321h1v1h-1zM510 322h1v1h-1zM507 322h2v2h-2zM497 325h1v2h-1zM495 321h1v1h-1zM498 326h1v1h-1zM486 315h1v1h-1zM498 319h1v2h-1zM494 319h1v1h-1zM516 324h1v1h-1zM510 314h1v2h-1zM493 323h1v2h-1zM501 326h1v2h-1zM499 324h1v1h-1zM494 324h1v1h-1zM495 320h1v1h-1zM486 325h1v1h-1zM493 321h1v1h-1zM490 322h1v1h-1zM493 323h1v1h-1zM492 326h1v2h-1zM507 328h1v1h-1zM513 321h2v1h-2zM492 326h2v1h-2zM509 319h1v1h-1zM491 315h1v2h-1zM489 317h1v1h-1zM491 320h1v1h-1zM511 327h1v1h-1zM482 319h2v1h-2zM503 323h1v1h-1zM485 318h1v1h-1zM500 319h2v1h-2zM515 322h1v1h-1zM500 322h1v1h-1zM497 324h1v1h-1zM513 329h1v1h-1zM482 318h1v1h-1zM494 322h2v1h-2zM503 318h1v2h-1zM507 316h1v1h-1zM500 322h2v2h-2zM496 319h1v1h-1zM503 326h2v1h-2zM485 330h1v1h-1zM523 319h2v1h-2zM507 329h1v2h-1zM498 319h1v1h-1zM498 320h1v1h-1zM501 315h1v1h-1zM506 317h1v2h-1zM484 327h1v1h-1zM490 320h2v1h-2zM505 326h1v2h-1zM497 318h1v2h-1zM495 318h1v1h-1zM507 333h1v2h-1zM502 313h1v2h-1zM494 326h1v1h-1zM501 317h1v1h-1zM510 318h1v1h-1zM487 321h1v1h-1zM509 316h1v2h-1zM502 318h1v2h-1zM524 316h1v1h-1zM495 315h1v1h-1zM495 318h2v2h-2zM495 321h2v1h-2zM501 318h1v1h-1zM497 311h1v2h-1zM508 314h1v1h-1zM507 322h1v1h-1zM490 322h2v1h-2zM509 319h1v2h-1zM508 329h1v1h-1zM499 330h1v1h-1zM507 318h1v2h-1zM491 325h1v1h-1zM512 326h1v2h-1zM506 322h2v1h-2zM489 322h1v1h-1zM495 322h1v1h-1zM481 323h1v1h-1zM519 318h1v1h-1zM481 315h1v1h-1zM492 317h2v2h-2zM487 329h2v1h-2zM484 319h2v1h-2zM504 320h1v1h-1zM488 320h1v2h-1zM493 315h1v1h-1zM506 322h1v1h-1zM508 317h1v1h-1zM492 326h1v1h-1zM504 321h1v1h-1zM513 327h1v1h-1zM505 317h1v2h-1zM522 312h2v1h-2zM527 316h1v1h-1zM522 305h1v1h-1zM503 316h1v1h-1zM536 312h1v1h-1zM513 311h2v1h-2zM509 311h1v1h-1zM511 312h1v1h-1zM524 317h1v1h-1zM512 318h1v1h-1zM508 313h1v2h-1zM522 314h1v1h-1zM516 321h1v1h-1zM520 308h1v1h-1zM513 313h2v1h-2zM519 311h1v1h-1zM517 306h1v2h-1zM525 316h1v1h-1zM517 308h2v1h-2zM519 317h1v2h-1zM500 312h1v1h-1zM495 313h2v2h-2zM515 305h1v1h-1zM509 312h1v1h-1zM515 306h1v1h-1zM520 318h1v1h-1zM514 311h1v1h-1zM512 307h1v1h-1zM508 315h1v1h-1zM513 315h2v1h-2zM516 317h2v1h-2zM518 313h1v1h-1zM517 316h2v1h-2zM527 318h1v1h-1zM511 322h1v1h-1zM520 316h1v2h-1zM511 307h1v2h-1zM525 314h1v1h-1zM517 310h1v1h-1zM520 312h1v2h-1zM518 309h1v1h-1zM522 312h1v1h-1zM524 316h1v2h-1zM523 309h1v2h-1zM524 318h1v2h-1zM516 315h1v1h-1zM531 302h1v2h-1zM518 304h1v1h-1zM525 311h1v1h-1zM518 317h1v2h-1zM512 316h1v1h-1zM511 311h1v2h-1zM507 312h1v1h-1zM513 310h1v1h-1zM513 320h2v1h-2zM517 308h1v2h-1zM522 310h1v1h-1zM514 317h2v1h-2zM518 308h2v2h-2zM517 317h1v2h-1zM513 316h1v2h-1zM508 306h1v2h-1zM515 309h1v2h-1zM524 313h1v1h-1zM525 307h1v1h-1zM511 317h2v2h-2zM515 308h1v1h-1zM525 308h1v1h-1zM510 314h2v1h-2zM514 309h1v2h-1zM519 310h1v1h-1zM511 314h1v1h-1zM526 319h1v1h-1zM508 316h1v1h-1zM512 314h1v2h-1zM507 318h1v1h-1zM511 307h1v1h-1zM525 313h1v1h-1zM514 315h1v1h-1zM504 314h1v1h-1zM521 313h2v1h-2zM521 315h1v1h-1zM496 318h1v1h-1zM518 311h1v1h-1zM511 309h1v1h-1zM516 319h1v1h-1zM517 309h2v1h-2zM514 313h2v1h-2zM516 311h1v2h-1zM496 317h1v1h-1zM511 313h1v1h-1zM518 314h1v1h-1zM508 315h1v2h-1zM512 316h2v1h-2zM522 316h1v1h-1zM513 318h1v1h-1zM511 316h1v1h-1zM510 311h1v1h-1zM521 311h1v1h-1zM511 308h1v1h-1zM509 320h1v1h-1zM512 314h2v1h-2zM512 309h1v1h-1zM516 320h1v1h-1zM518 309h2v1h-2zM520 313h1v2h-1zM514 313h1v1h-1zM518 308h1v2h-1zM517 315h2v1h-2zM521 317h1v2h-1zM520 316h1v1h-1zM519 315h2v1h-2zM525 319h1v1h-1zM534 324h1v1h-1zM528 320h1v2h-1zM531 320h1v1h-1zM525 318h1v2h-1zM533 324h1v1h-1zM536 316h1v1h-1zM528 319h1v2h-1zM527 321h1v1h-1zM528 324h1v1h-1zM531 322h1v1h-1zM529 322h2v1h-2zM536 314h1v1h-1zM530 318h1v1h-1zM529 318h1v2h-1zM528 317h1v1h-1zM531 319h1v2h-1zM533 319h1v2h-1zM529 321h1v1h-1zM524 322h1v1h-1zM527 323h1v2h-1zM531 316h1v1h-1zM531 323h2v1h-2zM532 324h1v1h-1zM526 321h1v2h-1zM529 318h1v1h-1zM529 324h1v1h-1zM527 323h1v1h-1zM529 320h1v1h-1zM530 319h1v1h-1zM523 318h2v1h-2zM528 326h2v1h-2zM531 317h2v2h-2zM526 322h1v1h-1zM531 326h1v1h-1zM532 323h1v1h-1zM536 319h1v1h-1zM533 318h1v1h-1zM524 322h1v2h-1zM528 318h1v1h-1zM529 325h1v1h-1zM533 315h1v1h-1zM529 322h1v1h-1zM525 323h1v1h-1zM529 321h2v1h-2zM531 311h1v1h-1zM534 321h1v2h-1zM532 319h1v1h-1zM536 323h1v2h-1zM526 321h1v1h-1zM481 308h1v1h-1zM480 302h1v1h-1zM491 300h1v1h-1zM485 305h1v1h-1zM487 305h2v1h-2zM484 302h1v1h-1zM478 306h1v1h-1zM479 302h2v1h-2zM486 305h1v1h-1zM480 303h1v1h-1zM481 303h1v1h-1zM483 301h1v1h-1zM486 306h1v1h-1zM483 300h2v1h-2zM483 304h1v1h-1zM478 304h1v1h-1zM485 303h1v1h-1zM477 305h1v1h-1zM477 306h1v1h-1zM484 306h1v1h-1zM489 303h1v1h-1zM479 303h1v1h-1zM475 306h1v1h-1zM479 306h1v1h-1zM478 307h1v1h-1zM486 305h2v1h-2zM482 306h1v1h-1zM482 303h2v1h-2zM482 305h1v1h-1zM486 301h2v1h-2zM481 307h1v1h-1zM479 305h1v1h-1zM537 283h1v1h-1zM535 283h2v1h-2zM537 285h1v1h-1zM535 281h1v1h-1zM541 282h1v1h-1zM541 285h1v1h-1zM541 283h2v1h-2zM536 286h1v1h-1zM534 284h1v1h-1zM538 282h1v2h-1zM536 280h1v1h-1zM542 282h2v1h-2zM540 286h1v2h-1zM536 284h1v1h-1zM544 282h1v1h-1zM540 283h2v2h-2zM542 284h1v1h-1zM537 286h1v1h-1zM538 282h1v1h-1zM535 283h1v1h-1zM542 286h1v1h-1zM541 283h1v1h-1zM541 288h1v1h-1zM539 283h2v1h-2zM539 282h1v1h-1zM539 283h1v1h-1zM538 280h1v1h-1zM539 285h1v1h-1zM538 283h1v1h-1zM544 283h2v1h-2zM534 282h1v1h-1zM536 283h1v1h-1zM546 286h2v2h-2zM536 282h1v1h-1zM538 283h1v2h-1zM539 278h1v2h-1zM538 285h1v1h-1zM543 281h1v1h-1zM539 286h2v1h-2zM539 284h2v1h-2zM540 285h2v1h-2zM539 284h1v1h-1zM542 283h1v1h-1zM542 282h1v1h-1zM537 282h1v2h-1zM536 283h2v1h-2zM540 283h1v1h-1zM540 289h1v1h-1zM542 280h1v2h-1zM537 284h1v2h-1zM539 286h1v1h-1zM538 284h2v1h-2zM540 280h1v2h-1zM534 280h1v1h-1zM536 281h1v1h-1zM538 284h1v1h-1zM533 285h2v2h-2zM537 282h2v1h-2zM537 287h1v2h-1zM546 291h1v1h-1zM546 286h1v1h-1zM548 288h1v1h-1zM545 284h1v1h-1zM542 287h1v1h-1zM542 290h1v1h-1zM547 288h1v1h-1zM547 289h1v1h-1zM548 287h2v1h-2zM546 289h1v1h-1zM549 288h1v1h-1zM549 287h1v1h-1zM546 287h1v1h-1zM548 288h1v2h-1zM543 289h1v1h-1zM548 288h2v1h-2zM545 286h1v1h-1zM546 290h1v1h-1zM549 291h1v1h-1zM547 286h1v1h-1zM548 290h2v1h-2zM547 287h1v1h-1zM548 290h1v1h-1zM548 293h1v1h-1zM562 304h1v2h-1zM562 303h1v1h-1zM564 311h2v1h-2zM565 298h2v1h-2zM565 302h1v1h-1zM563 305h1v1h-1zM560 304h2v1h-2zM561 309h1v1h-1zM556 305h1v1h-1zM558 303h1v1h-1zM561 297h1v1h-1zM564 304h1v1h-1zM561 305h2v2h-2zM563 293h2v1h-2zM561 308h1v1h-1zM557 305h1v1h-1zM557 299h1v1h-1zM556 296h1v2h-1zM565 303h1v1h-1zM556 309h1v1h-1zM564 298h1v2h-1zM567 310h2v1h-2zM578 309h1v1h-1zM559 306h1v2h-1zM575 297h2v1h-2zM562 305h1v1h-1zM556 302h1v1h-1zM560 298h2v1h-2zM564 309h1v1h-1zM569 303h1v1h-1zM574 303h1v1h-1zM560 302h1v1h-1zM569 304h1v1h-1zM565 311h1v1h-1zM562 304h2v1h-2zM566 306h1v1h-1zM568 307h2v1h-2zM562 305h1v2h-1zM561 304h1v1h-1zM558 311h1v2h-1zM563 299h1v1h-1zM565 306h1v2h-1zM572 299h1v1h-1zM561 296h1v1h-1zM570 314h2v1h-2zM555 302h1v1h-1zM561 306h1v1h-1zM573 304h1v2h-1zM563 300h1v1h-1zM562 300h2v2h-2zM558 309h1v1h-1zM571 292h1v1h-1zM558 302h2v1h-2zM557 303h2v1h-2zM560 301h1v1h-1zM564 300h1v1h-1zM562 300h2v1h-2zM559 300h2v1h-2zM562 301h1v1h-1zM556 299h1v1h-1zM563 304h1v1h-1zM567 302h1v1h-1zM559 305h1v1h-1zM565 305h1v1h-1zM556 306h1v1h-1zM565 297h1v1h-1zM563 314h2v1h-2zM565 306h1v1h-1zM563 307h2v2h-2zM564 305h1v1h-1zM567 305h1v1h-1zM558 301h1v1h-1zM553 302h2v1h-2zM556 311h1v1h-1zM567 308h1v1h-1zM570 299h1v1h-1zM575 299h1v1h-1zM562 300h1v2h-1zM567 300h1v1h-1zM562 301h2v1h-2zM548 309h1v1h-1zM563 302h1v1h-1zM566 305h1v1h-1zM572 301h1v1h-1zM567 306h1v1h-1zM559 301h1v1h-1zM560 307h1v1h-1zM576 301h1v1h-1zM550 300h1v2h-1zM570 297h2v1h-2zM561 302h1v1h-1zM567 308h2v1h-2zM562 304h1v1h-1zM578 306h1v1h-1zM553 305h1v1h-1zM566 301h1v1h-1zM565 307h1v1h-1zM568 309h1v2h-1zM572 306h2v1h-2zM563 303h1v1h-1zM569 301h1v1h-1zM559 303h1v1h-1zM571 299h1v1h-1zM568 306h1v1h-1zM575 301h2v1h-2zM568 307h1v1h-1zM568 300h1v1h-1zM564 308h2v1h-2zM552 299h1v1h-1zM545 302h1v1h-1zM570 301h2v2h-2zM567 301h1v1h-1zM564 297h1v1h-1zM561 299h1v1h-1zM571 305h1v1h-1zM567 303h1v1h-1zM571 307h2v1h-2zM557 297h1v1h-1zM551 299h2v1h-2zM559 298h1v1h-1zM564 298h1v1h-1zM558 305h1v1h-1zM558 302h1v1h-1zM559 304h1v1h-1zM560 303h1v1h-1zM571 304h1v1h-1zM568 302h1v2h-1zM563 304h1v2h-1zM564 306h2v1h-2zM570 307h2v2h-2zM567 294h1v1h-1zM563 302h1v2h-1zM554 300h1v1h-1zM570 306h1v1h-1zM564 313h2v1h-2zM566 302h1v1h-1zM563 298h2v1h-2zM560 308h1v1h-1zM556 306h2v1h-2zM557 316h1v1h-1zM555 315h1v1h-1zM551 311h1v1h-1zM558 320h1v1h-1zM558 314h1v2h-1zM549 318h1v1h-1zM559 317h1v2h-1zM556 318h1v1h-1zM565 309h1v1h-1zM562 314h2v1h-2zM562 322h1v2h-1zM561 324h1v1h-1zM561 314h2v1h-2zM552 315h1v1h-1zM550 308h1v1h-1zM565 316h1v1h-1zM561 316h1v1h-1zM560 312h1v1h-1zM558 318h1v1h-1zM555 311h1v2h-1zM558 311h2v1h-2zM557 315h1v1h-1zM559 315h2v1h-2zM560 314h1v1h-1zM558 313h1v1h-1zM558 321h1v1h-1zM556 313h1v1h-1zM556 310h1v2h-1zM557 313h1v1h-1zM555 314h1v1h-1zM555 314h1v2h-1zM549 318h1v2h-1zM561 319h2v1h-2zM559 317h1v1h-1zM552 316h2v1h-2zM562 313h1v1h-1zM558 315h1v1h-1zM559 316h1v1h-1zM555 321h2v1h-2zM555 315h1v2h-1zM561 319h1v1h-1zM560 317h1v1h-1zM561 318h1v1h-1zM554 314h1v1h-1zM553 322h2v1h-2zM558 312h2v1h-2zM562 312h1v1h-1zM560 318h1v1h-1zM556 315h2v1h-2zM560 309h1v1h-1zM562 320h2v1h-2zM555 317h1v1h-1zM550 317h1v1h-1zM556 319h2v1h-2zM551 319h1v1h-1zM559 313h1v2h-1zM562 323h1v1h-1zM580 281h1v1h-1zM583 290h1v1h-1zM580 286h2v1h-2zM584 283h1v2h-1zM582 284h1v1h-1zM575 279h1v1h-1zM566 283h1v1h-1zM584 280h1v1h-1zM589 283h1v1h-1zM574 282h2v1h-2zM578 284h1v1h-1zM574 281h1v1h-1zM580 281h2v1h-2zM573 276h2v1h-2zM569 283h1v1h-1zM564 285h1v1h-1zM575 284h1v1h-1zM583 282h1v1h-1zM573 285h2v1h-2zM572 282h1v1h-1zM585 282h1v1h-1zM569 283h2v1h-2zM578 283h1v1h-1zM575 285h1v2h-1zM585 277h1v1h-1zM577 285h1v1h-1zM584 285h1v2h-1zM578 281h2v1h-2zM577 280h2v2h-2zM580 287h1v1h-1zM584 285h1v1h-1zM582 290h1v2h-1zM575 289h1v1h-1zM573 288h1v1h-1zM574 283h1v1h-1zM582 283h1v1h-1zM585 291h1v1h-1zM558 286h1v1h-1zM580 284h1v1h-1zM585 284h1v1h-1zM574 284h1v1h-1zM574 280h1v1h-1zM567 283h1v1h-1zM576 290h1v1h-1zM563 288h1v1h-1zM571 287h1v1h-1zM579 284h2v1h-2zM575 286h1v2h-1zM589 284h1v1h-1zM582 276h2v1h-2zM582 277h1v2h-1zM565 285h1v1h-1zM570 281h1v1h-1zM588 286h1v1h-1zM579 287h1v1h-1zM576 284h1v2h-1zM573 284h1v1h-1zM586 279h1v2h-1zM588 284h1v1h-1zM576 285h1v1h-1zM577 286h1v1h-1zM574 287h1v1h-1zM579 281h1v1h-1zM571 286h1v1h-1zM575 283h1v1h-1zM585 287h2v1h-2zM578 283h2v1h-2zM569 285h2v1h-2zM571 282h1v1h-1zM576 286h1v1h-1zM580 287h1v2h-1zM579 282h1v2h-1zM582 279h1v1h-1zM568 286h1v1h-1zM579 290h1v1h-1zM595 281h1v2h-1zM576 282h2v1h-2zM595 280h1v1h-1zM591 280h1v2h-1zM599 283h1v1h-1zM590 282h2v1h-2zM597 286h1v1h-1zM607 277h2v1h-2zM601 281h1v1h-1zM588 273h1v1h-1zM604 279h2v1h-2zM585 284h1v2h-1zM591 276h1v1h-1zM603 281h2v2h-2zM589 278h1v1h-1zM587 280h1v1h-1zM608 283h1v1h-1zM580 279h2v1h-2zM596 275h1v1h-1zM595 280h1v2h-1zM588 280h1v1h-1zM589 276h2v1h-2zM596 283h2v2h-2zM602 289h1v1h-1zM587 283h1v1h-1zM594 282h1v1h-1zM589 282h2v1h-2zM588 274h1v1h-1zM598 276h1v1h-1zM597 281h1v1h-1zM601 281h2v2h-2zM589 279h2v1h-2zM596 276h1v1h-1zM586 279h1v1h-1zM599 284h2v1h-2zM596 279h1v1h-1zM593 282h1v2h-1zM587 277h1v1h-1zM586 276h1v2h-1zM594 281h1v2h-1zM590 279h1v1h-1zM591 280h1v1h-1zM589 281h1v1h-1zM587 275h1v1h-1zM592 282h1v1h-1zM588 276h1v1h-1zM597 282h1v1h-1zM596 280h1v2h-1zM595 284h1v1h-1zM593 280h1v1h-1zM602 282h1v1h-1zM590 281h1v1h-1zM597 279h1v1h-1zM590 278h1v1h-1zM601 283h1v1h-1zM595 282h2v2h-2zM587 277h2v1h-2zM577 280h1v1h-1zM595 283h1v1h-1zM590 278h2v1h-2zM594 280h1v1h-1zM592 279h1v1h-1zM598 279h1v1h-1zM581 279h1v2h-1zM583 279h2v1h-2zM602 279h1v1h-1zM593 278h2v1h-2zM586 280h2v1h-2zM589 271h1v2h-1zM591 284h1v2h-1zM599 280h1v1h-1zM590 283h1v1h-1zM597 278h1v1h-1zM585 280h1v1h-1zM602 286h1v1h-1zM587 282h1v1h-1zM586 278h1v2h-1zM582 277h1v1h-1zM589 276h1v1h-1zM600 280h2v1h-2zM586 283h1v1h-1zM575 281h1v1h-1zM594 276h1v1h-1zM596 280h1v1h-1zM592 280h1v1h-1zM590 275h1v1h-1zM595 278h1v1h-1zM591 279h2v1h-2zM600 278h1v1h-1zM605 276h1v1h-1zM587 263h1v1h-1zM581 267h1v1h-1zM585 263h1v1h-1zM581 263h2v1h-2zM587 265h1v1h-1zM586 265h1v1h-1zM582 264h1v1h-1zM588 262h1v1h-1zM590 265h1v1h-1zM585 268h1v1h-1zM586 263h1v1h-1zM589 262h1v2h-1zM581 258h1v1h-1zM579 263h2v1h-2zM585 262h1v2h-1zM588 264h1v1h-1zM584 266h1v1h-1zM592 262h1v2h-1zM586 259h1v1h-1zM582 262h1v2h-1zM588 265h1v2h-1zM584 263h1v1h-1zM581 262h1v1h-1zM586 258h1v1h-1zM585 261h1v1h-1zM579 264h1v1h-1zM586 264h1v1h-1zM584 261h2v1h-2zM580 262h1v1h-1zM585 262h1v1h-1zM581 265h1v1h-1zM590 263h1v1h-1zM584 262h1v1h-1zM582 266h1v2h-1zM592 264h1v1h-1zM584 265h1v1h-1zM592 259h1v1h-1zM589 264h1v1h-1zM588 260h1v1h-1zM578 264h1v1h-1zM579 266h2v1h-2zM582 262h1v1h-1zM584 264h2v2h-2zM575 260h1v2h-1zM588 261h1v1h-1zM583 266h1v1h-1zM588 263h1v1h-1zM580 261h1v1h-1zM590 261h1v1h-1zM590 264h1v1h-1zM581 260h1v1h-1zM576 264h1v1h-1zM583 269h1v1h-1zM583 261h1v2h-1zM583 264h1v1h-1zM574 265h1v1h-1zM596 267h1v1h-1zM596 257h2v1h-2zM602 260h1v1h-1zM591 261h1v1h-1zM595 269h1v2h-1zM601 261h1v1h-1zM596 259h1v1h-1zM598 266h2v1h-2zM598 265h1v1h-1zM597 262h1v1h-1zM600 262h2v1h-2zM599 264h1v1h-1zM603 264h1v1h-1zM594 263h1v1h-1zM600 267h1v2h-1zM596 268h1v1h-1zM600 260h1v1h-1zM602 261h2v1h-2zM596 264h1v1h-1zM597 261h1v1h-1zM597 263h1v1h-1zM603 262h1v1h-1zM601 258h1v1h-1zM601 263h1v1h-1zM598 259h1v1h-1zM595 264h1v1h-1zM599 263h1v1h-1zM602 265h1v2h-1zM599 263h1v2h-1zM601 262h1v1h-1zM600 265h1v1h-1zM604 261h1v2h-1zM601 258h1v2h-1zM602 262h1v1h-1zM597 266h1v1h-1zM598 263h1v2h-1zM600 267h1v1h-1zM599 265h1v2h-1zM596 263h1v1h-1zM603 261h1v1h-1zM601 258h2v2h-2zM592 261h1v1h-1zM593 263h1v1h-1zM593 264h1v1h-1zM596 265h1v1h-1zM600 269h1v1h-1zM612 259h2v1h-2zM607 254h1v1h-1zM610 262h1v1h-1zM612 262h1v2h-1zM613 263h1v1h-1zM609 262h1v1h-1zM610 260h1v1h-1zM613 263h2v1h-2zM611 257h1v2h-1zM609 263h1v1h-1zM612 261h1v1h-1zM609 264h1v2h-1zM607 262h1v1h-1zM611 264h1v2h-1zM606 258h1v1h-1zM610 264h1v1h-1zM607 259h1v1h-1zM607 262h2v1h-2zM610 261h1v2h-1zM606 262h2v1h-2zM612 261h2v1h-2zM614 264h1v1h-1zM609 264h1v1h-1zM611 263h2v1h-2zM611 264h1v1h-1zM611 261h1v1h-1zM615 261h1v1h-1zM609 260h1v1h-1zM607 237h1v1h-1zM614 238h1v1h-1zM606 235h1v2h-1zM598 238h1v2h-1zM609 238h1v1h-1zM612 238h2v1h-2zM593 237h1v1h-1zM602 238h1v1h-1zM613 237h1v1h-1zM608 237h1v2h-1zM592 235h1v1h-1zM618 236h1v1h-1zM621 237h2v1h-2zM603 235h2v1h-2zM596 235h1v1h-1zM592 236h1v1h-1zM593 234h1v2h-1zM595 236h1v1h-1zM618 233h1v1h-1zM604 236h1v1h-1zM595 235h2v1h-2zM607 238h1v1h-1zM595 232h1v1h-1zM597 234h1v1h-1zM601 234h1v1h-1zM620 234h1v1h-1zM599 236h1v1h-1zM604 234h1v1h-1zM602 235h1v1h-1zM596 236h1v1h-1zM612 236h1v1h-1zM590 237h1v1h-1zM609 236h2v1h-2zM608 237h1v1h-1zM606 238h2v1h-2zM614 235h1v1h-1zM598 236h1v1h-1zM582 235h1v1h-1zM594 237h1v1h-1zM595 251h1v1h-1zM568 245h1v1h-1zM573 251h1v1h-1zM598 249h1v1h-1zM586 247h2v2h-2zM587 249h1v1h-1zM590 247h1v1h-1zM592 248h1v1h-1zM578 245h1v1h-1zM585 247h1v1h-1zM590 252h1v2h-1zM575 248h1v1h-1zM577 250h1v1h-1zM600 247h1v1h-1zM594 252h1v1h-1zM586 249h1v1h-1zM574 247h1v1h-1zM604 250h1v1h-1zM602 250h1v1h-1zM572 249h1v1h-1zM587 245h2v1h-2zM599 247h1v1h-1zM591 250h2v1h-2zM591 250h1v1h-1zM596 250h1v1h-1zM591 246h1v1h-1zM585 249h1v1h-1zM586 248h1v1h-1zM567 263h1v1h-1zM557 258h1v1h-1zM563 257h1v1h-1zM536 258h1v2h-1zM568 256h1v1h-1zM559 261h1v1h-1zM543 254h2v1h-2zM547 262h1v1h-1zM553 256h1v1h-1zM552 264h1v1h-1zM555 261h1v1h-1zM553 258h1v1h-1zM552 258h2v2h-2zM563 252h1v1h-1zM548 255h1v1h-1zM546 259h1v1h-1zM547 264h1v1h-1zM573 262h1v1h-1zM559 252h1v1h-1zM571 254h1v1h-1zM560 263h1v1h-1zM539 258h1v1h-1zM546 258h1v2h-1zM552 260h2v1h-2zM559 263h1v1h-1zM561 258h1v1h-1zM561 260h1v1h-1zM548 264h1v1h-1zM552 268h1v1h-1zM525 261h1v1h-1zM551 256h1v2h-1zM553 260h1v1h-1zM570 256h1v2h-1zM548 250h1v2h-1zM549 255h1v1h-1zM557 254h1v1h-1zM575 263h1v1h-1zM548 257h2v1h-2zM551 265h1v2h-1zM534 298h1v1h-1zM538 307h1v1h-1zM536 307h1v2h-1zM532 310h2v2h-2zM537 313h2v1h-2zM529 307h1v1h-1zM530 303h1v2h-1zM534 305h1v1h-1zM532 305h1v1h-1zM530 306h1v1h-1zM533 319h2v1h-2zM533 308h1v1h-1zM534 307h1v1h-1zM537 308h1v1h-1zM536 323h1v1h-1zM536 302h1v1h-1zM528 307h1v1h-1zM532 298h1v1h-1zM531 304h1v2h-1zM533 306h1v1h-1zM538 315h2v1h-2zM532 305h1v2h-1zM533 314h1v1h-1zM537 307h2v2h-2zM533 301h1v1h-1zM538 302h1v1h-1zM531 305h1v1h-1zM534 311h1v1h-1zM538 308h2v1h-2zM535 314h1v2h-1zM531 305h1v2h-1zM534 308h1v1h-1zM533 312h1v1h-1zM532 309h1v1h-1zM531 307h1v1h-1zM534 304h1v1h-1zM538 301h1v2h-1zM537 315h1v1h-1zM532 313h2v1h-2zM539 301h1v1h-1zM535 306h1v1h-1zM532 318h2v1h-2zM530 308h2v1h-2zM535 312h1v1h-1zM533 318h1v2h-1zM536 305h1v1h-1zM534 305h2v1h-2zM533 307h1v1h-1zM369 228h1v1h-1zM369 228h1v2h-1zM370 226h1v1h-1zM370 231h1v2h-1zM370 231h1v1h-1zM371 229h1v1h-1zM370 230h1v1h-1zM368 232h1v1h-1zM461 595h1v2h-1zM471 597h2v1h-2zM461 596h1v1h-1zM469 598h2v2h-2zM471 597h1v1h-1zM466 597h1v2h-1zM470 596h1v1h-1zM465 597h1v1h-1zM474 601h1v1h-1zM471 595h1v2h-1zM469 593h1v1h-1zM472 600h1v1h-1zM470 596h1v2h-1zM471 601h1v1h-1zM473 599h2v1h-2zM470 594h1v2h-1zM464 594h1v1h-1zM472 597h1v2h-1zM473 599h1v1h-1zM480 604h1v1h-1zM467 595h1v1h-1zM467 592h2v1h-2zM469 600h1v2h-1zM460 601h1v1h-1zM476 597h1v1h-1zM485 608h1v1h-1zM489 594h1v2h-1zM491 590h1v1h-1zM486 602h1v1h-1zM488 603h1v1h-1zM489 597h2v1h-2zM487 600h1v1h-1zM488 597h1v1h-1zM482 598h1v1h-1zM489 604h1v1h-1zM489 602h1v1h-1zM485 597h1v1h-1zM485 598h1v1h-1zM486 606h1v2h-1zM489 600h2v1h-2zM485 606h1v1h-1zM482 605h1v1h-1zM483 603h1v1h-1zM486 593h2v2h-2zM487 606h1v1h-1zM487 602h1v2h-1zM490 607h1v1h-1zM492 595h1v1h-1zM489 597h1v1h-1zM487 601h1v1h-1zM483 593h1v1h-1zM485 602h1v1h-1zM490 597h1v1h-1zM490 596h1v1h-1zM481 595h1v1h-1zM483 597h2v2h-2zM488 594h1v1h-1zM487 596h1v1h-1zM484 595h1v2h-1zM478 595h1v1h-1zM483 602h1v1h-1zM487 594h1v1h-1zM486 586h1v1h-1zM485 592h1v1h-1zM485 599h1v1h-1zM485 588h1v1h-1zM487 595h1v1h-1zM486 604h1v1h-1zM763 546h1v1h-1zM766 491h1v2h-1zM820 426h1v1h-1zM731 578h1v1h-1zM788 496h1v1h-1zM711 520h2v1h-2zM776 484h2v1h-2zM768 486h1v1h-1zM800 535h1v1h-1zM801 418h1v1h-1zM764 467h1v1h-1zM764 566h1v1h-1zM757 411h1v1h-1zM789 445h1v1h-1zM756 505h1v1h-1zM805 515h1v2h-1zM835 458h1v1h-1zM872 461h1v2h-1zM786 517h2v1h-2zM755 461h1v1h-1zM858 520h1v1h-1zM798 476h1v2h-1zM790 498h1v2h-1zM787 517h1v1h-1zM844 477h1v1h-1zM844 547h1v1h-1zM853 444h2v2h-2zM828 471h2v1h-2zM768 472h1v1h-1zM786 443h1v1h-1zM764 477h1v1h-1zM818 448h2v1h-2zM755 507h1v1h-1zM753 547h1v1h-1zM792 427h1v1h-1zM799 520h1v1h-1zM776 493h2v1h-2zM757 435h1v1h-1zM816 466h1v2h-1zM759 526h1v1h-1zM784 504h2v1h-2zM777 425h1v1h-1zM804 492h1v1h-1zM751 472h1v1h-1zM751 497h1v1h-1zM796 479h2v1h-2zM748 487h2v1h-2zM758 404h1v1h-1zM799 456h1v2h-1zM788 447h1v1h-1zM789 475h1v2h-1zM741 461h1v1h-1zM746 447h1v1h-1zM758 406h1v1h-1zM751 481h1v1h-1zM752 526h1v1h-1zM774 515h1v2h-1zM831 571h1v1h-1zM749 430h1v1h-1zM757 465h1v1h-1zM788 528h2v1h-2zM804 533h1v1h-1zM775 523h1v1h-1zM778 477h2v2h-2zM734 497h1v1h-1zM783 483h1v2h-1zM759 457h1v1h-1zM744 454h1v1h-1zM793 554h2v1h-2zM811 501h1v1h-1zM775 492h1v1h-1zM771 476h1v1h-1zM766 520h1v1h-1zM810 442h1v1h-1zM784 482h1v1h-1zM770 492h1v1h-1zM739 505h2v1h-2zM747 519h1v1h-1zM736 433h1v1h-1zM803 477h2v1h-2zM788 474h1v1h-1zM838 499h1v1h-1zM839 491h2v1h-2zM775 543h1v1h-1zM772 512h2v1h-2zM757 463h2v1h-2zM823 484h1v1h-1zM783 557h1v1h-1zM770 413h2v1h-2zM806 483h1v1h-1zM767 558h1v1h-1zM761 581h1v2h-1zM752 547h2v2h-2zM757 554h1v1h-1zM790 441h1v1h-1zM799 443h1v1h-1zM735 496h2v1h-2zM759 553h1v2h-1zM773 453h2v2h-2zM792 449h1v1h-1zM819 455h1v1h-1zM797 483h1v1h-1zM838 488h2v1h-2zM788 445h1v1h-1zM827 421h2v1h-2zM759 460h1v1h-1zM798 447h1v2h-1zM791 557h1v1h-1zM791 448h1v1h-1zM770 459h1v2h-1zM808 565h1v1h-1zM721 378h1v1h-1zM855 492h1v1h-1zM751 426h2v1h-2zM756 493h1v2h-1zM813 536h1v1h-1zM775 559h1v1h-1zM799 535h1v1h-1zM756 541h1v1h-1zM835 518h1v1h-1zM818 515h1v2h-1zM781 531h1v1h-1zM786 524h1v1h-1zM837 555h1v2h-1zM862 538h1v2h-1zM781 530h1v1h-1zM757 532h2v1h-2zM779 520h1v1h-1zM771 526h1v1h-1zM790 540h1v1h-1zM761 559h1v1h-1zM807 525h1v1h-1zM806 545h1v1h-1zM725 532h1v1h-1zM786 565h2v1h-2zM767 571h1v1h-1zM830 551h2v1h-2zM799 548h2v1h-2zM854 564h2v1h-2zM809 563h1v1h-1zM834 507h1v2h-1zM769 548h1v2h-1zM875 514h1v1h-1zM760 531h1v1h-1zM763 584h1v1h-1zM761 576h1v2h-1zM769 545h1v1h-1zM795 531h1v2h-1zM809 574h2v1h-2zM756 546h1v1h-1zM768 559h1v2h-1zM724 557h1v1h-1zM744 535h2v1h-2zM755 538h1v2h-1zM773 524h2v1h-2zM792 524h1v1h-1zM785 538h2v1h-2zM765 543h1v1h-1zM801 536h1v1h-1zM863 528h1v1h-1zM806 541h1v1h-1zM809 588h1v1h-1zM839 503h1v2h-1zM792 571h1v2h-1zM788 540h1v1h-1zM798 533h1v1h-1zM781 535h1v1h-1zM785 511h1v1h-1zM832 525h1v1h-1zM793 531h1v1h-1zM755 428h1v1h-1zM766 420h1v1h-1zM758 424h1v1h-1zM772 425h1v2h-1zM733 424h1v1h-1zM775 420h1v2h-1zM764 420h1v1h-1zM754 416h1v1h-1zM767 426h1v1h-1zM761 425h1v1h-1zM739 424h1v1h-1zM761 430h1v2h-1zM766 427h2v1h-2zM755 431h1v1h-1zM766 422h1v1h-1zM753 422h2v1h-2zM752 423h1v1h-1zM768 424h1v1h-1zM754 424h1v2h-1zM771 421h1v1h-1zM759 426h1v1h-1zM754 424h1v1h-1zM761 431h1v1h-1zM761 429h1v1h-1zM768 418h1v1h-1zM769 426h2v1h-2zM749 419h1v2h-1zM763 423h1v2h-1zM756 423h1v2h-1zM772 429h1v1h-1zM769 427h2v1h-2zM761 415h1v2h-1zM762 417h1v1h-1zM771 417h2v1h-2zM773 419h1v2h-1zM778 421h1v2h-1zM779 416h1v1h-1zM774 418h1v2h-1zM770 417h1v2h-1zM775 420h2v2h-2zM770 411h1v1h-1zM770 414h1v2h-1zM769 415h1v2h-1zM774 420h2v1h-2zM779 417h1v1h-1zM772 420h1v2h-1zM778 422h2v1h-2zM775 424h1v1h-1zM770 417h1v1h-1zM776 414h1v1h-1zM764 424h1v1h-1zM761 417h1v1h-1zM766 414h2v1h-2zM767 421h1v1h-1zM776 416h1v1h-1zM773 417h1v1h-1zM760 432h1v1h-1zM774 422h2v1h-2zM774 414h2v2h-2zM785 419h1v1h-1zM806 423h1v1h-1zM783 417h1v1h-1zM787 422h2v1h-2zM792 413h1v1h-1zM791 416h1v1h-1zM802 417h2v1h-2zM785 423h1v1h-1zM803 413h1v1h-1zM786 425h2v1h-2zM787 420h2v2h-2zM782 416h1v1h-1zM790 417h1v2h-1zM794 417h1v1h-1zM801 417h2v1h-2zM790 422h1v1h-1zM792 421h1v1h-1zM801 409h1v1h-1zM800 419h1v1h-1zM782 423h1v2h-1zM789 417h1v1h-1zM791 414h1v1h-1zM792 420h1v2h-1zM779 420h1v1h-1zM795 418h1v1h-1zM789 422h1v1h-1zM791 417h1v2h-1zM791 419h2v1h-2zM780 412h1v1h-1zM798 423h1v1h-1zM791 420h1v1h-1zM792 416h1v1h-1zM793 419h1v1h-1zM793 427h1v1h-1zM807 424h2v1h-2zM810 425h1v2h-1zM811 426h2v2h-2zM809 422h1v1h-1zM818 424h1v1h-1zM813 422h2v1h-2zM819 425h1v1h-1zM813 421h2v1h-2zM813 419h1v1h-1zM813 430h1v2h-1zM811 418h1v1h-1zM809 417h1v1h-1zM806 425h2v2h-2zM804 423h1v2h-1zM810 417h1v1h-1zM806 422h1v2h-1zM807 424h1v1h-1zM809 418h1v1h-1zM817 414h1v2h-1zM808 424h1v1h-1zM811 422h1v1h-1zM809 421h1v1h-1zM817 427h1v1h-1zM810 414h1v1h-1zM807 442h1v1h-1zM819 439h1v1h-1zM815 443h1v1h-1zM822 442h1v1h-1zM815 439h1v2h-1zM817 435h1v1h-1zM810 445h1v1h-1zM816 438h2v1h-2zM815 438h1v2h-1zM819 437h1v1h-1zM813 444h1v1h-1zM810 447h2v1h-2zM813 443h1v1h-1zM820 437h2v2h-2zM819 444h1v1h-1zM813 439h1v1h-1zM817 441h2v1h-2zM820 435h1v1h-1zM823 445h2v2h-2zM814 437h1v1h-1zM815 436h1v2h-1zM823 444h1v1h-1zM816 440h1v2h-1zM813 435h1v1h-1zM814 441h1v1h-1zM813 436h1v1h-1zM802 441h1v1h-1zM813 437h2v1h-2zM814 440h1v1h-1zM820 436h1v1h-1zM745 458h1v1h-1zM744 456h1v2h-1zM736 459h1v2h-1zM738 450h1v1h-1zM752 457h1v1h-1zM744 469h2v1h-2zM742 468h1v1h-1zM742 455h1v2h-1zM749 454h1v1h-1zM738 456h1v1h-1zM734 449h1v1h-1zM743 456h1v1h-1zM743 454h1v1h-1zM740 450h1v1h-1zM751 458h1v1h-1zM747 459h2v1h-2zM742 457h1v1h-1zM747 451h1v2h-1zM746 460h1v1h-1zM735 459h1v2h-1zM747 453h1v1h-1zM742 469h1v1h-1zM744 460h2v2h-2zM740 447h1v1h-1zM743 460h2v1h-2zM746 461h1v1h-1zM746 448h1v1h-1zM742 459h2v2h-2zM743 447h1v1h-1zM735 472h1v1h-1zM746 439h2v1h-2zM749 456h1v2h-1zM737 457h1v1h-1zM743 475h1v1h-1zM741 469h1v1h-1zM742 452h1v1h-1zM739 458h2v1h-2zM746 455h1v2h-1zM735 461h1v1h-1zM751 456h1v1h-1zM741 458h1v1h-1zM743 451h1v1h-1zM730 460h1v1h-1zM739 459h1v1h-1zM734 456h1v1h-1zM757 453h1v1h-1zM742 457h2v1h-2zM746 462h1v2h-1zM735 453h1v1h-1zM741 451h1v1h-1zM765 457h1v1h-1zM771 432h1v1h-1zM769 444h1v1h-1zM769 445h1v1h-1zM763 453h1v1h-1zM761 456h1v1h-1zM757 453h1v2h-1zM765 458h1v1h-1zM775 445h1v1h-1zM764 435h2v1h-2zM762 424h1v1h-1zM760 426h1v1h-1zM756 444h1v1h-1zM764 447h1v1h-1zM773 463h1v1h-1zM776 471h1v1h-1zM775 454h1v2h-1zM766 444h1v1h-1zM766 440h2v1h-2zM783 475h1v1h-1zM780 439h1v1h-1zM768 430h1v1h-1zM765 427h2v2h-2zM774 482h1v1h-1zM774 454h1v1h-1zM760 449h1v1h-1zM763 452h1v2h-1zM767 435h1v1h-1zM777 447h1v1h-1zM765 449h1v1h-1zM765 456h1v1h-1zM765 454h1v1h-1zM773 429h1v1h-1zM774 443h1v1h-1zM777 462h1v1h-1zM761 464h1v1h-1zM763 440h1v2h-1zM770 440h1v1h-1zM761 454h1v1h-1zM777 464h1v1h-1zM762 443h1v1h-1zM776 467h1v2h-1zM779 470h1v1h-1zM770 456h1v1h-1zM770 445h2v2h-2zM761 444h2v1h-2zM767 455h2v1h-2zM766 476h2v2h-2zM775 459h1v1h-1zM769 451h1v2h-1zM734 494h1v2h-1zM740 498h1v1h-1zM736 497h1v2h-1zM739 499h2v2h-2zM733 493h1v2h-1zM737 478h1v1h-1zM734 492h1v1h-1zM754 498h1v1h-1zM734 473h1v1h-1zM749 485h1v1h-1zM746 492h1v1h-1zM743 487h1v1h-1zM751 491h1v1h-1zM735 508h1v1h-1zM756 507h1v1h-1zM718 493h1v2h-1zM750 496h1v1h-1zM741 490h1v1h-1zM739 490h1v1h-1zM736 501h1v1h-1zM747 490h1v1h-1zM740 509h1v1h-1zM747 508h2v1h-2zM731 507h2v1h-2zM721 485h1v1h-1zM729 490h1v1h-1zM749 491h1v1h-1zM750 497h2v1h-2zM737 498h1v1h-1zM734 504h2v2h-2zM743 495h1v1h-1zM746 498h1v1h-1zM744 489h1v1h-1zM741 495h1v2h-1zM755 493h1v1h-1zM740 506h1v1h-1zM749 503h1v1h-1zM724 499h1v1h-1zM733 492h1v1h-1zM753 505h1v1h-1zM736 514h1v1h-1zM726 508h2v1h-2zM739 499h1v1h-1zM739 500h1v1h-1zM737 500h1v1h-1zM741 495h1v1h-1zM744 503h1v1h-1zM739 497h1v1h-1zM730 496h1v1h-1zM763 487h1v1h-1zM731 493h1v1h-1zM737 489h1v1h-1zM748 495h1v1h-1zM744 483h1v1h-1zM726 486h1v1h-1zM722 483h1v1h-1zM733 505h2v1h-2zM734 485h1v1h-1zM738 488h1v1h-1zM750 501h1v1h-1zM738 502h1v1h-1zM718 506h1v1h-1zM739 495h1v2h-1zM729 494h1v1h-1zM743 500h1v1h-1zM739 498h1v1h-1zM736 494h1v1h-1zM740 497h1v2h-1zM726 484h1v1h-1zM740 488h1v1h-1zM766 500h1v1h-1zM735 489h1v1h-1zM727 500h1v1h-1zM738 498h1v1h-1zM747 495h1v1h-1zM743 493h1v1h-1zM749 489h1v1h-1zM743 496h1v1h-1zM726 488h1v1h-1zM728 487h2v1h-2zM732 498h2v1h-2zM719 500h1v1h-1zM728 489h1v1h-1zM750 484h1v1h-1zM731 504h1v1h-1zM747 493h2v1h-2zM745 493h1v1h-1zM743 485h1v1h-1zM756 495h1v1h-1zM745 497h1v2h-1zM738 495h1v1h-1zM745 494h1v1h-1zM753 490h1v2h-1zM740 500h2v2h-2zM741 487h1v1h-1zM738 508h1v1h-1zM740 501h1v1h-1zM751 520h1v2h-1zM745 521h1v1h-1zM743 519h1v1h-1zM741 520h1v1h-1zM735 516h1v1h-1zM743 518h1v1h-1zM737 518h1v1h-1zM759 521h2v2h-2zM742 521h1v1h-1zM740 518h1v1h-1zM737 521h1v1h-1zM733 523h1v1h-1zM733 519h1v1h-1zM757 517h1v1h-1zM744 520h1v2h-1zM768 515h1v1h-1zM750 521h1v1h-1zM740 519h1v1h-1zM755 522h1v1h-1zM749 521h1v1h-1zM729 519h1v1h-1zM757 518h1v1h-1zM745 522h2v1h-2zM735 520h1v1h-1zM745 519h1v1h-1zM732 520h1v2h-1zM742 520h1v1h-1zM753 518h1v2h-1zM740 515h1v2h-1zM744 517h1v1h-1zM742 523h2v1h-2zM740 522h1v1h-1zM734 517h1v1h-1zM757 519h1v1h-1zM736 517h1v1h-1zM739 522h1v1h-1zM741 517h1v2h-1zM745 517h1v2h-1zM742 522h1v1h-1zM737 520h1v1h-1zM727 519h1v1h-1zM744 515h2v1h-2zM739 518h2v1h-2zM731 518h1v1h-1zM745 520h1v1h-1zM750 520h1v1h-1zM754 515h2v1h-2zM734 516h1v1h-1zM752 516h1v1h-1zM738 519h1v1h-1zM746 522h2v1h-2zM744 521h1v1h-1zM740 517h1v1h-1zM748 518h2v1h-2zM739 519h1v1h-1zM748 519h1v1h-1zM738 520h1v1h-1zM790 492h2v1h-2zM780 472h1v1h-1zM777 485h1v1h-1zM777 454h1v1h-1zM781 471h1v1h-1zM795 478h1v1h-1zM797 485h1v1h-1zM796 477h1v1h-1zM791 450h1v1h-1zM783 451h1v1h-1zM781 487h1v1h-1zM794 482h1v1h-1zM780 484h1v1h-1zM776 474h1v1h-1zM802 465h1v1h-1zM798 490h1v2h-1zM780 474h1v1h-1zM783 477h1v1h-1zM790 495h1v1h-1zM790 482h1v1h-1zM774 475h1v1h-1zM776 497h1v1h-1zM780 487h2v1h-2zM798 499h1v1h-1zM780 495h2v2h-2zM795 480h2v1h-2zM769 471h1v1h-1zM794 476h1v1h-1zM790 473h1v1h-1zM799 477h2v1h-2zM788 470h1v1h-1zM788 465h1v2h-1zM780 501h1v1h-1zM785 489h2v1h-2zM778 488h1v2h-1zM794 482h2v1h-2zM789 480h2v1h-2zM786 484h1v1h-1zM794 467h1v2h-1zM783 497h1v1h-1zM789 488h1v1h-1zM792 458h1v1h-1zM786 490h1v1h-1zM792 474h1v1h-1zM796 476h1v1h-1zM783 485h1v1h-1zM790 477h2v1h-2zM782 490h1v2h-1zM785 465h1v1h-1zM786 478h1v1h-1zM790 475h1v2h-1zM797 482h2v1h-2zM779 494h1v1h-1zM783 481h1v2h-1zM782 493h1v2h-1zM786 471h1v1h-1zM790 475h1v1h-1zM785 473h2v2h-2zM779 469h1v1h-1zM791 476h1v1h-1zM776 472h2v1h-2zM785 472h1v2h-1zM791 461h1v2h-1zM785 466h1v1h-1zM787 487h1v1h-1zM788 476h1v1h-1zM800 468h1v1h-1zM790 464h1v1h-1zM784 468h1v1h-1zM795 464h1v1h-1zM776 485h1v1h-1zM787 491h1v1h-1zM782 473h1v2h-1zM788 478h2v1h-2zM809 504h1v1h-1zM771 501h1v1h-1zM790 509h2v1h-2zM809 501h1v1h-1zM795 489h1v1h-1zM778 498h1v1h-1zM801 507h1v2h-1zM785 503h1v1h-1zM804 495h2v1h-2zM811 495h2v1h-2zM803 501h1v1h-1zM806 506h1v1h-1zM815 493h2v1h-2zM802 497h1v1h-1zM797 498h1v1h-1zM801 495h1v1h-1zM799 503h1v2h-1zM795 500h1v1h-1zM812 504h1v1h-1zM815 504h1v1h-1zM799 494h1v1h-1zM825 507h1v1h-1zM796 504h2v1h-2zM811 500h1v2h-1zM817 511h1v1h-1zM809 502h1v2h-1zM805 499h2v1h-2zM812 498h2v1h-2zM790 500h1v1h-1zM816 503h1v1h-1zM815 500h1v2h-1zM808 498h1v2h-1zM788 501h1v1h-1zM792 490h1v2h-1zM802 504h2v1h-2zM814 505h1v1h-1zM808 486h1v1h-1zM812 507h1v2h-1zM814 502h2v1h-2zM804 494h1v1h-1zM816 505h1v1h-1zM808 507h1v1h-1zM810 504h1v1h-1zM804 497h1v1h-1zM796 507h1v1h-1zM793 505h1v1h-1zM813 505h1v1h-1zM826 500h1v1h-1zM821 493h1v2h-1zM815 508h2v1h-2zM819 496h1v1h-1zM810 498h1v1h-1zM780 495h1v1h-1zM814 495h1v1h-1zM811 508h1v1h-1zM798 492h2v1h-2zM809 492h1v1h-1zM808 501h1v1h-1zM806 511h1v1h-1zM832 478h1v1h-1zM837 491h1v1h-1zM831 481h2v1h-2zM845 476h1v2h-1zM832 478h1v2h-1zM829 499h2v1h-2zM824 483h2v1h-2zM846 487h1v1h-1zM837 499h1v1h-1zM835 479h1v1h-1zM831 477h1v1h-1zM825 493h1v2h-1zM825 484h1v1h-1zM827 483h1v1h-1zM831 505h1v1h-1zM830 493h1v2h-1zM834 470h1v1h-1zM845 487h2v1h-2zM835 503h2v1h-2zM847 489h1v1h-1zM822 503h2v1h-2zM836 484h1v1h-1zM840 478h1v1h-1zM836 476h1v1h-1zM834 466h1v1h-1zM839 483h1v1h-1zM833 482h2v2h-2zM832 485h1v1h-1zM833 473h1v1h-1zM827 467h1v1h-1zM826 472h1v1h-1zM840 476h2v1h-2zM818 476h2v1h-2zM833 492h2v1h-2zM833 495h1v1h-1zM832 479h1v1h-1zM826 469h2v1h-2zM836 474h1v1h-1zM827 493h1v1h-1zM823 480h1v1h-1zM834 478h2v1h-2zM834 493h1v1h-1zM835 486h1v2h-1zM833 484h1v2h-1zM832 484h1v1h-1zM831 480h1v1h-1zM833 485h1v1h-1zM836 483h1v1h-1zM833 493h1v1h-1zM823 484h1v2h-1zM836 489h1v1h-1zM819 480h1v2h-1zM822 498h1v1h-1zM829 492h1v1h-1zM832 493h1v1h-1zM817 490h2v1h-2zM829 476h1v1h-1zM823 486h1v2h-1zM837 478h1v1h-1zM827 511h1v1h-1zM834 514h1v1h-1zM832 516h1v1h-1zM834 518h1v1h-1zM830 525h1v1h-1zM834 518h1v2h-1zM846 519h1v1h-1zM836 519h1v2h-1zM824 517h1v1h-1zM829 518h1v1h-1zM817 522h2v1h-2zM843 512h1v1h-1zM828 521h1v1h-1zM847 525h1v1h-1zM825 519h1v1h-1zM834 528h2v1h-2zM827 522h1v1h-1zM823 517h1v1h-1zM836 522h1v1h-1zM845 515h1v1h-1zM830 519h2v2h-2zM821 515h1v1h-1zM838 516h1v1h-1zM828 523h1v1h-1zM828 519h2v1h-2zM829 519h1v1h-1zM844 520h1v1h-1zM844 523h1v2h-1zM813 522h1v2h-1zM827 527h2v1h-2zM826 514h2v1h-2zM843 517h1v1h-1zM835 515h1v1h-1zM819 520h1v1h-1zM831 521h1v1h-1zM820 521h1v1h-1zM815 521h1v2h-1zM848 515h1v1h-1zM805 512h2v1h-2zM818 524h1v1h-1zM815 521h1v1h-1zM831 514h1v1h-1zM826 518h1v1h-1zM812 519h1v1h-1zM834 517h1v1h-1zM829 517h1v1h-1zM816 518h1v1h-1zM840 513h1v1h-1zM840 518h1v2h-1zM822 512h1v1h-1zM837 516h1v1h-1zM835 524h1v1h-1zM840 519h1v1h-1zM824 514h1v1h-1zM816 517h1v1h-1zM830 518h1v2h-1zM834 523h1v1h-1zM830 522h1v1h-1zM822 519h1v1h-1zM826 521h1v2h-1zM825 523h1v1h-1zM827 520h1v1h-1zM832 521h1v1h-1zM838 522h1v1h-1zM814 518h1v2h-1zM827 512h1v1h-1zM829 520h2v1h-2zM823 521h1v1h-1zM837 526h1v1h-1zM838 513h1v1h-1zM831 527h1v1h-1zM811 513h1v1h-1zM808 523h2v2h-2zM826 525h1v1h-1zM837 546h1v1h-1zM840 538h1v1h-1zM837 533h1v2h-1zM841 538h1v1h-1zM841 531h1v1h-1zM835 531h1v1h-1zM822 532h1v2h-1zM816 539h1v1h-1zM838 530h1v2h-1zM830 532h1v1h-1zM820 538h1v1h-1zM826 545h1v2h-1zM835 545h1v1h-1zM838 532h1v1h-1zM838 541h1v1h-1zM835 535h1v1h-1zM825 536h1v1h-1zM833 544h1v2h-1zM837 535h2v1h-2zM829 538h1v2h-1zM843 540h1v1h-1zM834 535h1v1h-1zM853 541h1v1h-1zM812 532h1v1h-1zM848 542h1v2h-1zM831 551h2v1h-2zM820 548h1v1h-1zM846 540h2v1h-2zM836 540h1v1h-1zM844 537h2v1h-2zM831 547h2v1h-2zM834 533h1v1h-1zM827 528h1v1h-1zM834 542h1v1h-1zM824 550h1v1h-1zM828 551h1v1h-1zM825 547h1v1h-1zM837 540h1v1h-1zM835 550h1v1h-1zM826 540h1v1h-1zM842 541h1v1h-1zM841 543h1v1h-1zM839 541h1v1h-1zM833 531h1v1h-1zM830 530h1v1h-1zM854 546h1v1h-1zM824 537h1v1h-1zM832 533h1v1h-1zM838 544h1v1h-1zM842 540h1v1h-1zM830 538h1v1h-1zM845 538h2v1h-2zM821 536h1v1h-1zM834 537h2v1h-2zM841 541h1v1h-1zM830 539h1v1h-1zM810 539h1v1h-1zM829 541h1v1h-1zM818 533h1v1h-1zM823 536h1v1h-1zM842 550h1v2h-1zM837 537h1v1h-1zM835 537h1v1h-1zM830 545h1v1h-1zM838 543h1v1h-1zM834 545h2v2h-2zM831 547h1v1h-1zM847 540h2v1h-2zM819 536h2v1h-2zM830 542h1v1h-1zM836 539h1v1h-1zM832 545h1v1h-1zM838 539h1v1h-1zM835 542h1v2h-1zM768 544h1v1h-1zM767 544h1v1h-1zM772 549h2v1h-2zM782 543h2v1h-2zM762 533h2v1h-2zM761 538h1v1h-1zM777 533h1v1h-1zM760 533h1v1h-1zM772 541h2v1h-2zM781 546h1v1h-1zM751 536h1v1h-1zM768 548h1v1h-1zM767 537h1v2h-1zM760 554h1v1h-1zM777 549h1v1h-1zM763 549h1v1h-1zM761 536h1v1h-1zM772 537h1v2h-1zM751 543h2v1h-2zM787 539h1v1h-1zM775 542h2v2h-2zM768 537h1v1h-1zM790 544h1v2h-1zM784 550h1v1h-1zM769 543h1v1h-1zM762 545h1v1h-1zM772 550h1v1h-1zM790 548h2v2h-2zM772 539h1v1h-1zM751 558h1v1h-1zM770 547h2v1h-2zM770 544h1v1h-1zM772 541h1v1h-1zM759 540h2v2h-2zM753 548h1v1h-1zM766 540h1v1h-1zM771 534h1v1h-1zM765 542h1v1h-1zM762 540h1v1h-1zM758 540h1v1h-1zM758 544h1v1h-1zM773 547h1v1h-1zM781 549h1v1h-1zM760 543h1v1h-1zM768 540h1v1h-1zM797 539h1v2h-1zM754 537h2v1h-2zM779 539h1v1h-1zM758 545h1v2h-1zM763 538h1v1h-1zM783 559h2v1h-2zM789 558h1v1h-1zM780 566h1v1h-1zM780 562h1v1h-1zM779 553h1v1h-1zM783 565h1v1h-1zM788 558h1v1h-1zM773 557h1v1h-1zM777 556h2v2h-2zM778 556h1v1h-1zM775 554h2v1h-2zM787 560h1v1h-1zM769 564h1v1h-1zM779 557h1v1h-1zM779 559h1v1h-1zM786 563h1v1h-1zM778 565h1v1h-1zM785 555h1v1h-1zM782 559h1v1h-1zM794 562h1v1h-1zM790 550h1v1h-1zM782 560h2v1h-2zM783 556h1v1h-1zM780 556h1v1h-1zM769 566h1v1h-1zM778 561h1v1h-1zM780 558h1v1h-1zM788 566h1v1h-1zM792 556h1v1h-1zM784 557h2v2h-2zM782 560h1v1h-1zM771 552h1v1h-1zM777 566h1v2h-1zM776 559h1v1h-1zM788 557h2v2h-2zM781 557h2v1h-2zM776 561h1v2h-1zM782 562h1v2h-1zM804 553h1v2h-1zM801 554h1v2h-1zM788 559h1v1h-1zM810 535h1v1h-1zM805 549h1v2h-1zM794 546h1v1h-1zM790 553h1v1h-1zM803 539h1v1h-1zM796 559h2v1h-2zM795 555h1v1h-1zM798 546h1v1h-1zM796 541h1v1h-1zM787 555h1v1h-1zM798 540h1v1h-1zM799 542h1v1h-1zM795 541h1v2h-1zM797 550h1v1h-1zM799 545h2v1h-2zM798 545h2v1h-2zM788 546h2v1h-2zM795 549h1v2h-1zM788 547h2v1h-2zM793 542h1v1h-1zM792 548h1v1h-1zM796 540h1v1h-1zM797 565h1v1h-1zM799 556h1v1h-1zM796 553h1v2h-1zM796 543h1v1h-1zM798 546h2v1h-2zM798 554h1v1h-1zM803 549h1v1h-1zM799 544h1v1h-1zM799 536h2v1h-2zM798 554h2v1h-2zM795 547h1v1h-1zM800 537h1v1h-1zM825 556h1v2h-1zM818 559h1v1h-1zM824 560h2v1h-2zM832 571h1v1h-1zM820 558h1v2h-1zM812 567h1v1h-1zM836 567h1v1h-1zM825 565h2v1h-2zM830 562h2v1h-2zM817 564h1v1h-1zM819 565h1v1h-1zM824 566h1v1h-1zM833 562h2v2h-2zM824 565h1v1h-1zM837 564h1v1h-1zM830 568h1v2h-1zM826 560h1v1h-1zM809 562h1v1h-1zM821 561h1v1h-1zM824 564h1v1h-1zM827 566h2v1h-2zM811 563h1v1h-1zM813 564h1v1h-1zM822 570h2v2h-2zM837 558h1v1h-1zM813 568h2v1h-2zM821 554h1v1h-1zM813 563h1v1h-1zM823 559h1v1h-1zM824 557h1v1h-1zM804 566h1v1h-1zM827 563h1v1h-1zM825 569h2v1h-2zM820 560h1v1h-1zM836 574h1v1h-1zM815 563h1v1h-1zM841 564h2v1h-2zM826 569h2v1h-2zM818 583h1v2h-1zM818 582h1v1h-1zM814 564h1v1h-1zM819 577h2v2h-2zM813 568h1v1h-1zM819 574h1v1h-1zM823 582h1v2h-1zM810 576h1v1h-1zM817 576h1v1h-1zM807 581h1v1h-1zM815 571h1v1h-1zM812 581h2v1h-2zM816 571h1v1h-1zM814 578h1v1h-1zM818 576h1v1h-1zM812 585h1v2h-1zM819 576h1v1h-1zM818 574h1v2h-1zM816 569h1v1h-1zM805 572h1v2h-1zM823 585h1v1h-1zM816 575h1v1h-1zM819 580h2v1h-2zM815 573h1v1h-1zM817 583h1v1h-1zM816 568h2v1h-2zM814 584h1v1h-1zM812 576h1v1h-1zM819 569h1v1h-1zM806 570h1v1h-1zM798 572h1v1h-1zM799 577h1v1h-1zM806 572h1v2h-1zM797 571h1v1h-1zM797 570h1v1h-1zM799 572h1v1h-1zM805 571h1v1h-1zM801 572h1v2h-1zM805 574h1v1h-1zM810 568h2v2h-2zM811 568h1v1h-1zM803 576h1v2h-1zM805 563h1v1h-1zM803 575h1v1h-1zM807 579h1v1h-1zM801 575h1v1h-1zM807 573h1v1h-1zM1201 574h1v1h-1zM1204 589h2v1h-2zM1159 655h1v1h-1zM1119 530h1v2h-1zM1183 615h1v1h-1zM1277 566h1v2h-1zM1222 617h2v1h-2zM1240 545h1v1h-1zM1172 642h1v1h-1zM1131 586h1v2h-1zM1235 596h1v1h-1zM1164 608h2v1h-2zM1207 626h1v1h-1zM1203 568h1v2h-1zM1246 538h1v1h-1zM1305 581h1v1h-1zM1197 592h1v1h-1zM1109 566h1v1h-1zM1206 554h1v1h-1zM1231 604h2v1h-2zM1237 622h1v1h-1zM1209 644h1v1h-1zM1118 575h1v2h-1zM1205 565h1v2h-1zM1217 583h2v2h-2zM1213 580h1v1h-1zM1263 592h1v1h-1zM1242 620h1v2h-1zM1145 619h1v1h-1zM1212 533h1v1h-1zM1238 582h1v1h-1zM1165 533h2v2h-2zM1061 617h1v1h-1zM1172 640h1v2h-1zM1213 560h1v1h-1zM1158 565h1v2h-1zM1270 581h1v1h-1zM1181 537h1v1h-1zM1216 593h1v1h-1zM1201 568h1v1h-1zM1168 581h1v1h-1zM1230 621h1v2h-1zM1210 623h1v1h-1zM1253 602h1v1h-1zM1320 557h1v1h-1zM1170 522h1v1h-1zM1110 593h1v1h-1zM1186 583h1v1h-1zM1227 611h1v1h-1zM1190 608h1v1h-1zM1172 562h1v1h-1zM1143 552h1v1h-1zM1175 588h1v1h-1zM1211 572h1v1h-1zM1143 549h1v1h-1zM1170 556h1v1h-1zM1264 590h1v1h-1zM1145 597h1v1h-1zM1113 589h1v1h-1zM1218 628h1v2h-1zM1141 627h1v1h-1zM1263 564h1v1h-1zM1192 587h1v1h-1zM1201 629h1v1h-1zM1194 598h1v1h-1zM1112 574h1v2h-1zM1239 555h1v1h-1zM1160 587h1v1h-1zM1067 531h1v1h-1zM1271 612h1v2h-1zM1239 587h1v2h-1zM1165 586h1v1h-1zM1214 595h1v1h-1zM1232 619h1v1h-1zM1234 606h1v1h-1zM1316 539h1v2h-1zM1088 537h1v1h-1zM1107 556h2v1h-2zM1152 558h1v1h-1zM1250 586h1v1h-1zM1285 513h1v1h-1zM1180 597h1v1h-1zM1168 565h1v1h-1zM1187 583h1v1h-1zM1291 514h1v1h-1zM1108 554h1v1h-1zM1250 604h1v1h-1zM1240 583h1v1h-1zM1275 579h1v1h-1zM1210 569h1v1h-1zM1312 664h1v1h-1zM1346 671h1v1h-1zM1342 641h1v1h-1zM1352 668h1v1h-1zM1309 668h1v2h-1zM1339 635h1v2h-1zM1282 712h1v1h-1zM1312 653h1v1h-1zM1326 675h1v1h-1zM1343 644h1v2h-1zM1251 724h1v2h-1zM1331 679h1v1h-1zM1344 714h1v2h-1zM1287 710h2v1h-2zM1263 713h1v1h-1zM1349 727h1v2h-1zM1372 668h1v1h-1zM1364 691h1v1h-1zM1366 681h1v1h-1zM1357 662h1v1h-1zM1361 659h1v1h-1zM1348 686h1v2h-1zM1365 700h1v1h-1zM1308 726h2v1h-2zM1373 697h1v1h-1zM1354 680h1v1h-1zM1301 673h1v1h-1zM1336 758h1v1h-1zM1311 703h1v2h-1zM1401 684h1v1h-1zM1290 686h1v1h-1zM1390 654h1v1h-1zM1252 721h1v1h-1zM1304 687h1v1h-1zM1361 672h2v1h-2zM1381 686h1v2h-1zM1317 656h1v1h-1zM1331 669h2v1h-2zM1250 693h1v1h-1zM1284 749h2v1h-2zM1339 652h2v1h-2zM1352 689h1v1h-1zM1306 646h2v1h-2zM1240 653h1v2h-1zM1318 674h1v1h-1zM1314 709h1v1h-1zM1370 710h1v1h-1zM1325 718h1v1h-1zM1293 726h2v1h-2zM1296 614h1v2h-1zM1360 696h1v1h-1zM1317 664h1v1h-1zM1339 651h1v2h-1zM1336 666h1v1h-1zM1299 722h1v1h-1zM1267 644h1v2h-1zM1284 659h1v1h-1zM1270 687h1v2h-1zM1303 679h1v1h-1zM1282 676h2v1h-2zM1283 607h1v1h-1zM1367 685h1v1h-1zM1298 708h1v1h-1zM1361 665h1v2h-1zM1337 703h1v1h-1zM1308 644h1v1h-1zM1287 689h1v1h-1zM1306 720h1v1h-1zM1301 669h1v1h-1zM1219 701h1v1h-1zM1373 685h2v1h-2zM1347 721h1v1h-1zM1306 631h1v2h-1zM1340 699h1v1h-1zM1299 659h1v1h-1zM1345 619h1v1h-1zM1348 660h1v2h-1zM1354 685h1v2h-1zM1347 731h1v1h-1zM1336 659h1v2h-1zM1354 738h1v1h-1zM1269 655h1v1h-1zM1266 684h1v1h-1zM1298 671h1v1h-1zM1343 754h1v2h-1zM1350 684h1v2h-1zM1212 676h1v1h-1zM1336 666h2v1h-2zM1362 674h2v1h-2zM1299 636h2v1h-2zM1341 659h1v1h-1zM1341 640h1v2h-1zM1288 692h1v2h-1zM1377 670h1v1h-1zM1347 716h1v1h-1zM1308 616h1v1h-1zM1390 710h1v1h-1zM1379 660h1v1h-1zM1309 696h1v1h-1zM1309 735h1v1h-1zM1286 680h1v1h-1zM1313 692h1v2h-1zM1307 718h1v1h-1zM1303 708h1v1h-1zM1364 723h1v1h-1zM1314 654h2v1h-2zM1322 693h2v1h-2zM1371 662h2v1h-2zM1280 711h1v1h-1zM1363 686h1v1h-1zM1312 694h1v1h-1zM1316 680h1v1h-1zM1332 708h1v1h-1zM1328 662h1v2h-1zM1328 633h1v1h-1zM1326 679h1v1h-1zM1342 660h2v1h-2zM1303 708h1v2h-1zM1342 718h1v1h-1zM1275 682h1v1h-1zM1348 689h1v1h-1zM1347 673h2v1h-2zM1365 694h1v1h-1zM1297 649h1v1h-1zM1335 656h1v1h-1zM1245 648h1v1h-1zM1348 700h1v1h-1zM1365 705h1v1h-1zM1358 706h1v2h-1zM1322 690h1v1h-1zM1310 749h2v1h-2zM1352 720h1v2h-1zM1314 664h1v1h-1zM1352 688h1v2h-1zM1294 651h1v1h-1zM1318 668h1v1h-1zM1340 688h2v2h-2zM1303 690h1v1h-1zM1260 684h1v1h-1zM1351 652h2v1h-2zM1300 739h1v1h-1zM1336 696h1v1h-1zM1376 705h1v1h-1zM1291 687h2v1h-2zM1384 694h1v1h-1zM1337 698h1v1h-1zM1334 746h2v1h-2zM1333 653h1v1h-1zM1347 647h2v2h-2zM1395 679h2v1h-2zM1385 706h1v1h-1zM1349 679h1v1h-1zM1282 703h1v1h-1zM1363 687h1v2h-1zM1299 662h1v1h-1zM1334 696h1v1h-1zM1349 642h2v1h-2zM1334 664h1v2h-1zM1332 709h1v2h-1zM1347 687h1v1h-1zM1105 521h1v1h-1zM1107 526h1v1h-1zM1107 520h1v1h-1zM1106 520h1v1h-1zM1105 539h2v1h-2zM1104 541h1v1h-1zM1105 530h2v1h-2zM1102 540h1v1h-1zM1104 525h1v1h-1zM1108 535h2v1h-2zM1108 531h1v1h-1zM1104 533h1v2h-1zM1103 525h1v1h-1zM1107 524h1v1h-1zM1107 541h1v1h-1zM1104 524h1v1h-1zM1112 541h1v1h-1zM1106 531h1v1h-1zM1104 533h2v1h-2zM1106 532h1v1h-1zM1102 531h2v1h-2zM1106 533h1v1h-1zM1110 536h1v1h-1zM1107 506h1v1h-1zM1109 527h1v1h-1zM1104 530h1v1h-1zM1107 527h1v1h-1zM1107 529h2v1h-2zM1108 530h1v2h-1zM1108 525h1v1h-1zM1105 516h1v1h-1zM1110 521h1v1h-1zM1104 551h1v2h-1zM1100 519h2v1h-2zM1105 538h1v1h-1zM1109 529h1v1h-1zM1105 527h1v1h-1zM1107 538h1v1h-1zM1102 516h1v1h-1zM1107 527h2v1h-2zM1108 543h1v1h-1zM1103 527h1v1h-1zM1103 536h1v1h-1zM1102 521h2v1h-2zM1107 535h1v1h-1zM1109 525h2v1h-2zM1105 516h1v2h-1zM1107 525h2v1h-2zM1108 533h1v1h-1zM1107 523h1v1h-1zM1108 536h1v1h-1zM1106 520h1v2h-1zM1106 523h1v1h-1zM1107 519h1v1h-1zM1099 531h1v1h-1zM1106 525h2v1h-2zM1105 539h1v1h-1zM1114 513h1v1h-1zM1136 526h1v1h-1zM1109 515h1v1h-1zM1107 531h1v1h-1zM1127 530h1v1h-1zM1125 512h1v1h-1zM1126 513h1v1h-1zM1136 523h2v1h-2zM1118 525h1v1h-1zM1126 521h2v1h-2zM1129 522h1v1h-1zM1130 523h1v1h-1zM1112 529h1v2h-1zM1119 527h1v1h-1zM1143 517h1v1h-1zM1129 528h1v1h-1zM1117 512h1v1h-1zM1131 528h1v1h-1zM1115 529h1v1h-1zM1124 521h1v2h-1zM1108 516h1v1h-1zM1119 513h1v1h-1zM1123 525h1v1h-1zM1108 523h1v1h-1zM1128 519h1v1h-1zM1112 524h1v1h-1zM1124 516h1v2h-1zM1111 531h1v1h-1zM1120 522h1v2h-1zM1126 520h1v1h-1zM1132 525h1v1h-1zM1116 537h1v2h-1zM1115 516h1v1h-1zM1116 527h2v1h-2zM1132 518h1v1h-1zM1120 518h2v1h-2zM1139 528h1v2h-1zM1107 525h2v2h-2zM1128 521h1v2h-1zM1135 522h2v1h-2zM1136 516h1v1h-1zM1123 519h2v1h-2zM1130 531h1v1h-1zM1127 515h1v1h-1zM1129 511h1v1h-1zM1160 527h1v1h-1zM1174 541h1v1h-1zM1177 534h1v1h-1zM1164 527h1v1h-1zM1160 540h1v1h-1zM1180 523h2v2h-2zM1174 529h1v1h-1zM1154 527h1v1h-1zM1145 536h1v1h-1zM1165 545h2v1h-2zM1156 544h1v1h-1zM1174 536h1v1h-1zM1173 538h2v2h-2zM1185 533h1v1h-1zM1154 544h1v1h-1zM1160 541h1v1h-1zM1189 516h1v1h-1zM1178 543h1v1h-1zM1156 534h1v1h-1zM1170 549h1v1h-1zM1175 544h1v1h-1zM1155 528h1v1h-1zM1166 519h2v1h-2zM1130 526h1v1h-1zM1154 536h1v1h-1zM1180 532h1v1h-1zM1147 525h1v1h-1zM1160 542h1v1h-1zM1187 526h1v1h-1zM1157 548h1v1h-1zM1138 535h1v1h-1zM1168 526h1v1h-1zM1150 557h1v1h-1zM1177 513h1v1h-1zM1146 546h1v1h-1zM1164 539h1v1h-1zM1171 534h1v1h-1zM1181 536h1v1h-1zM1155 541h1v1h-1zM1180 549h1v1h-1zM1160 538h1v1h-1zM1169 537h1v1h-1zM1178 537h2v1h-2zM1126 516h1v1h-1zM1177 523h1v1h-1zM1152 529h2v2h-2zM1176 525h2v1h-2zM1143 547h1v1h-1zM1190 545h1v1h-1zM1152 570h2v1h-2zM1153 574h1v1h-1zM1140 569h1v1h-1zM1162 563h2v1h-2zM1142 573h2v1h-2zM1146 582h1v1h-1zM1143 579h1v1h-1zM1167 561h1v1h-1zM1151 575h1v1h-1zM1134 565h2v1h-2zM1136 564h1v1h-1zM1128 562h1v1h-1zM1153 565h1v1h-1zM1148 566h2v1h-2zM1138 558h1v1h-1zM1143 571h1v1h-1zM1154 566h1v2h-1zM1146 557h2v1h-2zM1151 559h1v2h-1zM1153 571h2v1h-2zM1137 576h1v1h-1zM1136 573h1v1h-1zM1148 562h1v1h-1zM1138 583h1v1h-1zM1142 562h2v1h-2zM1128 564h2v1h-2zM1145 568h1v1h-1zM1144 569h1v1h-1zM1127 571h2v2h-2zM1130 568h1v1h-1zM1140 571h1v1h-1zM1146 568h1v2h-1zM1149 582h1v1h-1zM1129 572h1v1h-1zM1140 577h1v1h-1zM1162 564h2v1h-2zM1134 568h1v1h-1zM1145 574h1v1h-1zM1142 561h1v1h-1zM1125 587h1v1h-1zM1129 590h2v1h-2zM1120 593h1v2h-1zM1129 590h1v1h-1zM1115 591h2v1h-2zM1125 590h1v1h-1zM1117 590h2v1h-2zM1126 585h1v1h-1zM1128 588h1v1h-1zM1122 593h1v1h-1zM1121 598h1v1h-1zM1116 594h1v1h-1zM1117 595h1v1h-1zM1126 595h1v1h-1zM1124 590h1v1h-1zM1118 594h1v1h-1zM1124 588h2v1h-2zM1125 593h1v1h-1zM1113 583h1v2h-1zM1124 586h1v1h-1zM1123 589h1v1h-1zM1118 595h2v1h-2zM1117 594h1v1h-1zM1123 591h1v2h-1zM1127 596h2v1h-2zM1132 592h1v1h-1zM1119 594h1v1h-1zM1116 591h2v1h-2zM1117 588h1v1h-1zM1170 593h1v1h-1zM1172 595h1v1h-1zM1169 590h1v2h-1zM1174 587h2v1h-2zM1171 598h2v1h-2zM1181 593h1v1h-1zM1156 599h1v1h-1zM1168 590h1v1h-1zM1150 600h1v1h-1zM1181 589h2v1h-2zM1161 587h1v1h-1zM1175 581h1v1h-1zM1172 590h2v1h-2zM1181 595h1v1h-1zM1179 599h1v1h-1zM1176 588h1v1h-1zM1160 594h1v1h-1zM1166 591h1v1h-1zM1175 594h1v1h-1zM1169 588h1v1h-1zM1180 590h1v1h-1zM1178 584h1v1h-1zM1179 590h1v1h-1zM1182 591h1v1h-1zM1171 595h1v1h-1zM1167 590h2v1h-2zM1171 590h1v1h-1zM1173 594h1v1h-1zM1173 587h1v1h-1zM1163 587h2v1h-2zM1170 592h1v2h-1zM1169 594h1v2h-1zM1162 586h1v1h-1zM1160 589h1v2h-1zM1190 596h1v1h-1zM1172 585h1v1h-1zM1171 589h2v2h-2zM1176 595h1v1h-1zM1175 593h1v1h-1zM1190 600h1v2h-1zM1177 590h2v1h-2zM1171 585h1v1h-1zM1172 595h1v2h-1zM1173 589h1v1h-1zM1171 588h1v1h-1zM1163 588h1v1h-1zM1167 581h1v2h-1zM1172 600h1v1h-1zM1170 600h1v1h-1zM1169 591h1v1h-1zM1158 591h1v1h-1zM1181 592h1v1h-1zM1179 591h1v1h-1zM1174 588h1v1h-1zM1163 586h1v1h-1zM1170 588h1v2h-1zM1172 594h1v2h-1zM1168 595h1v1h-1zM1183 611h1v1h-1zM1184 606h1v1h-1zM1180 617h1v1h-1zM1184 619h1v1h-1zM1182 620h1v2h-1zM1183 621h1v1h-1zM1182 621h2v2h-2zM1182 629h1v1h-1zM1183 609h1v1h-1zM1180 622h1v2h-1zM1183 616h1v1h-1zM1182 615h1v2h-1zM1185 596h1v1h-1zM1182 623h1v1h-1zM1183 624h1v1h-1zM1180 622h1v1h-1zM1181 603h1v2h-1zM1180 610h1v1h-1zM1184 617h1v1h-1zM1185 598h1v1h-1zM1185 625h1v2h-1zM1185 609h1v1h-1zM1178 614h1v1h-1zM1180 616h1v1h-1zM1182 611h2v1h-2zM1180 615h1v1h-1zM1181 620h2v1h-2zM1181 621h2v1h-2zM1181 608h2v1h-2zM1185 617h1v1h-1zM1181 616h1v1h-1zM1182 613h1v2h-1zM1182 612h1v1h-1zM1181 611h1v2h-1zM1180 619h1v1h-1zM1182 618h1v2h-1zM1181 615h1v1h-1zM1185 615h1v1h-1zM1179 612h1v1h-1zM1178 608h1v1h-1zM1179 602h1v1h-1zM1180 621h2v2h-2zM1178 618h2v1h-2zM1181 603h1v1h-1zM1182 619h1v1h-1zM1181 606h1v1h-1zM1183 608h1v1h-1zM1179 617h1v1h-1zM1180 609h1v2h-1zM1183 595h1v1h-1zM1181 614h1v1h-1zM1181 605h1v1h-1zM1184 604h2v1h-2zM1181 623h2v1h-2zM1181 599h1v1h-1zM1182 616h1v1h-1zM1182 615h2v2h-2zM1180 609h1v1h-1zM1181 591h1v1h-1zM1188 592h1v1h-1zM1185 601h1v1h-1zM1177 611h1v1h-1zM1185 618h2v1h-2zM1181 604h1v1h-1zM1179 618h1v1h-1zM1182 632h1v2h-1zM1182 617h1v1h-1zM1184 614h1v1h-1zM1182 620h1v1h-1zM1179 601h1v1h-1zM1184 613h2v1h-2zM1183 592h1v1h-1zM1182 604h1v2h-1zM1182 595h1v1h-1zM1181 612h1v1h-1zM1183 626h2v1h-2zM1180 618h1v1h-1zM1177 624h1v1h-1zM1182 613h1v1h-1zM1181 624h1v1h-1zM1183 635h1v2h-1zM1183 617h1v1h-1zM1181 609h1v1h-1zM1184 627h1v1h-1zM1181 613h1v2h-1zM1181 607h1v2h-1zM1182 605h1v2h-1zM1183 600h2v1h-2zM1180 620h1v1h-1zM1183 607h1v1h-1zM1179 624h2v1h-2zM1184 606h2v1h-2zM1179 605h2v2h-2zM1179 630h1v2h-1zM1183 628h1v1h-1zM1183 610h1v1h-1zM1178 615h1v1h-1zM1181 611h1v1h-1zM1177 605h1v1h-1zM1183 607h1v2h-1zM1180 623h2v1h-2zM1175 602h1v1h-1zM1182 624h1v2h-1zM1184 618h1v1h-1zM1183 601h1v1h-1zM1181 602h2v1h-2zM1179 608h1v1h-1zM1179 614h1v2h-1zM1180 604h1v1h-1zM1183 588h1v1h-1zM1180 612h2v1h-2zM1184 610h1v2h-1zM1180 606h1v1h-1zM1180 610h1v2h-1zM1185 627h1v1h-1zM1180 624h1v1h-1zM1178 612h1v1h-1zM1183 611h1v2h-1zM1178 623h2v1h-2zM1183 611h2v1h-2zM1181 608h1v2h-1zM1179 626h1v1h-1zM1183 619h1v2h-1zM1183 599h1v1h-1zM1180 611h1v1h-1zM1179 613h1v1h-1zM1182 610h2v1h-2zM1180 608h1v1h-1zM1184 622h1v1h-1zM1182 603h1v1h-1zM1181 607h1v1h-1zM1182 615h2v1h-2zM1180 593h1v1h-1zM1200 575h1v1h-1zM1240 568h1v1h-1zM1216 564h1v1h-1zM1214 559h2v1h-2zM1233 573h1v1h-1zM1220 561h1v1h-1zM1217 576h1v1h-1zM1225 567h2v1h-2zM1215 572h1v1h-1zM1219 568h1v2h-1zM1202 567h1v1h-1zM1227 564h1v1h-1zM1224 563h1v1h-1zM1196 570h1v1h-1zM1216 566h2v1h-2zM1220 570h1v1h-1zM1230 560h1v1h-1zM1207 564h1v2h-1zM1215 566h1v2h-1zM1230 568h1v1h-1zM1225 567h1v1h-1zM1228 570h1v1h-1zM1218 571h1v1h-1zM1202 573h1v1h-1zM1210 568h1v1h-1zM1217 566h1v2h-1zM1192 573h1v1h-1zM1214 570h2v1h-2zM1220 572h1v1h-1zM1205 568h1v1h-1zM1212 572h1v2h-1zM1222 572h2v1h-2zM1213 570h2v1h-2zM1213 567h1v1h-1zM1222 562h2v1h-2zM1221 567h1v1h-1zM1201 578h1v1h-1zM1209 563h2v1h-2zM1212 573h2v2h-2zM1215 563h1v1h-1zM1225 556h1v1h-1zM1238 568h1v1h-1zM1206 568h2v1h-2zM1222 572h2v2h-2zM1209 562h1v2h-1zM1201 569h1v2h-1zM1214 570h1v1h-1zM1209 571h1v1h-1zM1219 562h1v1h-1zM1230 566h1v1h-1zM1209 563h1v1h-1zM1215 568h1v1h-1zM1230 562h1v1h-1zM1204 569h1v1h-1zM1211 571h1v2h-1zM1205 560h1v1h-1zM1213 563h1v1h-1zM1218 568h1v1h-1zM1212 565h1v1h-1zM1201 571h1v1h-1zM1222 564h1v1h-1zM1203 579h1v1h-1zM1221 574h1v1h-1zM1213 564h1v1h-1zM1229 562h1v1h-1zM1224 579h1v1h-1zM1218 567h1v1h-1zM1222 565h2v2h-2zM1231 574h1v1h-1zM1203 565h1v1h-1zM1219 571h1v1h-1zM1228 574h2v1h-2zM1216 575h1v1h-1zM1204 565h1v1h-1zM1205 566h1v1h-1zM1205 563h1v1h-1zM1227 568h1v2h-1zM1233 566h1v1h-1zM1221 571h1v1h-1zM1220 556h1v2h-1zM1197 571h1v1h-1zM1204 563h1v1h-1zM1210 572h1v1h-1zM1230 573h1v1h-1zM1196 562h1v1h-1zM1198 568h1v1h-1zM1220 563h1v1h-1zM1226 569h1v2h-1zM1208 566h1v1h-1zM1214 558h1v1h-1zM1203 561h1v1h-1zM1214 564h1v1h-1zM1220 565h1v1h-1zM1201 573h1v1h-1zM1228 571h1v1h-1zM1208 569h1v1h-1zM1226 554h1v1h-1zM1228 557h1v2h-1zM1197 564h1v2h-1zM1232 561h1v2h-1zM1244 567h2v1h-2zM1220 564h1v1h-1zM1223 571h1v2h-1zM1207 570h2v1h-2zM1216 566h1v2h-1zM1203 570h1v2h-1zM1226 558h1v1h-1zM1214 563h1v1h-1zM1212 570h1v2h-1zM1198 570h2v1h-2zM1209 566h1v1h-1zM1219 556h1v1h-1zM1203 567h1v2h-1zM1215 563h1v2h-1zM1225 566h2v1h-2zM1211 600h1v1h-1zM1195 588h1v2h-1zM1204 602h1v1h-1zM1217 608h1v1h-1zM1199 595h1v1h-1zM1209 608h2v1h-2zM1216 602h1v1h-1zM1218 620h1v2h-1zM1225 613h1v1h-1zM1192 601h1v1h-1zM1203 587h1v1h-1zM1192 604h1v1h-1zM1200 593h1v1h-1zM1183 613h2v2h-2zM1205 609h1v1h-1zM1209 598h1v1h-1zM1206 606h1v1h-1zM1201 612h2v1h-2zM1199 600h1v1h-1zM1202 599h1v1h-1zM1213 600h1v1h-1zM1201 606h1v2h-1zM1204 598h1v1h-1zM1211 609h1v1h-1zM1215 599h1v1h-1zM1196 603h1v1h-1zM1186 609h1v1h-1zM1202 608h1v1h-1zM1207 598h1v1h-1zM1204 615h1v1h-1zM1214 614h1v1h-1zM1205 611h1v1h-1zM1194 601h2v1h-2zM1216 617h1v1h-1zM1207 618h1v1h-1zM1183 616h2v1h-2zM1202 601h1v1h-1zM1193 575h2v1h-2zM1215 601h2v1h-2zM1200 591h1v2h-1zM1194 606h1v1h-1zM1190 591h1v2h-1zM1196 600h1v1h-1zM1205 603h1v1h-1zM1200 591h2v1h-2zM1199 591h1v2h-1zM1204 604h1v1h-1zM1211 589h1v2h-1zM1218 606h2v1h-2zM1220 584h1v1h-1zM1203 594h1v1h-1zM1204 579h1v1h-1zM1185 616h1v2h-1zM1203 597h1v1h-1zM1199 607h1v1h-1zM1198 590h2v1h-2zM1193 600h1v1h-1zM1212 610h1v2h-1zM1192 593h1v1h-1zM1246 633h1v1h-1zM1258 640h1v1h-1zM1252 634h1v1h-1zM1228 624h2v1h-2zM1230 622h1v1h-1zM1207 630h1v1h-1zM1258 636h1v1h-1zM1257 625h1v1h-1zM1232 628h1v2h-1zM1272 634h1v1h-1zM1211 630h1v2h-1zM1232 621h1v1h-1zM1248 639h1v1h-1zM1255 631h1v1h-1zM1249 633h1v1h-1zM1209 632h1v1h-1zM1249 627h2v1h-2zM1250 636h2v1h-2zM1242 628h2v2h-2zM1260 641h1v1h-1zM1245 627h1v1h-1zM1245 641h1v2h-1zM1255 629h1v2h-1zM1246 627h1v2h-1zM1259 629h1v1h-1zM1242 630h1v1h-1zM1225 634h1v1h-1zM1253 629h1v1h-1zM1254 631h1v1h-1zM1259 628h1v1h-1zM1246 637h1v1h-1zM1245 633h2v1h-2zM1244 632h1v1h-1zM1242 623h2v1h-2zM1250 635h1v1h-1zM1237 623h2v2h-2zM1270 639h1v1h-1zM1225 633h1v1h-1zM1243 633h1v1h-1zM1250 627h1v1h-1zM1245 626h1v1h-1zM1241 631h1v2h-1zM1223 638h1v1h-1zM1256 623h1v1h-1zM1267 634h1v1h-1zM1258 627h1v1h-1zM1247 635h2v1h-2zM1224 632h1v1h-1zM1225 633h1v2h-1zM1236 635h1v1h-1zM1217 636h1v1h-1zM1247 627h1v2h-1zM1214 639h1v1h-1zM1216 628h1v1h-1zM1240 634h2v1h-2zM1220 627h1v1h-1zM1263 629h1v1h-1zM1215 624h1v1h-1zM1262 628h1v1h-1zM1226 626h1v1h-1zM1248 624h1v2h-1zM1227 622h1v1h-1zM1230 632h1v1h-1zM1214 625h1v1h-1zM1245 628h1v1h-1zM1269 633h2v2h-2zM1236 633h2v2h-2zM1251 631h1v2h-1zM1214 643h1v1h-1zM1228 624h1v1h-1zM1252 628h2v1h-2zM1242 622h1v1h-1zM1239 636h1v1h-1zM1215 633h1v1h-1zM1247 634h1v1h-1zM1234 634h1v1h-1zM1230 625h1v1h-1zM1226 640h1v1h-1zM1249 631h1v1h-1zM1235 629h1v2h-1zM1267 636h1v1h-1zM1263 631h1v1h-1zM1223 630h1v2h-1zM1250 630h1v1h-1zM1228 635h1v2h-1zM1218 635h1v2h-1zM1231 624h1v1h-1zM1245 633h1v1h-1zM1215 619h1v1h-1zM1236 633h1v1h-1zM1248 637h1v1h-1zM1273 631h1v1h-1zM1267 619h1v1h-1zM1240 629h1v1h-1zM1245 622h1v1h-1zM1239 632h2v2h-2zM1213 626h1v1h-1zM1212 623h1v1h-1zM1255 626h1v1h-1zM1223 633h2v1h-2zM1241 625h1v1h-1zM1245 629h2v1h-2zM1254 632h1v1h-1zM1209 627h1v1h-1zM1244 633h1v2h-1zM1225 641h1v1h-1zM1249 630h1v1h-1zM1217 624h1v2h-1zM1228 622h1v1h-1zM1246 634h1v1h-1zM1237 633h1v2h-1zM1244 624h1v1h-1zM1211 632h1v1h-1zM1230 628h1v2h-1zM1236 633h1v2h-1zM1243 630h1v1h-1zM1243 636h2v1h-2zM1259 639h1v1h-1zM1251 631h1v1h-1zM1256 629h1v1h-1zM1278 624h1v1h-1zM1248 624h1v1h-1zM1257 626h1v1h-1zM1234 631h1v1h-1zM1208 632h1v1h-1zM1264 634h1v1h-1zM1200 629h1v1h-1zM1224 629h1v2h-1zM1253 624h1v1h-1zM1232 620h1v1h-1zM1241 633h1v1h-1zM1255 621h1v1h-1zM1213 639h1v2h-1zM1226 627h2v1h-2zM1232 621h1v2h-1zM1219 629h1v1h-1zM1272 632h1v1h-1zM1231 621h1v1h-1zM1225 624h1v1h-1zM1248 625h1v1h-1zM1244 638h1v1h-1zM1213 636h2v1h-2zM1260 634h1v1h-1zM1255 636h1v2h-1zM1238 636h2v1h-2zM1251 592h2v1h-2zM1259 581h1v1h-1zM1255 593h1v1h-1zM1256 580h1v1h-1zM1251 591h1v1h-1zM1244 585h1v1h-1zM1266 574h1v1h-1zM1251 593h1v1h-1zM1262 577h1v1h-1zM1249 570h2v2h-2zM1252 589h2v1h-2zM1268 585h2v1h-2zM1274 587h1v1h-1zM1237 582h1v1h-1zM1262 580h1v2h-1zM1266 576h2v1h-2zM1255 584h1v2h-1zM1237 574h1v1h-1zM1263 574h1v1h-1zM1255 594h1v1h-1zM1260 581h1v1h-1zM1258 590h2v1h-2zM1240 591h1v1h-1zM1263 576h1v1h-1zM1252 596h1v1h-1zM1243 576h1v1h-1zM1268 591h1v2h-1zM1248 585h1v1h-1zM1267 582h1v1h-1zM1249 580h1v1h-1zM1272 593h1v1h-1zM1256 591h1v1h-1zM1272 593h1v2h-1zM1242 585h1v1h-1zM1259 592h1v1h-1zM1266 581h1v1h-1zM1265 583h1v1h-1zM1253 590h1v2h-1zM1268 596h2v1h-2zM1255 591h1v1h-1zM1257 581h1v1h-1zM1262 582h1v1h-1zM1249 584h1v1h-1zM1266 589h1v1h-1zM1241 580h1v2h-1zM1263 586h2v1h-2zM1259 589h2v1h-2zM1250 580h1v1h-1zM1243 594h1v1h-1zM1310 632h2v1h-2zM1269 629h1v1h-1zM1282 638h1v1h-1zM1311 625h2v1h-2zM1298 633h2v1h-2zM1273 628h1v1h-1zM1286 635h1v1h-1zM1296 642h1v1h-1zM1282 634h1v2h-1zM1298 632h2v1h-2zM1295 629h1v2h-1zM1281 630h1v1h-1zM1296 634h1v1h-1zM1291 632h1v2h-1zM1304 624h2v2h-2zM1296 629h2v1h-2zM1293 636h1v2h-1zM1299 629h1v2h-1zM1290 624h2v1h-2zM1281 626h1v2h-1zM1297 623h1v1h-1zM1287 626h1v1h-1zM1289 627h1v1h-1zM1279 623h2v1h-2zM1302 628h1v1h-1zM1293 636h1v1h-1zM1298 624h1v1h-1zM1282 637h1v1h-1zM1304 632h1v1h-1zM1298 631h1v1h-1zM1303 638h1v1h-1zM1298 625h1v1h-1zM1280 633h1v1h-1zM1293 625h1v1h-1zM1289 633h1v1h-1zM1275 630h1v2h-1zM1302 632h1v1h-1zM1282 631h1v1h-1zM1294 631h1v1h-1zM1289 625h2v1h-2zM1291 638h1v1h-1zM1312 625h2v1h-2zM1291 632h1v1h-1zM1281 632h1v1h-1zM1301 631h1v1h-1zM1279 628h1v1h-1zM1307 627h1v2h-1zM1296 634h1v2h-1zM1282 625h1v2h-1zM1276 636h1v1h-1zM1274 650h1v1h-1zM1277 658h2v1h-2zM1272 651h1v1h-1zM1276 648h1v1h-1zM1280 642h1v1h-1zM1273 650h1v1h-1zM1275 649h1v1h-1zM1271 654h1v1h-1zM1270 650h2v2h-2zM1275 643h1v2h-1zM1277 650h1v1h-1zM1275 646h2v1h-2zM1271 656h1v1h-1zM1273 648h1v1h-1zM1273 655h1v1h-1zM1272 654h1v1h-1zM1274 647h1v1h-1zM1275 650h1v1h-1zM1274 640h2v1h-2zM1278 645h1v1h-1zM1277 646h1v1h-1zM1277 647h1v1h-1zM1277 654h1v1h-1zM1279 655h1v1h-1zM1275 652h2v1h-2zM1270 645h1v1h-1zM1276 651h1v1h-1zM1275 654h2v1h-2zM1273 653h1v2h-1zM1275 647h2v1h-2zM1279 646h1v1h-1zM1275 652h1v1h-1zM1271 647h1v1h-1zM1271 655h1v1h-1zM1274 636h1v1h-1zM1273 641h1v2h-1zM1273 644h1v2h-1zM1275 656h2v1h-2zM1277 644h1v1h-1zM1272 652h1v1h-1zM1271 640h1v1h-1zM1272 653h1v1h-1zM1274 660h1v1h-1zM1274 653h1v1h-1zM1312 655h1v2h-1zM1306 648h1v1h-1zM1292 642h2v1h-2zM1306 643h1v1h-1zM1303 638h2v1h-2zM1321 640h1v2h-1zM1317 645h1v1h-1zM1291 640h2v1h-2zM1312 648h1v1h-1zM1305 640h1v2h-1zM1306 650h1v1h-1zM1309 639h1v1h-1zM1316 643h1v1h-1zM1316 646h1v1h-1zM1321 644h1v1h-1zM1313 635h1v2h-1zM1305 652h2v1h-2zM1306 644h1v1h-1zM1311 645h2v1h-2zM1301 641h1v1h-1zM1311 643h1v1h-1zM1296 647h1v1h-1zM1312 642h1v1h-1zM1314 646h2v1h-2zM1308 634h1v1h-1zM1307 637h1v1h-1zM1314 646h1v1h-1zM1312 647h1v2h-1zM1300 642h1v1h-1zM1300 647h2v2h-2zM1307 642h1v1h-1zM1308 639h1v1h-1zM1314 653h1v1h-1zM1313 639h1v1h-1zM1308 640h1v1h-1zM1320 639h1v1h-1zM1307 650h2v1h-2zM1310 641h1v1h-1zM1300 643h2v1h-2zM1324 644h1v2h-1zM1314 652h2v1h-2zM1312 632h1v2h-1zM1298 647h1v1h-1zM1304 638h1v1h-1zM1317 636h1v2h-1zM1302 641h1v1h-1zM1309 643h2v1h-2zM1301 646h1v1h-1zM1318 645h2v2h-2zM1313 644h1v1h-1zM1308 642h1v1h-1zM1317 641h1v2h-1zM1305 650h1v1h-1zM1300 641h1v1h-1zM1323 644h2v1h-2zM1303 641h1v1h-1zM1306 635h1v2h-1zM1302 644h1v1h-1zM1317 640h1v1h-1zM1312 652h1v1h-1zM1315 640h1v1h-1zM1307 634h2v1h-2zM1315 643h1v1h-1zM1311 642h1v1h-1zM1308 649h1v1h-1zM1316 652h1v1h-1zM1308 633h1v1h-1zM1314 643h1v1h-1zM1308 645h1v1h-1zM1314 645h2v1h-2zM1305 639h1v2h-1zM1318 648h1v1h-1zM1307 640h2v1h-2zM1319 639h1v1h-1zM1306 646h1v1h-1zM1303 648h1v1h-1zM1311 650h1v1h-1zM1331 658h2v1h-2zM1336 659h1v1h-1zM1322 656h1v1h-1zM1323 652h1v1h-1zM1325 653h1v1h-1zM1338 654h2v1h-2zM1323 658h2v1h-2zM1327 659h1v2h-1zM1326 657h1v1h-1zM1327 656h1v1h-1zM1324 652h1v1h-1zM1346 658h1v1h-1zM1342 661h1v1h-1zM1346 664h1v2h-1zM1345 645h1v1h-1zM1334 653h2v1h-2zM1328 660h1v1h-1zM1312 661h1v1h-1zM1341 651h1v1h-1zM1341 655h1v1h-1zM1335 659h1v1h-1zM1321 658h1v1h-1zM1312 650h1v1h-1zM1343 656h1v1h-1zM1315 653h2v2h-2zM1333 657h1v1h-1zM1336 661h1v1h-1zM1336 654h1v1h-1zM1338 657h1v1h-1zM1354 650h1v1h-1zM1323 651h2v1h-2zM1329 657h1v1h-1zM1314 652h1v1h-1zM1337 650h2v1h-2zM1344 656h2v1h-2zM1327 658h2v1h-2zM1332 659h1v2h-1zM1338 655h1v2h-1zM1331 662h2v1h-2zM1330 665h1v1h-1zM1319 656h1v1h-1zM1328 661h1v1h-1zM1321 652h1v1h-1zM1351 661h1v1h-1zM1334 664h1v1h-1zM1320 649h1v1h-1zM1327 653h1v1h-1zM1309 659h1v2h-1zM1334 647h2v2h-2zM1335 657h1v2h-1zM1346 657h2v1h-2zM1339 649h1v1h-1zM1313 664h1v2h-1zM1325 656h1v1h-1zM1325 650h1v1h-1zM1331 661h1v1h-1zM1313 649h2v2h-2zM1325 667h1v1h-1zM1338 657h1v2h-1zM1347 659h1v1h-1zM1338 656h1v1h-1zM1339 656h2v1h-2zM1328 654h1v2h-1zM1322 658h1v1h-1zM1341 654h2v1h-2zM1350 652h1v1h-1zM1334 652h1v1h-1zM1337 656h1v2h-1zM1332 651h1v1h-1zM1318 652h1v1h-1zM1314 649h2v1h-2zM1326 658h1v1h-1zM1328 657h1v1h-1zM1317 655h1v1h-1zM1318 657h1v2h-1zM1330 653h1v1h-1zM1327 652h1v2h-1zM1335 654h1v1h-1zM1321 659h1v1h-1zM1341 659h2v1h-2zM1337 652h2v1h-2zM1306 656h1v1h-1zM1327 651h1v1h-1zM1340 665h1v2h-1zM1327 659h1v1h-1zM1286 658h1v1h-1zM1339 650h1v2h-1zM1321 656h1v2h-1zM1357 653h1v1h-1zM1327 652h2v1h-2zM1334 655h1v1h-1zM1326 650h1v1h-1zM1349 657h1v1h-1zM1331 653h1v1h-1zM1351 649h1v1h-1zM1320 662h1v1h-1zM1318 656h1v1h-1zM1302 662h1v1h-1zM1341 655h2v1h-2zM1343 652h1v1h-1zM1321 661h1v1h-1zM1318 656h2v1h-2zM1327 658h1v1h-1zM1347 652h2v2h-2zM1353 650h1v1h-1zM1336 660h1v1h-1zM1341 653h1v1h-1zM1336 655h1v1h-1zM1317 650h2v1h-2zM1347 644h1v1h-1zM1343 657h1v1h-1zM1328 653h1v1h-1zM1309 658h1v1h-1zM1324 657h1v1h-1zM1324 662h1v1h-1zM1315 660h1v2h-1zM1327 649h1v1h-1zM1360 655h2v1h-2zM1315 647h1v1h-1zM1337 661h1v1h-1zM1307 650h1v1h-1zM1318 659h1v1h-1zM1333 656h1v1h-1zM1331 652h1v1h-1zM1344 651h1v2h-1zM1346 652h1v1h-1zM1351 651h1v2h-1zM1342 651h1v1h-1zM1335 662h1v2h-1zM1336 643h2v1h-2zM1329 653h2v2h-2zM1325 667h2v1h-2zM1338 661h1v1h-1zM1355 658h2v1h-2zM1328 657h2v1h-2zM1322 655h1v1h-1zM1356 661h2v1h-2zM1327 654h1v1h-1zM1316 654h1v1h-1zM1332 660h1v1h-1zM1337 655h1v1h-1zM1318 660h2v1h-2zM1352 657h1v1h-1zM1313 650h1v2h-1zM1303 653h1v2h-1zM1335 657h2v1h-2zM1346 663h1v1h-1zM1315 656h1v1h-1zM1318 655h2v2h-2zM1339 658h1v1h-1zM1333 649h1v1h-1zM1339 659h1v1h-1zM1306 652h1v1h-1zM1339 654h1v1h-1zM1338 662h1v1h-1zM1338 660h1v1h-1zM1335 652h2v1h-2zM1321 650h1v1h-1zM1321 659h1v2h-1zM1338 656h1v2h-1zM1343 647h1v1h-1zM1312 656h1v2h-1zM1327 652h1v1h-1zM1359 659h1v1h-1zM1314 655h1v2h-1zM1347 656h1v1h-1zM1350 661h1v1h-1zM1333 659h1v1h-1zM1331 651h1v1h-1zM1330 655h1v2h-1zM1332 648h1v1h-1zM1328 649h1v1h-1zM1335 650h2v2h-2zM1319 650h1v2h-1zM1316 661h1v1h-1zM1343 653h1v1h-1zM1361 660h1v1h-1zM1347 647h1v1h-1zM1313 658h1v1h-1zM1331 656h1v1h-1zM1327 650h1v1h-1zM1305 657h1v1h-1zM1349 655h1v1h-1zM1326 657h1v2h-1zM1334 652h2v1h-2zM1328 648h1v1h-1zM1315 658h2v1h-2zM1323 649h1v1h-1zM1339 661h1v2h-1zM1337 655h2v1h-2zM1314 656h1v1h-1zM1352 651h2v2h-2zM1315 650h1v1h-1zM1354 657h2v1h-2zM1332 648h1v2h-1zM1363 654h1v2h-1zM1335 651h1v1h-1zM1324 663h1v1h-1zM1329 651h2v1h-2zM1336 653h2v2h-2zM1324 653h2v2h-2zM1354 662h1v1h-1zM1326 656h1v2h-1zM1337 649h1v2h-1zM1319 655h1v1h-1zM1322 654h2v1h-2zM1332 653h1v1h-1zM1328 656h1v1h-1zM1349 653h1v1h-1zM1315 657h1v2h-1zM1314 657h1v1h-1zM1322 654h1v2h-1zM1309 658h2v1h-2zM1304 663h1v1h-1zM1312 649h1v1h-1zM1323 658h1v1h-1zM1342 655h1v1h-1zM1343 648h2v1h-2zM1324 654h1v1h-1zM1334 659h1v2h-1zM1332 649h1v1h-1zM1319 652h1v1h-1zM1328 653h1v2h-1zM1319 657h1v1h-1zM1313 654h1v1h-1zM1329 649h1v1h-1zM1320 661h2v2h-2zM1347 651h1v1h-1zM1326 659h1v1h-1zM1332 655h1v1h-1zM1336 653h1v2h-1zM1324 651h2v1h-2zM1328 654h1v1h-1zM1337 653h1v1h-1zM1289 656h1v1h-1zM1351 650h1v1h-1zM1334 661h1v1h-1zM1326 654h1v1h-1zM1344 653h1v1h-1zM1321 666h1v1h-1zM1338 661h1v2h-1zM1325 652h1v1h-1zM1323 656h1v1h-1zM1312 662h1v1h-1zM1339 663h2v1h-2zM1322 648h1v1h-1zM1330 659h1v1h-1zM1340 660h1v1h-1zM1344 661h2v1h-2zM1345 653h1v1h-1zM1326 662h1v1h-1zM1341 662h1v2h-1zM1336 649h2v1h-2zM1332 655h2v1h-2zM1330 643h1v1h-1zM1321 660h1v1h-1zM1349 656h2v1h-2zM1350 660h1v1h-1zM1308 660h1v2h-1zM1311 649h1v1h-1zM1340 654h2v2h-2zM1335 654h2v1h-2zM1338 653h1v2h-1zM1337 652h1v1h-1zM1335 671h1v1h-1zM1336 650h1v1h-1zM1327 644h1v1h-1zM1334 662h1v1h-1zM1344 658h1v1h-1zM1340 665h1v1h-1zM1320 659h1v1h-1zM1322 658h2v1h-2zM1359 654h1v2h-1zM1338 655h1v1h-1zM1334 649h1v2h-1zM1305 666h1v1h-1zM1332 646h2v1h-2zM1339 660h1v1h-1zM1329 653h1v1h-1zM1332 658h1v1h-1zM1325 649h1v1h-1zM1316 663h2v1h-2zM1337 651h1v1h-1zM1341 658h1v2h-1zM1335 664h1v1h-1zM1331 644h1v1h-1zM1343 655h1v1h-1zM1349 651h1v1h-1zM1325 645h1v1h-1zM1334 646h1v1h-1zM1343 660h1v1h-1zM1346 645h1v2h-1zM1336 651h1v1h-1zM1310 655h1v2h-1zM1319 653h1v1h-1zM1308 664h1v1h-1zM1343 661h1v1h-1zM1325 654h1v1h-1zM1315 658h1v1h-1zM1296 651h1v1h-1zM1341 657h1v1h-1zM1350 657h2v1h-2zM1325 639h2v1h-2zM1331 657h1v1h-1zM1356 655h1v1h-1zM1329 664h1v1h-1zM1348 656h1v2h-1zM1337 665h1v1h-1zM1325 656h1v2h-1zM1308 650h1v2h-1zM1339 653h1v1h-1zM1331 651h1v2h-1zM1342 658h1v1h-1zM1337 653h1v2h-1zM1313 653h1v1h-1zM1320 651h1v2h-1zM1326 661h1v2h-1zM1323 660h1v1h-1zM1331 654h1v1h-1zM1331 661h2v1h-2zM1343 653h1v2h-1zM1343 662h1v1h-1zM1343 660h2v1h-2zM1333 661h1v2h-1zM1330 661h1v1h-1zM1326 660h1v1h-1zM1329 654h1v1h-1zM1318 654h1v1h-1zM1322 659h1v2h-1zM1310 657h2v1h-2zM1320 662h2v2h-2zM1320 655h1v1h-1zM1329 652h1v2h-1zM1346 664h2v1h-2zM1319 663h1v2h-1zM1313 658h2v2h-2zM1326 654h2v1h-2zM1334 648h2v1h-2zM1330 651h1v2h-1zM1329 663h1v1h-1zM1285 654h1v1h-1zM1348 655h1v1h-1zM1334 657h1v1h-1zM1342 650h1v1h-1zM1318 661h1v1h-1zM1349 654h1v1h-1zM1314 650h1v2h-1zM1325 647h1v1h-1zM1337 652h1v2h-1zM1325 653h2v1h-2zM1358 653h1v2h-1zM1326 664h1v1h-1zM1311 655h1v1h-1zM1316 659h1v1h-1zM1313 663h1v1h-1zM1338 660h1v2h-1zM1325 658h1v2h-1zM1328 650h2v1h-2zM1342 653h2v2h-2zM1320 654h1v1h-1zM1345 651h1v1h-1zM1338 649h1v1h-1zM1341 646h1v1h-1zM1316 662h1v1h-1zM1327 657h1v1h-1zM1320 659h1v2h-1zM1334 665h2v2h-2zM1332 648h2v1h-2zM1328 662h1v1h-1zM1328 651h1v1h-1zM1334 649h2v2h-2zM1336 661h1v2h-1zM1340 661h2v1h-2zM1327 663h1v1h-1zM1324 653h2v1h-2zM1339 652h1v1h-1zM1340 649h1v1h-1zM1317 657h2v1h-2zM1339 656h1v1h-1zM1317 659h1v2h-1zM1305 655h1v1h-1zM1336 665h2v1h-2zM1325 660h1v1h-1zM1311 662h1v1h-1zM1347 652h1v1h-1zM1301 656h1v1h-1zM1327 660h1v1h-1zM1344 655h1v1h-1zM1328 661h1v2h-1zM1357 654h1v1h-1zM1333 660h1v1h-1zM1336 662h1v1h-1zM1330 662h2v1h-2zM1366 656h1v1h-1zM1309 655h1v1h-1zM1315 653h1v1h-1zM1350 655h1v1h-1zM1349 638h1v1h-1zM1350 638h1v1h-1zM1351 632h1v1h-1zM1346 639h1v1h-1zM1346 636h1v1h-1zM1340 639h1v1h-1zM1350 638h1v2h-1zM1348 639h1v1h-1zM1352 638h1v1h-1zM1344 637h1v2h-1zM1346 632h1v1h-1zM1339 638h2v1h-2zM1352 635h1v1h-1zM1351 641h1v1h-1zM1350 636h1v1h-1zM1356 642h1v1h-1zM1344 637h1v1h-1zM1341 635h1v1h-1zM1342 634h1v1h-1zM1345 642h1v1h-1zM1347 639h1v1h-1zM1346 637h1v1h-1zM1353 637h1v1h-1zM1350 637h2v1h-2zM1355 638h1v1h-1zM1358 647h1v1h-1zM1347 638h1v1h-1zM1351 635h2v1h-2zM1381 715h1v1h-1zM1369 686h1v1h-1zM1367 692h1v1h-1zM1365 687h1v2h-1zM1359 688h1v2h-1zM1369 704h1v1h-1zM1368 699h1v2h-1zM1368 682h1v1h-1zM1355 684h1v1h-1zM1364 697h1v1h-1zM1355 691h2v1h-2zM1359 697h1v1h-1zM1367 708h1v2h-1zM1375 681h1v1h-1zM1367 689h1v1h-1zM1376 696h1v1h-1zM1360 700h1v1h-1zM1353 696h1v1h-1zM1360 704h1v1h-1zM1359 690h1v1h-1zM1359 693h1v1h-1zM1372 700h2v1h-2zM1379 693h1v1h-1zM1371 694h1v1h-1zM1368 697h1v1h-1zM1365 692h2v1h-2zM1347 698h1v2h-1zM1363 694h2v1h-2zM1363 704h1v1h-1zM1367 686h1v2h-1zM1371 678h1v2h-1zM1361 689h1v1h-1zM1372 673h2v1h-2zM1366 701h1v1h-1zM1362 692h1v2h-1zM1350 694h1v1h-1zM1363 696h2v1h-2zM1346 689h2v1h-2zM1347 692h2v1h-2zM1351 674h1v2h-1zM1375 698h1v1h-1zM1358 695h1v1h-1zM1366 695h1v1h-1zM1356 701h1v2h-1zM1356 695h1v1h-1zM1364 695h1v1h-1zM1350 710h1v1h-1zM1363 705h2v1h-2zM1352 694h1v1h-1zM1361 682h1v1h-1zM1356 688h1v1h-1zM1358 677h1v1h-1zM1363 679h1v1h-1zM1372 709h1v1h-1zM1373 685h1v1h-1zM1363 696h1v2h-1zM1380 701h1v1h-1zM1362 700h1v1h-1zM1368 691h1v1h-1zM1356 690h1v2h-1zM1359 681h1v2h-1zM1360 695h1v1h-1zM1376 689h1v1h-1zM1369 685h1v1h-1zM1366 685h2v2h-2zM1363 688h1v1h-1zM1365 681h1v1h-1zM1374 688h1v2h-1zM1375 671h1v1h-1zM1367 702h1v2h-1zM1362 690h1v1h-1zM1368 695h1v1h-1zM1367 681h1v1h-1zM1347 678h1v1h-1zM1364 689h1v1h-1zM1366 700h1v1h-1zM1362 684h1v2h-1zM1362 694h1v1h-1zM1384 705h2v1h-2zM1364 668h1v1h-1zM1360 688h1v2h-1zM1368 690h1v1h-1zM1371 690h2v1h-2zM1363 695h1v1h-1zM1378 710h1v1h-1zM1360 676h1v1h-1zM1359 688h1v1h-1zM1375 688h1v1h-1zM1369 690h1v2h-1zM1368 692h2v1h-2zM1364 696h1v2h-1zM1359 692h1v2h-1zM1360 688h1v1h-1zM1371 701h1v1h-1zM1378 695h2v1h-2zM1369 686h2v1h-2zM1370 691h1v1h-1zM1360 689h1v1h-1zM1360 692h2v2h-2zM1359 692h1v1h-1zM1352 693h1v2h-1zM1366 699h1v2h-1zM1360 715h1v1h-1zM1366 674h1v1h-1zM1358 688h1v1h-1zM1365 693h1v1h-1zM1358 694h1v1h-1zM1369 699h1v1h-1zM1364 695h1v2h-1zM1387 678h1v1h-1zM1371 707h1v1h-1zM1373 681h2v1h-2zM1357 680h1v1h-1zM1378 678h1v1h-1zM1366 694h1v1h-1zM1375 668h1v1h-1zM1355 687h1v1h-1zM1376 706h1v1h-1zM1373 692h1v1h-1zM1372 690h1v1h-1zM1370 697h2v1h-2zM1358 697h1v1h-1zM1365 691h1v1h-1zM1366 693h1v1h-1zM1369 683h2v1h-2zM1371 688h1v1h-1zM1346 700h2v1h-2zM1362 695h1v1h-1zM1355 686h1v2h-1zM1362 691h1v1h-1zM1355 674h1v2h-1zM1356 689h1v2h-1zM1361 701h1v1h-1zM1374 684h1v1h-1zM1375 691h1v1h-1zM1359 691h1v1h-1zM1370 681h1v1h-1zM1360 702h2v1h-2zM1355 713h1v1h-1zM1361 688h1v2h-1zM1366 703h1v1h-1zM1380 684h1v1h-1zM1369 702h1v1h-1zM1368 696h2v1h-2zM1365 697h1v1h-1zM1380 697h1v1h-1zM1367 700h1v1h-1zM1366 682h2v1h-2zM1361 690h2v1h-2zM1384 693h2v1h-2zM1375 703h1v1h-1zM1367 683h1v1h-1zM1360 701h1v1h-1zM1363 684h1v1h-1zM1368 675h1v2h-1zM1376 693h2v1h-2zM1361 695h1v1h-1zM1372 701h1v1h-1zM1363 689h1v1h-1zM1368 693h1v1h-1zM1370 700h2v2h-2zM1375 699h1v2h-1zM1356 697h1v1h-1zM1363 683h1v1h-1zM1368 700h1v1h-1zM1355 698h1v1h-1zM1367 691h1v1h-1zM1366 698h1v1h-1zM1374 695h1v1h-1zM1366 687h2v1h-2zM1370 689h1v2h-1zM1364 692h1v1h-1zM1365 695h2v1h-2zM1373 688h1v2h-1zM1366 702h1v1h-1zM1381 697h1v1h-1zM1364 686h1v1h-1zM1356 697h1v2h-1zM1360 697h1v1h-1zM1361 700h1v1h-1zM1375 695h1v1h-1zM1359 692h2v1h-2zM1362 679h1v1h-1zM1355 699h1v1h-1zM1370 701h1v1h-1zM1360 694h1v1h-1zM1358 689h2v1h-2zM1363 699h2v1h-2zM1352 697h1v1h-1zM1349 691h1v2h-1zM1366 683h1v1h-1zM1351 674h1v1h-1zM1355 694h2v1h-2zM1362 693h1v1h-1zM1369 692h1v1h-1zM1362 702h2v1h-2zM1382 698h2v1h-2zM1363 692h1v1h-1zM1358 695h2v1h-2zM1365 679h1v2h-1zM1372 671h2v1h-2zM1362 696h1v1h-1zM1373 711h1v1h-1zM1367 690h1v1h-1zM1365 686h2v1h-2zM1381 688h1v1h-1zM1360 679h1v1h-1zM1368 687h1v1h-1zM1357 689h1v2h-1zM1349 694h1v1h-1zM1371 685h1v1h-1zM1358 709h2v1h-2zM1370 689h1v1h-1zM1352 686h1v1h-1zM1363 699h1v1h-1zM1374 690h1v1h-1zM1368 688h1v2h-1zM1374 700h1v1h-1zM1373 698h1v2h-1zM1361 692h1v1h-1zM1383 679h1v1h-1zM1368 698h2v1h-2zM1363 681h1v1h-1zM1361 683h2v1h-2zM1372 692h1v1h-1zM1363 687h1v1h-1zM1380 692h2v1h-2zM1361 687h1v1h-1zM1363 692h2v1h-2zM1370 687h1v1h-1zM1359 680h1v1h-1zM1363 674h1v1h-1zM1364 683h1v1h-1zM1361 680h1v1h-1zM1353 711h1v1h-1zM1378 660h1v1h-1zM1378 697h1v1h-1zM1357 695h1v1h-1zM1364 694h1v1h-1zM1360 691h1v1h-1zM1377 698h1v1h-1zM1366 685h2v1h-2zM1348 691h1v1h-1zM1358 687h1v1h-1zM1381 692h1v1h-1zM1367 698h2v1h-2zM1372 687h1v1h-1zM1363 673h1v1h-1zM1362 697h1v1h-1zM1370 700h1v1h-1zM1366 714h1v1h-1zM1351 692h2v1h-2zM1372 696h1v2h-1zM1361 710h1v1h-1zM1375 695h1v2h-1zM1372 704h1v1h-1zM1361 694h1v1h-1zM1359 684h1v1h-1zM1372 698h1v1h-1zM1362 699h1v1h-1zM1365 682h1v1h-1zM1357 692h1v1h-1zM1378 691h2v1h-2zM1358 670h1v1h-1zM1373 704h2v1h-2zM1360 687h1v1h-1zM1355 710h2v1h-2zM1370 703h1v1h-1zM1364 684h1v1h-1zM1363 678h1v1h-1zM1380 688h1v1h-1zM1374 676h1v1h-1zM1356 696h1v1h-1zM1334 689h1v1h-1zM1332 699h1v1h-1zM1350 692h1v1h-1zM1319 703h2v1h-2zM1343 694h1v1h-1zM1324 696h1v1h-1zM1333 690h1v2h-1zM1323 706h1v2h-1zM1345 696h1v1h-1zM1326 690h1v1h-1zM1335 692h1v1h-1zM1336 694h2v1h-2zM1347 695h1v1h-1zM1330 693h1v1h-1zM1346 695h1v1h-1zM1349 696h1v1h-1zM1321 696h1v1h-1zM1333 700h1v1h-1zM1309 695h2v1h-2zM1335 694h2v1h-2zM1324 694h1v1h-1zM1338 689h1v1h-1zM1331 696h1v1h-1zM1325 700h1v1h-1zM1337 701h1v1h-1zM1330 691h1v1h-1zM1318 694h2v1h-2zM1342 694h1v1h-1zM1323 697h1v2h-1zM1338 697h1v1h-1zM1366 696h1v1h-1zM1349 689h1v1h-1zM1331 692h2v1h-2zM1343 689h2v1h-2zM1332 697h1v1h-1zM1325 692h1v1h-1zM1331 692h1v1h-1zM1340 696h1v1h-1zM1354 696h1v1h-1zM1326 698h1v1h-1zM1330 698h1v1h-1zM1331 698h1v1h-1zM1347 690h2v1h-2zM1316 698h1v1h-1zM1333 694h1v1h-1zM1342 692h1v2h-1zM1335 696h1v1h-1zM1332 696h1v1h-1zM1335 684h1v1h-1zM1327 698h1v1h-1zM1342 690h1v1h-1zM1346 703h1v1h-1zM1334 706h1v1h-1zM1339 700h1v1h-1zM1331 701h1v1h-1zM1339 692h2v1h-2zM1333 689h1v1h-1zM1340 693h1v1h-1zM1335 691h1v2h-1zM1330 695h1v1h-1zM1339 694h1v1h-1zM1330 695h2v2h-2zM1349 699h2v1h-2zM1327 693h1v1h-1zM1328 695h1v1h-1zM1332 690h1v1h-1zM1333 693h1v1h-1zM1337 690h2v1h-2zM1308 691h1v1h-1zM1332 693h2v1h-2zM1339 691h1v1h-1zM1355 695h1v1h-1zM1341 691h1v1h-1zM1335 691h1v1h-1zM1330 694h1v1h-1zM1342 696h1v1h-1zM1323 698h1v1h-1zM1335 689h1v1h-1zM1340 694h1v1h-1zM1333 699h2v1h-2zM1328 693h1v1h-1zM1325 696h1v1h-1zM1341 699h2v2h-2zM1336 690h1v2h-1zM1347 692h1v1h-1zM1322 691h1v1h-1zM1329 687h1v1h-1zM1355 701h1v1h-1zM1348 688h2v1h-2zM1329 693h1v1h-1zM1291 696h1v1h-1zM1290 694h1v1h-1zM1298 689h1v1h-1zM1278 694h1v1h-1zM1275 689h1v1h-1zM1266 700h1v1h-1zM1281 702h1v1h-1zM1281 695h1v1h-1zM1289 696h1v1h-1zM1263 700h1v1h-1zM1273 695h2v2h-2zM1278 701h1v1h-1zM1290 692h1v2h-1zM1288 698h1v1h-1zM1277 699h2v1h-2zM1297 704h1v1h-1zM1312 698h1v1h-1zM1295 698h1v1h-1zM1275 699h1v1h-1zM1298 695h2v2h-2zM1265 696h1v1h-1zM1303 701h1v1h-1zM1274 693h2v1h-2zM1266 692h1v1h-1zM1302 697h1v1h-1zM1281 697h1v1h-1zM1294 695h1v1h-1zM1296 693h2v1h-2zM1289 703h1v2h-1zM1324 694h2v1h-2zM1273 698h1v1h-1zM1309 701h1v1h-1zM1269 695h1v1h-1zM1292 702h1v1h-1zM1266 699h2v1h-2zM1307 701h1v1h-1zM1280 700h1v1h-1zM1283 697h1v1h-1zM1291 700h2v1h-2zM1284 696h1v1h-1zM1281 698h1v1h-1zM1304 698h1v1h-1zM1299 696h1v1h-1zM1298 698h1v1h-1zM1319 698h1v2h-1zM1285 694h2v1h-2zM1321 697h1v1h-1zM1294 693h1v1h-1zM1276 693h1v1h-1zM1296 703h1v1h-1zM1295 697h1v1h-1zM1302 691h1v1h-1zM1294 690h1v1h-1zM1305 695h1v2h-1zM1290 701h1v1h-1zM1281 690h2v1h-2zM1268 695h1v1h-1zM1299 692h1v1h-1zM1308 694h1v1h-1zM1288 692h2v1h-2zM1269 697h1v1h-1zM1308 689h1v1h-1zM1248 692h2v2h-2zM1287 693h1v2h-1zM1306 690h1v1h-1zM1279 700h1v1h-1zM1284 706h1v1h-1zM1294 699h1v1h-1zM1282 693h1v1h-1zM1297 698h1v2h-1zM1311 701h2v1h-2zM1292 701h1v1h-1zM1274 705h1v1h-1zM1288 691h1v1h-1zM1293 697h1v1h-1zM1281 700h2v1h-2zM1326 699h1v1h-1zM1311 692h1v1h-1zM1284 691h1v1h-1zM1314 700h1v1h-1zM1304 701h1v1h-1zM1295 690h2v2h-2zM1275 694h1v1h-1zM1279 693h1v1h-1zM1272 697h1v1h-1zM1292 699h1v1h-1zM1289 700h2v1h-2zM1297 695h1v1h-1zM1289 691h1v1h-1zM1307 690h1v2h-1zM1290 696h1v1h-1zM1319 700h1v1h-1zM1288 696h1v1h-1zM1283 697h1v2h-1zM1301 703h1v1h-1zM1271 699h1v1h-1zM1281 702h1v2h-1zM1313 698h2v1h-2zM1299 690h1v2h-1zM1310 699h1v2h-1zM1268 693h1v1h-1zM1299 696h1v2h-1zM1277 693h2v1h-2zM1284 700h1v1h-1zM1288 704h1v1h-1zM1280 696h2v1h-2zM1312 695h1v1h-1zM1301 702h1v1h-1zM1325 688h1v1h-1zM1320 695h1v2h-1zM1306 700h1v1h-1zM1303 700h1v1h-1zM1263 699h1v1h-1zM1270 698h1v1h-1zM1310 694h1v1h-1zM1290 698h1v1h-1zM1286 696h2v1h-2zM1276 700h1v1h-1zM1299 700h1v1h-1zM1312 696h1v1h-1zM1291 690h1v1h-1zM1318 699h1v1h-1zM1297 700h2v1h-2zM1279 699h1v1h-1zM1295 696h1v1h-1zM1278 697h1v1h-1zM1295 696h2v1h-2zM1291 698h1v2h-1zM1274 695h1v1h-1zM1286 694h1v1h-1zM1273 696h1v1h-1zM1302 699h1v1h-1zM1283 695h1v1h-1zM1308 692h1v1h-1zM1298 692h1v1h-1zM1285 696h1v2h-1zM1290 700h1v1h-1zM1291 700h1v2h-1zM1297 699h1v1h-1zM1293 692h1v2h-1zM1299 698h1v1h-1zM1283 692h1v1h-1zM1306 696h1v1h-1zM1285 701h1v2h-1zM1284 689h2v1h-2zM1291 695h1v1h-1zM1285 697h1v1h-1zM1292 688h1v2h-1zM1309 699h1v1h-1zM1264 694h1v1h-1zM1289 694h1v1h-1zM1290 699h1v1h-1zM1283 700h1v1h-1zM1294 698h2v1h-2zM1291 697h1v1h-1zM1265 701h1v2h-1zM1280 695h1v1h-1zM1268 698h1v1h-1zM1298 694h1v1h-1zM1293 702h1v1h-1zM1269 700h1v1h-1zM1298 703h1v1h-1zM1270 693h1v2h-1zM1293 699h2v1h-2zM1320 701h1v2h-1zM1306 691h1v2h-1zM1276 701h1v1h-1zM1307 699h1v1h-1zM1286 698h1v1h-1zM1305 686h1v1h-1zM1286 701h2v1h-2zM1311 704h1v1h-1zM1286 709h1v2h-1zM1305 701h1v1h-1zM1275 693h1v1h-1zM1302 700h1v1h-1zM1291 701h1v1h-1zM1303 705h1v1h-1zM1293 691h1v1h-1zM1311 700h2v2h-2zM1306 699h2v1h-2zM1273 695h1v1h-1zM1279 690h2v1h-2zM1288 700h1v1h-1zM1325 703h2v1h-2zM1295 702h1v1h-1zM1286 699h2v1h-2zM1304 699h1v1h-1zM1298 697h1v1h-1zM1285 736h1v1h-1zM1281 732h2v1h-2zM1282 725h2v1h-2zM1279 728h2v2h-2zM1296 726h1v1h-1zM1291 738h1v2h-1zM1283 731h1v1h-1zM1294 725h1v1h-1zM1276 724h2v1h-2zM1279 728h2v1h-2zM1292 722h1v1h-1zM1294 730h1v1h-1zM1292 720h1v1h-1zM1275 720h2v1h-2zM1292 726h1v1h-1zM1286 717h1v1h-1zM1282 728h1v1h-1zM1288 728h1v1h-1zM1288 727h1v1h-1zM1275 727h1v1h-1zM1273 730h1v2h-1zM1281 721h1v1h-1zM1259 732h1v1h-1zM1280 732h1v1h-1zM1284 722h1v1h-1zM1273 725h1v1h-1zM1275 733h1v2h-1zM1276 717h1v1h-1zM1287 725h2v1h-2zM1284 724h2v1h-2zM1290 728h1v1h-1zM1276 721h2v1h-2zM1284 720h1v1h-1zM1288 735h1v1h-1zM1275 732h1v1h-1zM1273 716h1v1h-1zM1288 737h1v2h-1zM1280 730h2v1h-2zM1286 730h1v1h-1zM1287 721h2v1h-2zM1284 732h1v1h-1zM1283 720h1v1h-1zM1299 724h1v1h-1zM1285 723h1v1h-1zM1293 731h1v2h-1zM1291 724h1v1h-1zM1271 729h2v1h-2zM1277 721h1v2h-1zM1270 728h1v1h-1zM1289 731h1v1h-1zM1285 730h1v1h-1zM1286 721h1v1h-1zM1295 725h1v1h-1zM1278 724h1v1h-1zM1278 728h1v2h-1zM1287 725h1v1h-1zM1282 732h1v1h-1zM1277 725h1v1h-1zM1265 717h1v1h-1zM1273 728h1v1h-1zM1275 730h1v2h-1zM1269 726h1v1h-1zM1284 727h1v1h-1zM1277 732h1v1h-1zM1281 727h1v1h-1zM1286 728h1v2h-1zM1290 730h1v1h-1zM1284 729h1v1h-1zM1292 721h2v1h-2zM1278 736h1v2h-1zM1270 734h2v1h-2zM1272 725h1v1h-1zM1278 735h1v1h-1zM1277 728h1v2h-1zM1289 728h1v1h-1zM1281 719h2v1h-2zM1278 734h1v1h-1zM1265 720h1v1h-1zM1286 724h1v1h-1zM1278 728h1v1h-1zM1286 736h1v1h-1zM1275 724h2v2h-2zM1282 722h1v1h-1zM1286 728h2v1h-2zM1280 731h2v1h-2zM1285 729h2v1h-2zM1285 735h1v1h-1zM1288 730h1v2h-1zM1278 725h2v1h-2zM1280 730h1v1h-1zM1292 719h1v1h-1zM1285 724h1v1h-1zM1296 730h1v1h-1zM1284 730h1v1h-1zM1277 726h1v2h-1zM1281 732h1v1h-1zM1304 706h1v2h-1zM1302 709h1v1h-1zM1308 705h1v2h-1zM1322 712h1v1h-1zM1321 705h2v1h-2zM1304 714h1v1h-1zM1311 706h2v1h-2zM1326 710h1v1h-1zM1309 707h1v1h-1zM1296 703h2v1h-2zM1319 711h1v1h-1zM1308 708h1v1h-1zM1328 708h1v1h-1zM1332 702h1v1h-1zM1296 707h1v1h-1zM1298 710h1v2h-1zM1297 706h1v1h-1zM1323 709h1v1h-1zM1313 710h1v1h-1zM1304 711h1v1h-1zM1328 709h1v1h-1zM1335 708h1v1h-1zM1340 708h1v1h-1zM1324 707h2v1h-2zM1337 708h2v1h-2zM1326 707h1v1h-1zM1317 707h2v1h-2zM1328 708h2v1h-2zM1319 710h1v2h-1zM1334 709h1v1h-1zM1307 708h1v1h-1zM1307 704h1v1h-1zM1295 710h1v1h-1zM1296 701h1v2h-1zM1312 710h1v2h-1zM1322 705h1v1h-1zM1303 709h1v2h-1zM1316 709h1v2h-1zM1323 715h1v1h-1zM1316 707h1v2h-1zM1318 702h1v1h-1zM1316 713h1v1h-1zM1344 710h1v2h-1zM1312 705h1v2h-1zM1319 706h1v2h-1zM1309 709h2v1h-2zM1324 703h1v1h-1zM1350 722h2v1h-2zM1357 732h2v1h-2zM1345 726h1v2h-1zM1351 724h1v2h-1zM1343 729h1v1h-1zM1360 719h1v1h-1zM1352 726h2v1h-2zM1356 726h1v1h-1zM1362 727h1v1h-1zM1349 725h2v2h-2zM1355 725h1v1h-1zM1346 727h1v2h-1zM1346 725h2v2h-2zM1363 723h1v1h-1zM1347 728h1v1h-1zM1352 720h1v1h-1zM1348 726h1v1h-1zM1358 720h1v1h-1zM1350 725h1v1h-1zM1354 722h1v2h-1zM1348 724h1v1h-1zM1347 733h1v1h-1zM1362 728h1v1h-1zM1363 718h1v1h-1zM1353 724h1v2h-1zM1355 728h1v1h-1zM1350 726h1v1h-1zM1355 728h1v2h-1zM1349 720h1v1h-1zM1348 721h1v1h-1zM1293 760h1v2h-1zM1300 762h1v2h-1zM1304 756h1v1h-1zM1299 762h1v2h-1zM1298 764h1v1h-1zM1302 754h1v1h-1zM1305 762h1v1h-1zM1307 759h1v1h-1zM1301 759h1v1h-1zM1300 758h1v1h-1zM1303 764h1v1h-1zM1307 763h1v2h-1zM1297 759h1v1h-1zM1294 759h1v1h-1zM1299 755h2v2h-2zM1374 713h1v1h-1zM1378 705h1v1h-1zM1378 709h1v1h-1zM1375 711h1v1h-1zM1376 710h1v1h-1zM1375 714h1v2h-1zM1377 703h2v2h-2zM1375 708h2v1h-2zM1375 715h1v2h-1zM1376 709h1v1h-1zM1378 703h1v1h-1zM1378 706h1v1h-1zM1375 708h1v1h-1zM1379 716h1v1h-1zM1376 711h2v1h-2zM1374 702h1v1h-1zM1379 707h1v1h-1zM1376 717h1v1h-1zM1377 711h1v1h-1zM1375 703h1v2h-1zM1375 718h1v1h-1zM1371 712h1v1h-1zM1374 699h1v1h-1zM1375 705h1v1h-1zM1380 707h1v1h-1zM1375 719h1v2h-1zM1378 700h1v1h-1zM1374 708h1v2h-1zM1376 713h1v1h-1zM1375 710h2v1h-2zM1374 708h1v1h-1zM1379 705h1v1h-1z" fill="#ee120e" shape-rendering="crispEdges"/></g>
<g clip-path="url(#c-all)">
<path d="M464.5 306.2L471.6 329.9L478.8 339.4" fill="none" stroke="#0a100c" stroke-width="2" stroke-linecap="round" stroke-linejoin="round" filter="url(#b1)" opacity=".85"/>
<path d="M511.9 244.7L512.8 277.8" fill="none" stroke="#070b09" stroke-width="2.4" stroke-linecap="round" stroke-linejoin="round" filter="url(#b1)" opacity=".85"/>
<path d="M459.8 263.6L462.2 287.3" fill="none" stroke="#070b09" stroke-width="2" stroke-linecap="round" stroke-linejoin="round" filter="url(#b1)" opacity=".85"/>
<path d="M554.5 235.2L556.9 244.7" fill="none" stroke="#070b09" stroke-width="2.4" stroke-linecap="round" stroke-linejoin="round" filter="url(#b1)" opacity=".85"/>
<path d="M832.6 465.3L819.4 470.3L806.2 481.2L795.9 496.8L784.1 510.0L770.9 524.7" fill="none" stroke="#080d0a" stroke-width="3.04" stroke-linecap="round" stroke-linejoin="round" filter="url(#b1)" opacity=".85"/>
<path d="M823.8 487.1L809.1 495.3L797.4 505.6L784.1 520.3" fill="none" stroke="#080d0a" stroke-width="2.4" stroke-linecap="round" stroke-linejoin="round" filter="url(#b1)" opacity=".85"/>
<path d="M845.9 526.2L828.2 533.5L813.5 537.9L792.9 534.1L778.2 543.8L766.5 549.7L754.7 554.7" fill="none" stroke="#080d0a" stroke-width="2.8" stroke-linecap="round" stroke-linejoin="round" filter="url(#b1)" opacity=".85"/>
<path d="M781.2 468.8L778.2 498.2" fill="none" stroke="#0a100c" stroke-width="2.4" stroke-linecap="round" stroke-linejoin="round" filter="url(#b1)" opacity=".85"/>
<path d="M778.2 551.2L769.4 571.8L756.2 590.9" fill="none" stroke="#080d0a" stroke-width="3.2" stroke-linecap="round" stroke-linejoin="round" filter="url(#b1)" opacity=".85"/>
<path d="M791.5 565.9L784.1 583.5L778.2 599.7" fill="none" stroke="#080d0a" stroke-width="2.8" stroke-linecap="round" stroke-linejoin="round" filter="url(#b1)" opacity=".85"/>
<path d="M842.9 536.5L828.2 548.2L816.5 555.6" fill="none" stroke="#0a100c" stroke-width="2" stroke-linecap="round" stroke-linejoin="round" filter="url(#b1)" opacity=".85"/>
<path d="M804.7 598.2L798.8 610.0" fill="none" stroke="#0a100c" stroke-width="2.4" stroke-linecap="round" stroke-linejoin="round" filter="url(#b1)" opacity=".85"/>
<path d="M737.1 536.5L763.5 539.4" fill="none" stroke="#0d140f" stroke-width="2.4" stroke-linecap="round" stroke-linejoin="round" filter="url(#b1)" opacity=".85"/>
<path d="M828.2 498.2L810.6 515.9" fill="none" stroke="#0d140f" stroke-width="2" stroke-linecap="round" stroke-linejoin="round" filter="url(#b1)" opacity=".85"/>
</g>
<path d="M756 668h8" stroke="#d01818" stroke-width="1"/>
</svg>
</div>

<div class="abs" id="status"></div>
<div class="abs" id="scalebox"></div>
<div class="t" style="left:22.6px;top:988px;font-size:14px;letter-spacing:-.14px;color:#222">1:507,393</div>
<div class="sep" style="left:146px"></div>
<div class="sep" style="left:297px"></div>
<div class="t" style="left:648.5px;top:990.3px;font-size:15px;letter-spacing:-.17px;color:#4a4a4a">155°59'34"W 21°12'3"N</div>
<div class="sep" style="left:1180px"></div>
<div class="t" style="left:1215.4px;top:990px;font-size:14px;letter-spacing:.02px;color:#a2a2a2">Selected Features: 0</div>
<div class="sep" style="left:1354px"></div>
<div class="abs" style="left:1364px;top:987px;width:5px;height:16px;background:#6e6e6e"></div>
<div class="abs" style="left:1373px;top:987px;width:5px;height:16px;background:#6e6e6e"></div>
<div class="sep" style="left:1390px"></div>

<svg width="1436" height="1020" viewBox="0 0 1436 1020" style="left:0;top:0">
<defs>
<linearGradient id="gsun" x1="0" y1="0" x2="0" y2="1"><stop offset="0" stop-color="#fff2b0"/><stop offset="1" stop-color="#f2c94a"/></linearGradient>
</defs>
<!-- new project -->
<g>
<rect x="16" y="12" width="6" height="4" fill="#8fd0fa" stroke="#3d8fd1" stroke-width="1"/>
<rect x="11.5" y="15.4" width="18" height="12.6" fill="#fff" stroke="#3d8fd1" stroke-width="1"/>
<path d="M12 18.5H21L29 20.5V27.5H12Z" fill="#489fe0"/>
<path d="M19.5 27.5C21 23.5 24.5 21 29 20.3V27.5Z" fill="#c4e6f8"/>
<path d="M23.5 21.8C25.5 22.5 26.5 24 27.2 26.5L28.5 26V21Z" fill="#8cc07a" opacity=".8"/>
<path d="M24 10.4l1 1.3 1.5-.7.3 1.6 1.6.2-.5 1.5 1.3 1-1.3 1 .5 1.5-1.6.2-.3 1.6-1.5-.7-1 1.3-1-1.3-1.5.7-.3-1.600-1.600-.2.5-1.500-1.300-1 1.300-1-.5-1.500 1.600-.2.300-1.600 1.500.7z" fill="#e8c54a" stroke="#fdfdf6" stroke-width=".8"/>
<circle cx="24" cy="15.2" r="2.4" fill="url(#gsun)"/>
</g>
<!-- open project -->
<g>
<rect x="51.3" y="12.3" width="7.4" height="3.5" fill="#8fd0fa" stroke="#3d8fd1" stroke-width="1"/>
<rect x="46.5" y="15.4" width="17" height="12.6" fill="#fff" stroke="#3d8fd1" stroke-width="1"/>
<path d="M49.6 20H65.2L63.6 28.2H47Z" fill="#489fe0" stroke="#3d8fd1" stroke-width=".8"/>
<path d="M52.5 27.6C54 24 57.5 21.500 64.300 20.700L63 27.6Z" fill="#c4e6f8"/>
<path d="M58.5 22C60.5 23 61 24.5 61.5 26.500L63 26 63.800 21Z" fill="#8cc07a" opacity=".8"/>
</g>
<!-- save project -->
<g>
<rect x="87.3" y="12.3" width="8.4" height="3.5" fill="#8fd0fa" stroke="#3d8fd1" stroke-width="1"/>
<rect x="82.600" y="15.4" width="18" height="12.600" fill="#fff" stroke="#3d8fd1" stroke-width="1"/>
<path d="M94 18.5H100.100V27.600H94Z" fill="#489fe0"/>
<path d="M94 21.500H100V27.500H94Z" fill="#c4e6f8"/>
<path d="M95 22.500L98.500 26.500 99.800 26V22.500Z" fill="#8cc07a" opacity=".8"/>
<rect x="81.100" y="18.600" width="12.500" height="12.100" rx="1.200" fill="#8b6fb5" stroke="#f6f4fa" stroke-width=".6"/>
<rect x="84" y="20" width="7" height="3.200" fill="#fff"/>
<rect x="82.800" y="25.200" width="9.400" height="5.200" rx=".8" fill="#fff"/>
<rect x="84.600" y="26.600" width="6.400" height="3.800" fill="#4a4a4a"/>
<rect x="85.800" y="27.200" width="1.200" height="3.200" fill="#fff"/>
</g>
<!-- undo -->
<path d="M121.300 13.600L115.800 18.400L121.300 23.300M116.200 18.400H125.200C129.200 18.400 131 21 131 23.600C131 26.700 128.500 28.500 124.500 28.700" fill="none" stroke="#3f97d4" stroke-width="2"/>
<path d="M142.200 20.100L145.600 23.300L149 20.100" fill="none" stroke="#3a3a3a" stroke-width="1.600"/>
<!-- redo -->
<path d="M171.300 13.800L176.500 18.300L171.300 22.500M176 18.300H167.400C163.300 18.300 161 20.800 161 23.600C161 26.600 163.400 28.600 167 28.900" fill="none" stroke="#b2d6ef" stroke-width="2"/>
<path d="M188.800 20.100L192 23.300L195.300 20.100" fill="none" stroke="#3a3a3a" stroke-width="1.600"/>
<!-- customize -->
<path d="M216 17.400H225M216 22L220.500 26.300L225 22" fill="none" stroke="#3a3a3a" stroke-width="1.500"/>
<!-- search icon -->
<g fill="none" stroke="#6a6a6a" stroke-width="1.700"><circle cx="504" cy="21.300" r="4.200"/><path d="M501 24.500L496 29.300"/></g>
<!-- bell -->
<g fill="none" stroke="#6b6b6b" stroke-width="1.300">
<path d="M1186 26.800H1202.200"/>
<path d="M1188.900 26.800V20C1188.900 16.500 1191 14 1194.100 14C1197.200 14 1199.300 16.500 1199.300 20V26.800"/>
<circle cx="1194.100" cy="13" r="1.200"/>
<path d="M1192.300 29.300H1195.900L1194.100 30.500Z" fill="#6b6b6b"/>
</g>
<!-- window buttons -->
<g fill="none" stroke="#3c3c3c" stroke-width="1.200">
<path d="M1291.200 21.500H1303.800"/>
<rect x="1346.600" y="15.600" width="11.600" height="11.600"/>
<path d="M1400.800 15.200L1413.600 28M1413.600 15.200L1400.800 28"/>
</g>
<!-- tab dropdown chevron -->
<path d="M1410.500 93.500L1415 97.800L1419.500 93.500" fill="none" stroke="#4a4a4a" stroke-width="1.500"/>
<!-- tab icon -->
<g>
<rect x="17" y="87" width="18" height="18" fill="#e6f1f6" stroke="#f3ead2" stroke-width="1"/>
<path d="M18 88H30L27.500 95C26 97 24.500 96.500 24 98.500C23.500 100.500 24.500 102 22.500 104H18Z" fill="#9cc283"/>
<path d="M28 104C28 101 29.500 99.500 31 99.500C33 99.500 34 101.500 34 104Z" fill="#9cc283"/>
</g>
<!-- tab close -->
<path d="M84.800 91.300L96.800 103M96.800 91.300L84.800 103" fill="none" stroke="#fff" stroke-width="1.500"/>
</svg>

<svg width="1436" height="1020" viewBox="0 0 1436 1020" style="left:0;top:0">
<!-- scale dropdown arrow -->
<path d="M128.600 994.300H135.400L132 998.200Z" fill="#444"/>
<!-- icon 1: grid + plus -->
<g fill="none" stroke="#8c8c8c" stroke-width="1.400">
<path d="M163 999.300H156.700V987.200H169V993.500"/>
<path d="M162.900 987.200V999.300M156.700 993.300H169"/>
</g>
<path d="M170.500 995V1005.600M165.200 1000.300H175.800" stroke="#c3e2f6" stroke-width="4"/>
<path d="M170.500 995.400V1005.200M165.600 1000.300H175.400" stroke="#3c8fd0" stroke-width="1.800"/>
<!-- icon 2: table -->
<rect x="185" y="987.300" width="17" height="15.400" fill="#9b9b9b"/>
<g fill="#fff">
<rect x="186.600" y="988.700" width="3.600" height="2.400"/><rect x="191.700" y="988.700" width="3.600" height="2.400"/><rect x="196.800" y="988.700" width="3.600" height="2.400"/>
<rect x="186.600" y="992.300" width="3.600" height="2.400"/><rect x="191.700" y="992.300" width="3.600" height="2.400"/><rect x="196.800" y="992.300" width="3.600" height="2.400"/>
<rect x="186.600" y="995.900" width="3.600" height="2.400"/><rect x="191.700" y="995.900" width="3.600" height="2.400"/><rect x="196.800" y="995.900" width="3.600" height="2.400"/>
<rect x="186.600" y="999.500" width="3.600" height="2.400"/><rect x="191.700" y="999.500" width="3.600" height="2.400"/><rect x="196.800" y="999.500" width="3.600" height="2.400"/>
</g>
<!-- icon 3: snapping-ish -->
<path d="M215.800 1004.600H231.900L227.600 995.400Z" fill="#acd3ef"/>
<rect x="212.300" y="1002" width="3.600" height="3.600" fill="#4f9a4a"/>
<rect x="212.400" y="988.500" width="5.200" height="3" fill="#fff" stroke="#4a4a4a" stroke-width="1.200"/>
<path d="M227.500 987.600V992.600M224.400 990.100H230.700" stroke="#4a4a4a" stroke-width="1.300"/>
<path d="M214.600 997.200L222.300 990.600" stroke="#3c8fd0" stroke-width="1.300" stroke-dasharray="2.200 1.200"/>
<path d="M219.600 990.400H222.600V993.300" fill="none" stroke="#3c8fd0" stroke-width="1.200"/>
<path d="M214.400 994.500V997.500H217.300" fill="none" stroke="#3c8fd0" stroke-width="1.200"/>
<rect x="226.600" y="997.300" width="5" height="3.300" fill="#fff" stroke="#4a4a4a" stroke-width="1.200"/>
<path d="M217.500 1001L224 995" stroke="#6a6a6a" stroke-width="1" stroke-dasharray="1 1.600"/>
<!-- icon 4: grid/corrections -->
<rect x="240" y="986.500" width="8.400" height="8.400" fill="#cfe6c6"/>
<path d="M250.100 986V1005.600" stroke="#4a4a4a" stroke-width="1.600" stroke-dasharray="1.600 1.400"/>
<path d="M240 995.600H259.600" stroke="#4a4a4a" stroke-width="1.600" stroke-dasharray="1.600 1.400"/>
<rect x="248.300" y="993.900" width="3.600" height="3.600" fill="#8e8e8e"/>
<!-- icon 5: north -->
<path d="M268.800 999.400V991.400L274.100 999.400V991.400" fill="none" stroke="#3c8fd0" stroke-width="2.200"/>
<path d="M277.300 986V1005.300L288 996" fill="none" stroke="#3a3a3a" stroke-width="1.200"/>
<path d="M281 988C284 987.500 286 989.500 285.600 993" fill="none" stroke="#3c8fd0" stroke-width="1.700"/>
<path d="M282.800 991L285.500 994.600L287.800 990.800" fill="none" stroke="#3c8fd0" stroke-width="1.700"/>
<!-- coord dropdown chevron -->
<path d="M817 995.300L822.200 1000.600L827.400 995.300" fill="none" stroke="#555" stroke-width="2"/>
<!-- selected features icon -->
<rect x="1197" y="986.700" width="11.600" height="11.600" fill="#f4f8f8" stroke="#b4b4b4" stroke-width="1.200"/>
<path d="M1197.600 987.300H1200.500L1204 993.500V997.700H1202L1197.600 991Z" fill="#d3e8e6"/>
<path d="M1200.500 987.500L1204.200 993.500L1208 989.500M1204.200 993.500V998" fill="none" stroke="#b4b4b4" stroke-width="1.100"/>
<circle cx="1194.400" cy="997.100" r="5.100" fill="#f6fafc" stroke="#bdd5e6" stroke-width="1.300"/>
<path d="M1194.400 994.200V1000M1191.500 997.100H1197.300" stroke="#a8a8a8" stroke-width="1.100"/>
<path d="M1198.300 1001L1203.600 1005.600" stroke="#d9cfc2" stroke-width="1.600"/>
<!-- refresh -->
<g fill="none" stroke="#469bd8" stroke-width="2.700">
<path d="M1400 991.400C1402.500 985.800 1411 985.500 1414.800 990.600"/>
<path d="M1416 1000C1413 1005.300 1405 1005.500 1401.200 1001.200"/>
</g>
<path d="M1417.600 985.300V993.700H1409.300L1413 992Z" fill="#469bd8"/>
<path d="M1398 1005V996.500H1406.600L1402.500 998.500Z" fill="#469bd8"/>
<!-- map corner folder icon -->
<path d="M1390.700 951.300L1392.500 949.500H1402.600L1403.600 951.300H1416.200V970.600H1390.700Z" fill="#fbfbfb"/>
<path d="M1395.300 958H1411.300M1395.300 963H1411.300" stroke="#9a9a9a" stroke-width="1.500"/>
<rect x="1395.800" y="968.500" width="3.800" height="2.200" fill="#0d1420"/>
<rect x="1407.300" y="968.500" width="3.800" height="2.200" fill="#0d1420"/>
</svg>

</body>
</html>
